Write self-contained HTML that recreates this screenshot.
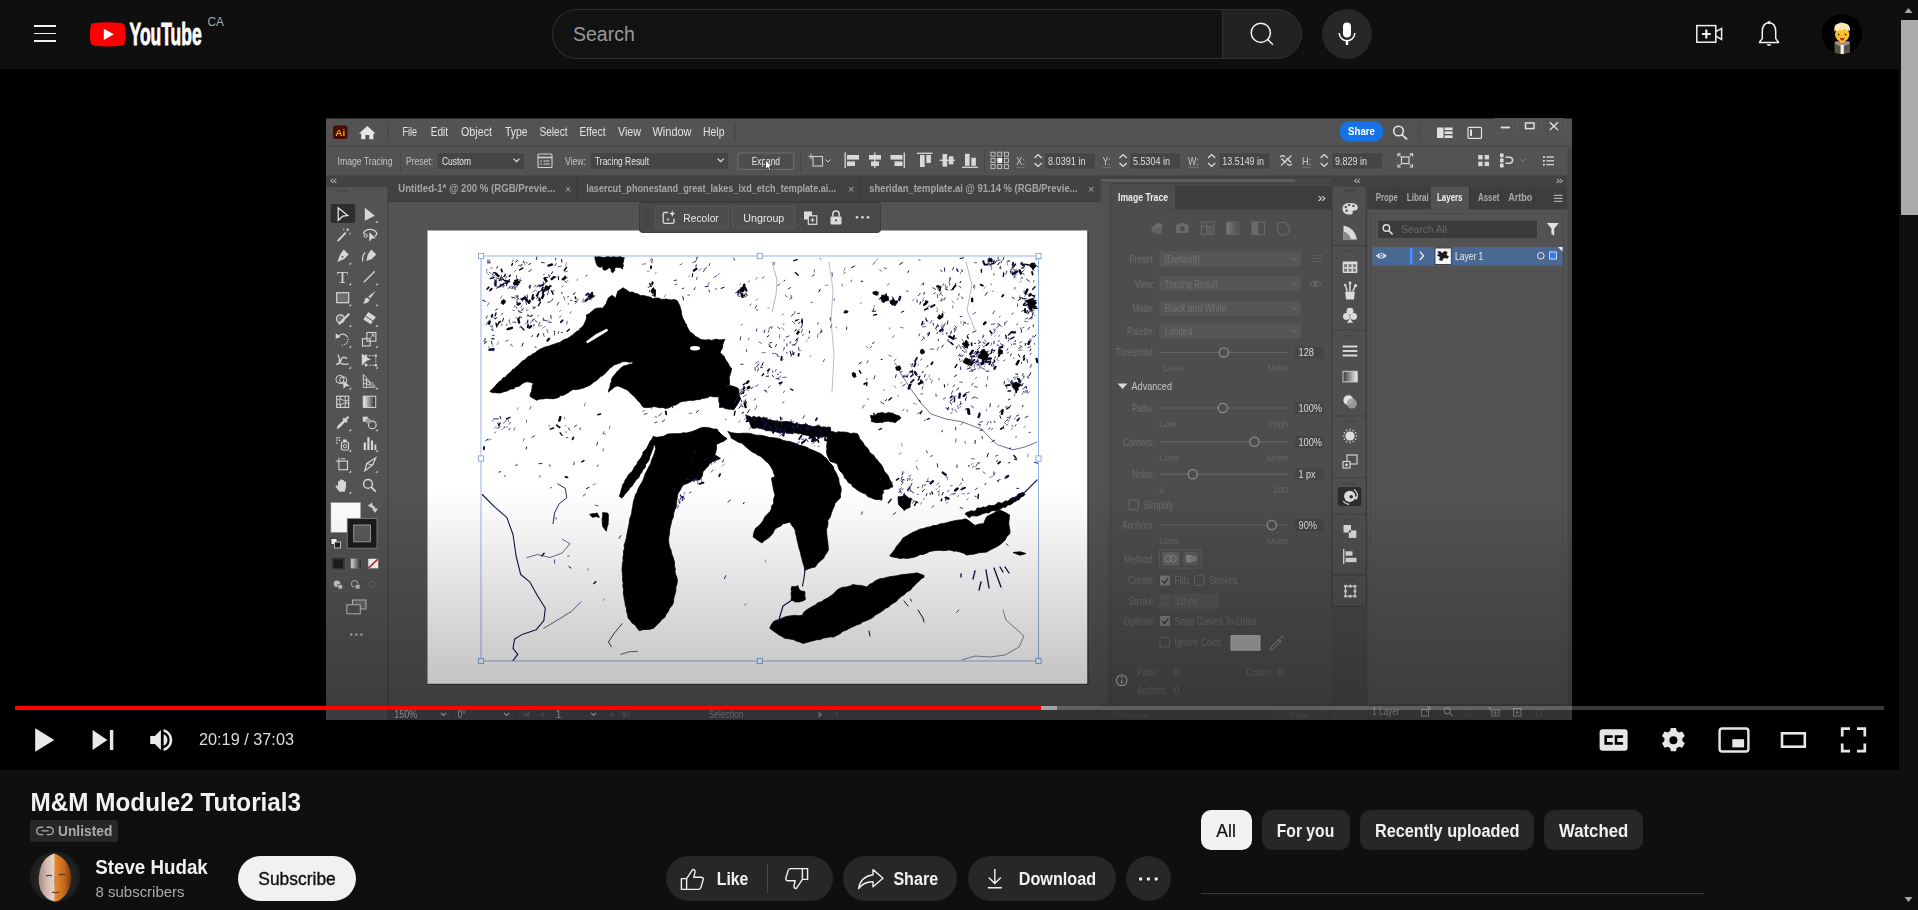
<!DOCTYPE html>
<html lang="en">
<head>
<meta charset="utf-8">
<title>M&amp;M Module2 Tutorial3 - YouTube</title>
<style>
html,body{margin:0;padding:0;background:#0f0f0f;overflow:hidden;}
body{width:1918px;height:910px;position:relative;font-family:"Liberation Sans",sans-serif;color:#f1f1f1;}
.abs{position:absolute;}
#page{position:absolute;left:0;top:0;width:1918px;height:910px;overflow:hidden;background:#0f0f0f;}
#hdr{left:0;top:0;width:1899px;height:69px;background:#0f0f0f;}
.hb{left:33.7px;width:22.6px;height:1.5px;background:#f1f1f1;}
#search{left:552px;top:9px;width:670px;height:50px;box-sizing:border-box;border:1px solid #303030;border-right:none;border-radius:25px 0 0 25px;background:#121212;}
#search span{position:absolute;left:20px;top:13px;font-size:19.5px;color:#9a9a9a;}
#sbtn{left:1222px;top:9px;width:80px;height:50px;box-sizing:border-box;border:1px solid #303030;border-radius:0 25px 25px 0;background:#222222;}
#mic{left:1322px;top:9px;width:50px;height:50px;border-radius:50%;background:#272727;}
#avatar{left:1822px;top:14px;width:40px;height:40px;border-radius:50%;background:#000;overflow:hidden;}
#player{left:0;top:69px;width:1899px;height:701px;background:#000;}
#sb{left:1899px;top:0;width:19px;height:910px;background:#0f0f0f;}
#sbthumb{left:1901px;top:20px;width:17px;height:195px;background:#ababab;}
#title{left:30px;top:787px;font-size:24px;font-weight:bold;color:#f1f1f1;white-space:nowrap;line-height:28px;}
.chip{top:810px;height:40px;border-radius:10px;background:#272727;color:#f1f1f1;font-weight:bold;font-size:17.5px;line-height:40px;text-align:center;white-space:nowrap;}
.pill{top:856px;height:45px;border-radius:23px;background:#272727;color:#f1f1f1;font-weight:bold;font-size:17.5px;line-height:45px;white-space:nowrap;}
.t{white-space:nowrap;line-height:1;}

</style>
</head>
<body>
<div id="page">
<div id="hdr" class="abs">
  <div class="abs hb" style="top:25.2px"></div><div class="abs hb" style="top:32.8px"></div><div class="abs hb" style="top:40.3px"></div>
  <svg class="abs" style="left:90px;top:22px" width="36" height="25" viewBox="0 0 36 25"><path d="M3 1.2 Q17.7 -0.8 32.4 1.2 Q34.8 2 35 5 Q36 12.3 35 19.6 Q34.8 22.6 32.4 23.4 Q17.7 25.4 3 23.4 Q0.6 22.6 0.4 19.6 Q-0.6 12.3 0.4 5 Q0.6 2 3 1.2Z" fill="#ff0000"/><path d="M13.8 6.8 L23.8 12.3 L13.8 17.9Z" fill="#fff"/></svg>
  <svg class="abs" style="left:126px;top:14px" width="110" height="40" viewBox="126 14 110 40" font-family='"Liberation Sans",sans-serif'><text x="129.6" y="45.2" font-size="31" font-weight="bold" fill="#ffffff" stroke="#ffffff" stroke-width="0.9" textLength="72" lengthAdjust="spacingAndGlyphs">YouTube</text><text x="207.5" y="25.7" font-size="12" fill="#aaaaaa" textLength="16.5" lengthAdjust="spacingAndGlyphs">CA</text></svg>
    <div class="abs" id="search"><span>Search</span></div>
  <div class="abs" id="sbtn"></div>
  <svg class="abs" style="left:1245px;top:18px" width="34" height="32" viewBox="0 0 34 32"><circle cx="15.8" cy="14.8" r="9.6" fill="none" stroke="#f1f1f1" stroke-width="1.5"/><path d="M22.8 21.6 L28 26.8" stroke="#f1f1f1" stroke-width="1.5" fill="none"/></svg>
  <div class="abs" id="mic"></div>
  <svg class="abs" style="left:1335px;top:20px" width="24" height="28" viewBox="0 0 24 28"><rect x="8" y="2.6" width="8" height="15" rx="4" fill="#fff"/><path d="M4.2 13 a7.8 7.8 0 0 0 15.6 0" fill="none" stroke="#fff" stroke-width="1.5"/><path d="M12 21 v4" stroke="#fff" stroke-width="2.4"/></svg>
  <svg class="abs" style="left:1694px;top:22px" width="30" height="24" viewBox="0 0 30 24"><rect x="2.8" y="3.6" width="19" height="16.6" fill="none" stroke="#f1f1f1" stroke-width="1.5"/><path d="M21.8 9.6 L27.6 6.4 V17.4 L21.8 14.2" fill="none" stroke="#f1f1f1" stroke-width="1.5"/><path d="M12.3 7.6 v8.8 M7.9 12 h8.8" stroke="#f1f1f1" stroke-width="2.2"/></svg>
  <svg class="abs" style="left:1756px;top:19px" width="26" height="30" viewBox="0 0 26 30"><path d="M13 3.4 C7.6 4 6.3 8.6 6.3 12.4 V19.6 L3.6 23 V23.6 H22.4 V23 L19.7 19.6 V12.4 C19.7 8.6 18.4 4 13 3.4Z" fill="none" stroke="#f1f1f1" stroke-width="1.5"/><circle cx="13" cy="3.6" r="1.6" fill="#f1f1f1"/><path d="M10.6 25.2 a2.5 2.5 0 0 0 4.8 0Z" fill="#f1f1f1"/></svg>
  <div class="abs" id="avatar">
    <svg width="40" height="40" viewBox="0 0 40 40"><rect width="40" height="40" fill="#000"/>
    <path d="M12.5 40 V30.5 Q12.5 27.5 16 27.5 H24.5 Q28 27.5 28 30.5 V40Z" fill="#56524a"/><path d="M12.5 29.5 L20 33 L28 29.5 L27 27.2 H13.5Z" fill="#9a958c"/><path d="M18.6 31 h3.2 V40 h-3.2Z" fill="#f4f4f0"/>
    <rect x="18" y="24" width="4.4" height="5" fill="#f0b13c"/>
    <ellipse cx="20.2" cy="20.3" rx="7.2" ry="7.4" fill="#fbc02d"/>
    <path d="M12.4 17.5 Q11.4 10.2 16.6 9.6 Q19 7.6 22.4 9.2 Q28.6 9.6 28 17.2 Q26.2 15.4 24.4 16.4 Q21.4 13.6 20 17 Q17 14.6 15.6 17 Q14 15.8 12.4 17.5Z" fill="#fbe9b7"/>
    <circle cx="16.6" cy="20.6" r="0.9" fill="#3b2a1a"/><circle cx="23.6" cy="20.6" r="0.9" fill="#3b2a1a"/>
    <path d="M17.6 23.4 Q20.2 24.6 22.8 23.4 Q22 26.6 20.2 26.4 Q18.4 26.6 17.6 23.4Z" fill="#c62828"/></svg>
  </div>
</div>

<div id="player" class="abs"></div>
<svg id="vid" class="abs" style="left:0;top:0" width="1899" height="770" viewBox="0 0 1899 770" font-family='"Liberation Sans",sans-serif'>
<defs>
<linearGradient id="tg" x1="0" x2="1" y1="0" y2="0"><stop offset="0" stop-color="#f2f2f2"/><stop offset="1" stop-color="#2a2a2a"/></linearGradient>
<linearGradient id="tg2" x1="0" x2="1" y1="0" y2="0"><stop offset="0" stop-color="#f2f2f2"/><stop offset="1" stop-color="#222"/></linearGradient>
<linearGradient id="tg3" x1="0" x2="1" y1="0" y2="0"><stop offset="0" stop-color="#777"/><stop offset="1" stop-color="#4e4e4e"/></linearGradient>
<linearGradient id="tg4" x1="0" x2="1" y1="0" y2="0"><stop offset="0" stop-color="#3a3a3a"/><stop offset="1" stop-color="#f0f0f0"/></linearGradient>
<linearGradient id="shade" x1="0" x2="0" y1="0" y2="1"><stop offset="0" stop-color="#000" stop-opacity="0"/><stop offset="1" stop-color="#000" stop-opacity="0.34"/></linearGradient>
<filter id="soft" x="0" y="0" width="100%" height="100%" filterUnits="userSpaceOnUse"><feGaussianBlur stdDeviation="0.45"/></filter>
<clipPath id="frame"><rect x="326" y="118.5" width="1246" height="601.5"/></clipPath>
</defs>
<g clip-path="url(#frame)"><g filter="url(#soft)">
<rect x="326" y="118.5" width="1246" height="601.5" fill="#535353"/>
<line x1="326" y1="146" x2="1572" y2="146" stroke="#474747" stroke-width="1"/>
<rect x="326" y="175.5" width="1246" height="11.5" fill="#424242"/>
<rect x="388" y="176.5" width="713" height="25" fill="#424242"/>
<rect x="333" y="125.5" width="14.5" height="13.5" fill="#470c04" rx="2.5"/>
<text x="335.3" y="136.3" font-size="9.5" fill="#ff9a00" font-weight="bold" textLength="10" lengthAdjust="spacingAndGlyphs">Ai</text>
<path d="M367.3 126 L375.6 133.4 L373.4 133.4 L373.4 139.2 L369.3 139.2 L369.3 135 L365.4 135 L365.4 139.2 L361.2 139.2 L361.2 133.4 L359 133.4Z" fill="#e6e6e6"/>
<line x1="388" y1="123" x2="388" y2="141" stroke="#474747" stroke-width="1"/>
<text x="402.5" y="136.3" font-size="12" fill="#e2e2e2" textLength="14.5" lengthAdjust="spacingAndGlyphs">File</text>
<text x="430.7" y="136.3" font-size="12" fill="#e2e2e2" textLength="17.3" lengthAdjust="spacingAndGlyphs">Edit</text>
<text x="461" y="136.3" font-size="12" fill="#e2e2e2" textLength="31" lengthAdjust="spacingAndGlyphs">Object</text>
<text x="505" y="136.3" font-size="12" fill="#e2e2e2" textLength="22.5" lengthAdjust="spacingAndGlyphs">Type</text>
<text x="539.5" y="136.3" font-size="12" fill="#e2e2e2" textLength="28" lengthAdjust="spacingAndGlyphs">Select</text>
<text x="579.5" y="136.3" font-size="12" fill="#e2e2e2" textLength="26" lengthAdjust="spacingAndGlyphs">Effect</text>
<text x="618" y="136.3" font-size="12" fill="#e2e2e2" textLength="23" lengthAdjust="spacingAndGlyphs">View</text>
<text x="652.5" y="136.3" font-size="12" fill="#e2e2e2" textLength="39" lengthAdjust="spacingAndGlyphs">Window</text>
<text x="703" y="136.3" font-size="12" fill="#e2e2e2" textLength="21.5" lengthAdjust="spacingAndGlyphs">Help</text>
<line x1="735" y1="123" x2="735" y2="141" stroke="#474747" stroke-width="1"/>
<rect x="1339.5" y="121.2" width="44" height="20.6" fill="#1473e6" rx="10.3"/>
<text x="1348" y="135.3" font-size="11" fill="#ffffff" font-weight="bold" textLength="27" lengthAdjust="spacingAndGlyphs">Share</text>
<circle cx="1398.5" cy="131" r="4.8" fill="none" stroke="#e6e6e6" stroke-width="1.6"/>
<line x1="1402" y1="134.6" x2="1407" y2="139.3" stroke="#e6e6e6" stroke-width="1.8"/>
<line x1="1419.5" y1="123" x2="1419.5" y2="141" stroke="#474747" stroke-width="1"/>
<rect x="1437" y="127.5" width="6.5" height="10.5" fill="#e0e0e0"/>
<rect x="1444.6" y="127.5" width="8" height="2.6" fill="#e0e0e0"/>
<rect x="1444.6" y="131.4" width="8" height="2.6" fill="#e0e0e0"/>
<rect x="1444.6" y="135.4" width="8" height="2.6" fill="#e0e0e0"/>
<rect x="1468" y="127.3" width="13.5" height="11" fill="none" rx="1" stroke="#e0e0e0" stroke-width="1.2"/>
<rect x="1470" y="129.5" width="2" height="6.6" fill="#e0e0e0"/>
<rect x="1493" y="118.5" width="72.5" height="14.5" fill="none" rx="2" stroke="#5d5d5d" stroke-width="0.8"/>
<line x1="1517.5" y1="119" x2="1517.5" y2="133" stroke="#5d5d5d" stroke-width="0.8"/>
<line x1="1541.5" y1="119" x2="1541.5" y2="133" stroke="#5d5d5d" stroke-width="0.8"/>
<line x1="1500.7" y1="127.5" x2="1510" y2="127.5" stroke="#e0e0e0" stroke-width="1.8"/>
<rect x="1525.5" y="123" width="8.5" height="5.6" fill="none" stroke="#e0e0e0" stroke-width="1.5"/>
<path d="M1549.8 122.2 L1558 130 M1558 122.2 L1549.8 130" fill="none" stroke="#e0e0e0" stroke-width="1.3"/>
<rect x="329.5" y="154" width="1" height="1" fill="#474747"/>
<rect x="329.5" y="156.5" width="1" height="1" fill="#474747"/>
<rect x="329.5" y="159" width="1" height="1" fill="#474747"/>
<rect x="329.5" y="161.5" width="1" height="1" fill="#474747"/>
<rect x="329.5" y="164" width="1" height="1" fill="#474747"/>
<rect x="329.5" y="166.5" width="1" height="1" fill="#474747"/>
<text x="337.5" y="165" font-size="10.5" fill="#c4c4c4" textLength="55" lengthAdjust="spacingAndGlyphs">Image Tracing</text>
<line x1="400.5" y1="150" x2="400.5" y2="172" stroke="#474747" stroke-width="1"/>
<text x="406" y="165" font-size="10.5" fill="#c4c4c4" textLength="27" lengthAdjust="spacingAndGlyphs">Preset:</text>
<rect x="437" y="152.5" width="87.5" height="17" fill="#454545" rx="1.5" stroke="#5a5a5a" stroke-width="0.6"/>
<text x="442" y="165" font-size="10.5" fill="#e6e6e6" textLength="29" lengthAdjust="spacingAndGlyphs">Custom</text>
<path d="M513.5 158.7 L516.5 161.7 L519.5 158.7" fill="none" stroke="#e0e0e0" stroke-width="1.2"/>
<rect x="538" y="154" width="14" height="13.5" fill="none" rx="1" stroke="#d0d0d0" stroke-width="1.1"/>
<line x1="538" y1="157.5" x2="552" y2="157.5" stroke="#d0d0d0" stroke-width="1.6"/>
<line x1="543.5" y1="161" x2="549.5" y2="161" stroke="#d0d0d0" stroke-width="1"/>
<line x1="543.5" y1="164" x2="549.5" y2="164" stroke="#d0d0d0" stroke-width="1"/>
<rect x="540.3" y="160.4" width="1.4" height="1.3" fill="#d0d0d0"/>
<rect x="540.3" y="163.4" width="1.4" height="1.3" fill="#d0d0d0"/>
<text x="565" y="165" font-size="10.5" fill="#c4c4c4" textLength="21" lengthAdjust="spacingAndGlyphs">View:</text>
<rect x="590" y="152.5" width="138.7" height="17" fill="#454545" rx="1.5" stroke="#5a5a5a" stroke-width="0.6"/>
<text x="595" y="165" font-size="10.5" fill="#e6e6e6" textLength="54" lengthAdjust="spacingAndGlyphs">Tracing Result</text>
<path d="M717.7 158.7 L720.7 161.7 L723.7 158.7" fill="none" stroke="#e0e0e0" stroke-width="1.2"/>
<rect x="738" y="153" width="55.7" height="16.3" fill="#4d4d4d" rx="2" stroke="#737373" stroke-width="0.9"/>
<text x="751.7" y="165" font-size="10.5" fill="#e6e6e6" textLength="28.3" lengthAdjust="spacingAndGlyphs">Expand</text>
<path d="M765.5 160 L765.5 169.2 L767.7 167.3 L769.2 170.6 L770.6 170 L769.2 166.8 L772 166.6Z" fill="#ffffff" stroke="#222" stroke-width="0.7"/>
<line x1="800.5" y1="150" x2="800.5" y2="172" stroke="#474747" stroke-width="1"/>
<rect x="813" y="156.5" width="9.5" height="9.5" fill="none" stroke="#cfcfcf" stroke-width="1.1"/>
<line x1="811" y1="153.5" x2="811" y2="159" stroke="#cfcfcf" stroke-width="1"/>
<line x1="808.5" y1="156.5" x2="814" y2="156.5" stroke="#cfcfcf" stroke-width="1"/>
<path d="M825.5 159.5 L828 162 L830.5 159.5" fill="none" stroke="#cfcfcf" stroke-width="1"/>
<line x1="845.2" y1="152.5" x2="845.2" y2="168" stroke="#d8d8d8" stroke-width="1.3"/>
<rect x="847" y="155" width="12" height="4.6" fill="#d8d8d8"/>
<rect x="847" y="161.4" width="8" height="4.6" fill="#d8d8d8"/>
<line x1="874.8" y1="152.5" x2="874.8" y2="168" stroke="#d8d8d8" stroke-width="1.3"/>
<rect x="869" y="155" width="12" height="4.6" fill="#d8d8d8"/>
<rect x="871" y="161.4" width="8" height="4.6" fill="#d8d8d8"/>
<line x1="904.3" y1="152.5" x2="904.3" y2="168" stroke="#d8d8d8" stroke-width="1.3"/>
<rect x="890.5" y="155" width="12" height="4.6" fill="#d8d8d8"/>
<rect x="894.5" y="161.4" width="8" height="4.6" fill="#d8d8d8"/>
<line x1="917" y1="153.3" x2="932.5" y2="153.3" stroke="#d8d8d8" stroke-width="1.3"/>
<rect x="920" y="155" width="4.6" height="12" fill="#d8d8d8"/>
<rect x="926.3" y="155" width="4.6" height="8" fill="#d8d8d8"/>
<line x1="939.5" y1="160.3" x2="955" y2="160.3" stroke="#d8d8d8" stroke-width="1.3"/>
<rect x="942.5" y="154" width="4.6" height="12.6" fill="#d8d8d8"/>
<rect x="948.8" y="156.3" width="4.6" height="8" fill="#d8d8d8"/>
<line x1="962" y1="167.3" x2="978" y2="167.3" stroke="#d8d8d8" stroke-width="1.3"/>
<rect x="965" y="153.8" width="4.6" height="12" fill="#d8d8d8"/>
<rect x="971.3" y="157.8" width="4.6" height="8" fill="#d8d8d8"/>
<line x1="984.5" y1="150" x2="984.5" y2="172" stroke="#474747" stroke-width="1"/>
<rect x="991.0" y="152.2" width="4" height="4" fill="none" stroke="#c8c8c8" stroke-width="0.9"/>
<rect x="991.0" y="158.39999999999998" width="4" height="4" fill="none" stroke="#c8c8c8" stroke-width="0.9"/>
<rect x="991.0" y="164.6" width="4" height="4" fill="none" stroke="#c8c8c8" stroke-width="0.9"/>
<rect x="997.7" y="152.2" width="4" height="4" fill="none" stroke="#c8c8c8" stroke-width="0.9"/>
<rect x="997.3000000000001" y="157.99999999999997" width="4.8" height="4.8" fill="#f2f2f2"/>
<rect x="997.7" y="164.6" width="4" height="4" fill="none" stroke="#c8c8c8" stroke-width="0.9"/>
<rect x="1004.4" y="152.2" width="4" height="4" fill="none" stroke="#c8c8c8" stroke-width="0.9"/>
<rect x="1004.4" y="158.39999999999998" width="4" height="4" fill="none" stroke="#c8c8c8" stroke-width="0.9"/>
<rect x="1004.4" y="164.6" width="4" height="4" fill="none" stroke="#c8c8c8" stroke-width="0.9"/>
<text x="1016.3" y="165" font-size="10.5" fill="#c4c4c4" textLength="8.7" lengthAdjust="spacingAndGlyphs">X:</text>
<line x1="1016.3" y1="167.3" x2="1025.0" y2="167.3" stroke="#8a8a8a" stroke-width="0.6"/>
<path d="M1034.5 158 L1038.1 154.6 L1041.7 158 M1034.5 163 L1038.1 166.4 L1041.7 163" fill="none" stroke="#e0e0e0" stroke-width="1.2"/>
<rect x="1045" y="153" width="50.5" height="15.8" fill="#454545" rx="1.2" stroke="#5a5a5a" stroke-width="0.5"/>
<text x="1048" y="164.6" font-size="10.5" fill="#dedede" textLength="37.5" lengthAdjust="spacingAndGlyphs">8.0391 in</text>
<text x="1102.5" y="165" font-size="10.5" fill="#c4c4c4" textLength="8" lengthAdjust="spacingAndGlyphs">Y:</text>
<line x1="1102.5" y1="167.3" x2="1110.5" y2="167.3" stroke="#8a8a8a" stroke-width="0.6"/>
<path d="M1119.5 158 L1123.1 154.6 L1126.7 158 M1119.5 163 L1123.1 166.4 L1126.7 163" fill="none" stroke="#e0e0e0" stroke-width="1.2"/>
<rect x="1130" y="153" width="50.7" height="15.8" fill="#454545" rx="1.2" stroke="#5a5a5a" stroke-width="0.5"/>
<text x="1133" y="164.6" font-size="10.5" fill="#dedede" textLength="37" lengthAdjust="spacingAndGlyphs">5.5304 in</text>
<text x="1188" y="165" font-size="10.5" fill="#c4c4c4" textLength="10.7" lengthAdjust="spacingAndGlyphs">W:</text>
<line x1="1188" y1="167.3" x2="1198.7" y2="167.3" stroke="#8a8a8a" stroke-width="0.6"/>
<path d="M1208 158 L1211.6 154.6 L1215.2 158 M1208 163 L1211.6 166.4 L1215.2 163" fill="none" stroke="#e0e0e0" stroke-width="1.2"/>
<rect x="1219.3" y="153" width="50.7" height="15.8" fill="#454545" rx="1.2" stroke="#5a5a5a" stroke-width="0.5"/>
<text x="1222.3" y="164.6" font-size="10.5" fill="#dedede" textLength="41.7" lengthAdjust="spacingAndGlyphs">13.5149 in</text>
<text x="1302" y="165" font-size="10.5" fill="#c4c4c4" textLength="9.3" lengthAdjust="spacingAndGlyphs">H:</text>
<line x1="1302" y1="167.3" x2="1311.3" y2="167.3" stroke="#8a8a8a" stroke-width="0.6"/>
<path d="M1320.6 158 L1324.1999999999998 154.6 L1327.8 158 M1320.6 163 L1324.1999999999998 166.4 L1327.8 163" fill="none" stroke="#e0e0e0" stroke-width="1.2"/>
<rect x="1332" y="153" width="50.5" height="15.8" fill="#454545" rx="1.2" stroke="#5a5a5a" stroke-width="0.5"/>
<text x="1335" y="164.6" font-size="10.5" fill="#dedede" textLength="32" lengthAdjust="spacingAndGlyphs">9.829 in</text>
<path d="M1280 157 q2.5 -2.5 5 0 M1287 164 q2.5 2.5 5 0 M1281 165.5 L1291.5 155.5" fill="none" stroke="#d0d0d0" stroke-width="1.2"/>
<path d="M1281.5 158.5 L1286 163 M1286.5 158 L1291 162.5" fill="none" stroke="#d0d0d0" stroke-width="1.6"/>
<rect x="1401.5" y="157" width="7.5" height="6.6" fill="none" stroke="#d8d8d8" stroke-width="1.2"/>
<path d="M1398 156.5 L1398 153.8 L1400.7 153.8 M1409.8 153.8 L1412.5 153.8 L1412.5 156.5 M1412.5 164.3 L1412.5 167 L1409.8 167 M1400.7 167 L1398 167 L1398 164.3" fill="none" stroke="#d8d8d8" stroke-width="1.2"/>
<path d="M1398.4 154.2 L1401 156.6 M1412.1 154.2 L1409.5 156.6 M1412.1 166.6 L1409.5 164.2 M1398.4 166.6 L1401 164.2" fill="none" stroke="#d8d8d8" stroke-width="1"/>
<rect x="1478.2" y="155" width="4.4" height="4.4" fill="#d8d8d8"/>
<rect x="1484.6" y="155" width="4.4" height="4.4" fill="#d8d8d8"/>
<rect x="1478.2" y="161.7" width="4.4" height="4.4" fill="#d8d8d8"/>
<rect x="1484.6" y="161.7" width="4.4" height="4.4" fill="#d8d8d8"/>
<rect x="1500" y="153.5" width="3.6" height="3.6" fill="#d8d8d8"/>
<rect x="1500" y="158.6" width="3.6" height="3.6" fill="#d8d8d8"/>
<rect x="1500" y="163.7" width="3.6" height="3.6" fill="#d8d8d8"/>
<line x1="1501.8" y1="153.5" x2="1501.8" y2="168" stroke="#d8d8d8" stroke-width="0.8"/>
<path d="M1505.5 157.3 L1509.5 157.3 a3 3 0 0 1 0 6 L1505.5 163.3" fill="none" stroke="#d8d8d8" stroke-width="1.5"/>
<path d="M1520 158.7 L1522.7 161.4 L1525.4 158.7" fill="none" stroke="#7d7d7d" stroke-width="1"/>
<rect x="1543" y="156.2" width="1.8" height="1.8" fill="#d8d8d8"/>
<line x1="1546.3" y1="157" x2="1554" y2="157" stroke="#d8d8d8" stroke-width="1.3"/>
<rect x="1543" y="160.0" width="1.8" height="1.8" fill="#d8d8d8"/>
<line x1="1546.3" y1="160.8" x2="1554" y2="160.8" stroke="#d8d8d8" stroke-width="1.3"/>
<rect x="1543" y="163.79999999999998" width="1.8" height="1.8" fill="#d8d8d8"/>
<line x1="1546.3" y1="164.6" x2="1554" y2="164.6" stroke="#d8d8d8" stroke-width="1.3"/>
<rect x="1567.5" y="146.5" width="4.5" height="573.5" fill="#4a4a4a"/>
<text x="329.8" y="184" font-size="10" fill="#b8b8b8" textLength="7.5" lengthAdjust="spacingAndGlyphs">«</text>
<text x="1353.5" y="184" font-size="10" fill="#b8b8b8" textLength="7.5" lengthAdjust="spacingAndGlyphs">«</text>
<text x="1555.8" y="184" font-size="10" fill="#b8b8b8" textLength="7.5" lengthAdjust="spacingAndGlyphs">»</text>
<text x="398.2" y="192.2" font-size="10.5" fill="#a6a6a6" font-weight="bold" textLength="157" lengthAdjust="spacingAndGlyphs">Untitled-1* @ 200 % (RGB/Previe...</text>
<text x="564.8" y="192.8" font-size="11" fill="#a6a6a6">×</text>
<line x1="577" y1="177" x2="577" y2="201" stroke="#383838" stroke-width="1"/>
<text x="586.2" y="192.2" font-size="10.5" fill="#a6a6a6" font-weight="bold" textLength="249.8" lengthAdjust="spacingAndGlyphs">lasercut_phonestand_great_lakes_ixd_etch_template.ai...</text>
<text x="848" y="192.8" font-size="11" fill="#a6a6a6">×</text>
<line x1="860" y1="177" x2="860" y2="201" stroke="#383838" stroke-width="1"/>
<text x="869.2" y="192.2" font-size="10.5" fill="#a6a6a6" font-weight="bold" textLength="208.3" lengthAdjust="spacingAndGlyphs">sheridan_template.ai @ 91.14 % (RGB/Previe...</text>
<text x="1088" y="192.8" font-size="11" fill="#a6a6a6">×</text>
<line x1="388" y1="201.5" x2="1101" y2="201.5" stroke="#3a3a3a" stroke-width="1"/>
<line x1="387.7" y1="187" x2="387.7" y2="720" stroke="#454545" stroke-width="1.4"/>
<rect x="337.0" y="190.2" width="0.8" height="1.6" fill="#3f3f3f"/>
<rect x="338.6" y="190.2" width="0.8" height="1.6" fill="#3f3f3f"/>
<rect x="340.2" y="190.2" width="0.8" height="1.6" fill="#3f3f3f"/>
<rect x="341.8" y="190.2" width="0.8" height="1.6" fill="#3f3f3f"/>
<rect x="343.4" y="190.2" width="0.8" height="1.6" fill="#3f3f3f"/>
<rect x="345.0" y="190.2" width="0.8" height="1.6" fill="#3f3f3f"/>
<rect x="346.6" y="190.2" width="0.8" height="1.6" fill="#3f3f3f"/>
<rect x="330.7" y="204" width="24.5" height="19" fill="#2d2d2d" rx="2"/>
<path d="M338.2 207.8 L347.7 215.5 L342.9 216.10000000000002 L338.2 220.3Z" fill="none" stroke="#f0f0f0" stroke-width="1.2"/>
<path d="M364.8 207.8 L374.8 215.8 L364.8 220.8Z" fill="#d6d6d6"/>
<path d="M377.8 220.3 L377.8 222.8 L375.3 222.8Z" fill="#c8c8c8"/>
<line x1="337.7" y1="241.2" x2="345.7" y2="232.7" stroke="#d6d6d6" stroke-width="1.8"/>
<path d="M347.7 228.2 v3 M346.2 229.7 h3 M350.0 232.7 v2 M343.7 228.7 v1.6" fill="none" stroke="#d6d6d6" stroke-width="0.9"/>
<path d="M363.8 234.2 a6.5 4 0 1 1 11 2" fill="none" stroke="#d6d6d6" stroke-width="1.2"/>
<circle cx="365.8" cy="235.7" r="1.6" fill="none" stroke="#d6d6d6" stroke-width="1"/>
<path d="M369.3 232.2 L375.8 238.2 L372.1 238.5 L369.3 241.39999999999998Z" fill="#d6d6d6"/>
<path d="M343.7 249.5 L348.7 254.5 L344.2 259 L337.2 262 L340.2 254.5Z" fill="#d6d6d6"/>
<circle cx="342.5" cy="256.8" r="1" fill="#535353"/>
<path d="M351.2 262 L351.2 264.5 L348.7 264.5Z" fill="#c8c8c8"/>
<path d="M371.3 249.5 L376.3 254.5 L371.8 259 L366.3 261 L367.8 254.5Z" fill="#d6d6d6"/>
<path d="M362.8 261.5 q-1 -6 2.5 -9" fill="none" stroke="#d6d6d6" stroke-width="1.1"/>
<text x="337.09999999999997" y="282.6" font-size="16.5" fill="#d6d6d6" font-family='"Liberation Serif",serif' textLength="11" lengthAdjust="spacingAndGlyphs">T</text>
<path d="M351.2 282.8 L351.2 285.3 L348.7 285.3Z" fill="#c8c8c8"/>
<line x1="363.8" y1="282.3" x2="374.8" y2="271.3" stroke="#d6d6d6" stroke-width="1.3"/>
<path d="M377.8 282.8 L377.8 285.3 L375.3 285.3Z" fill="#c8c8c8"/>
<rect x="336.7" y="292.7" width="12" height="10" fill="#6d6d6d" stroke="#d6d6d6" stroke-width="1.2"/>
<path d="M351.2 303.7 L351.2 306.2 L348.7 306.2Z" fill="#c8c8c8"/>
<path d="M375.8 290.7 L370.3 298.2 L368.3 296.5Z" fill="#d6d6d6"/>
<path d="M367.5 297.9 q3.2 1.2 1.2 3.6 q-2.6 2.6 -5.6 1.7 q2.2 -1.7 1.6 -3.6 q0.8 -2.2 2.8 -1.7Z" fill="#d6d6d6"/>
<path d="M377.8 303.7 L377.8 306.2 L375.3 306.2Z" fill="#c8c8c8"/>
<circle cx="340.4" cy="318.8" r="4" fill="#6d6d6d" stroke="#d6d6d6" stroke-width="1.2"/>
<line x1="338.7" y1="324.3" x2="349.2" y2="313.7" stroke="#d6d6d6" stroke-width="2"/>
<path d="M351.2 324.5 L351.2 327.0 L348.7 327.0Z" fill="#c8c8c8"/>
<path d="M368.3 312.0 L375.8 317.0 L370.8 324.3 L363.3 319.5Z" fill="#d6d6d6"/>
<line x1="365.8" y1="316.3" x2="373.1" y2="321.1" stroke="#535353" stroke-width="1"/>
<path d="M377.8 324.5 L377.8 327.0 L375.3 327.0Z" fill="#c8c8c8"/>
<path d="M337.9 337.1 a5.4 5.4 0 1 1 -0.4 4" fill="none" stroke="#d6d6d6" stroke-width="1.2" stroke-dasharray="12 1.2 1 1.2 1 1.2 1 1.2 1 1.2 1 30"/>
<path d="M335.7 333.3 L340.5 337.0 L335.7 338.8Z" fill="#d6d6d6"/>
<path d="M351.2 345.3 L351.2 347.8 L348.7 347.8Z" fill="#c8c8c8"/>
<rect x="362.5" y="338.7" width="7.6" height="7.2" fill="none" stroke="#d6d6d6" stroke-width="1.1"/>
<rect x="366.90000000000003" y="332.5" width="9" height="8.6" fill="none" stroke="#d6d6d6" stroke-width="1.1"/>
<path d="M370.3 337.8 L373.8 334.3 M371.1 334.3 h2.8 v2.8" fill="none" stroke="#d6d6d6" stroke-width="0.9"/>
<path d="M377.8 345.3 L377.8 347.8 L375.3 347.8Z" fill="#c8c8c8"/>
<path d="M336.2 364.7 q3.5 -1 5 -5 t6 -1.2 M337.7 354.7 q2.5 3.2 1.5 7.8 M339.7 362.4 q3.8 3.2 8.8 1.2" fill="none" stroke="#d6d6d6" stroke-width="1.3"/>
<path d="M351.2 366.2 L351.2 368.7 L348.7 368.7Z" fill="#c8c8c8"/>
<rect x="365.8" y="355.7" width="10" height="9.5" fill="none" stroke="#d6d6d6" stroke-width="1" stroke-dasharray="1.6 1.4"/>
<path d="M361.8 353.7 L370.8 359.7 L366.5 360.7 L361.8 365.7Z" fill="#d6d6d6"/>
<path d="M377.8 366.2 L377.8 368.7 L375.3 368.7Z" fill="#c8c8c8"/>
<rect x="364.7" y="354.59999999999997" width="2.2" height="2.2" fill="#d6d6d6"/>
<rect x="374.7" y="354.59999999999997" width="2.2" height="2.2" fill="#d6d6d6"/>
<rect x="374.7" y="364.09999999999997" width="2.2" height="2.2" fill="#d6d6d6"/>
<rect x="364.7" y="364.09999999999997" width="2.2" height="2.2" fill="#d6d6d6"/>
<circle cx="339.9" cy="379.4" r="4" fill="none" stroke="#d6d6d6" stroke-width="1"/>
<circle cx="343.2" cy="380.4" r="3.6" fill="none" stroke="#d6d6d6" stroke-width="1"/>
<path d="M343.2 380.5 L349.7 386 L346.0 386.2 L343.5 388.8Z" fill="#d6d6d6"/>
<path d="M351.2 387 L351.2 389.5 L348.7 389.5Z" fill="#c8c8c8"/>
<path d="M363.3 374.5 L363.3 387.5 L374.8 387.5Z M363.3 379 L370.5 383.2 M363.3 383.3 L372.8 385.4 M366.5 378 v9.5 M370.1 382 v5.5" fill="none" stroke="#d6d6d6" stroke-width="0.9"/>
<path d="M367.3 387.5 L376.8 387.5 L372.3 381.5Z" fill="#8a8a8a"/>
<path d="M377.8 387 L377.8 389.5 L375.3 389.5Z" fill="#c8c8c8"/>
<rect x="336.7" y="396.2" width="12" height="11.2" fill="none" stroke="#d6d6d6" stroke-width="1.1"/>
<path d="M336.7 400.0 q3 -2.2 6 0 t6 0 M336.7 403.8 q3 2.2 6 0 t6 0 M340.7 396.2 q-2 5.6 0 11.2 M344.7 396.2 q2.2 5.6 0 11.2" fill="none" stroke="#d6d6d6" stroke-width="0.9"/>
<rect x="363.3" y="396.2" width="12.4" height="11.2" fill="url(#tg)" stroke="#d6d6d6" stroke-width="1"/>
<path d="M336.7 429.2 L337.7 425.7 L343.9 419.5 L345.7 421.3 L339.7 427.7Z" fill="#d6d6d6"/>
<path d="M343.2 418.4 L346.9 422.09999999999997 M345.7 419.5 L348.5 416.7" fill="none" stroke="#d6d6d6" stroke-width="2.2"/>
<path d="M351.2 428.7 L351.2 431.2 L348.7 431.2Z" fill="#c8c8c8"/>
<circle cx="372.3" cy="424.9" r="3.8" fill="none" stroke="#d6d6d6" stroke-width="1.1"/>
<rect x="362.8" y="416.7" width="5" height="5" fill="#d6d6d6"/>
<circle cx="368.3" cy="420.9" r="2.6" fill="#9a9a9a"/>
<path d="M377.8 428.7 L377.8 431.2 L375.3 431.2Z" fill="#c8c8c8"/>
<rect x="341.5" y="442.0" width="7" height="8" fill="none" rx="1.2" stroke="#d6d6d6" stroke-width="1.2"/>
<circle cx="345.0" cy="446.1" r="1.7" fill="none" stroke="#d6d6d6" stroke-width="0.9"/>
<rect x="343.0" y="439.5" width="3.6" height="2.5" fill="#d6d6d6"/>
<rect x="336.2" y="437.0" width="1.4" height="1.4" fill="#d6d6d6"/>
<rect x="338.7" y="437.0" width="1.4" height="1.4" fill="#d6d6d6"/>
<rect x="336.2" y="439.5" width="1.4" height="1.4" fill="#d6d6d6"/>
<rect x="338.9" y="439.7" width="1.4" height="1.4" fill="#d6d6d6"/>
<rect x="336.2" y="442.3" width="1.4" height="1.4" fill="#d6d6d6"/>
<path d="M351.2 449.5 L351.2 452.0 L348.7 452.0Z" fill="#c8c8c8"/>
<rect x="363.7" y="442.5" width="2.2" height="7.5" fill="#d6d6d6"/>
<rect x="367.3" y="437.2" width="2.2" height="12.8" fill="#d6d6d6"/>
<rect x="370.90000000000003" y="440.5" width="2.2" height="9.5" fill="#d6d6d6"/>
<rect x="374.5" y="444.5" width="1.8" height="5.5" fill="#d6d6d6"/>
<path d="M377.8 449.5 L377.8 452.0 L375.3 452.0Z" fill="#c8c8c8"/>
<rect x="338.9" y="461.1" width="8.6" height="8.6" fill="none" stroke="#d6d6d6" stroke-width="1.1"/>
<path d="M335.7 461.1 h3.2 M338.9 457.8 v3.3 M341.2 458.8 l4 0" fill="none" stroke="#d6d6d6" stroke-width="1"/>
<path d="M351.2 470.3 L351.2 472.8 L348.7 472.8Z" fill="#c8c8c8"/>
<path d="M375.8 457.8 L372.6 465.1 L364.8 470.8 L366.8 463.5Z" fill="none" stroke="#d6d6d6" stroke-width="1.2"/>
<line x1="366.8" y1="463.5" x2="372.6" y2="465.1" stroke="#d6d6d6" stroke-width="1"/>
<path d="M377.8 470.3 L377.8 472.8 L375.3 472.8Z" fill="#c8c8c8"/>
<path d="M339.5 491.7 q-2.6 -2.6 -4.2 -6 q1.3 -1.3 2.8 0.8 l0 -5.2 q1 -1 1.7 0 l0.3 -1.6 q1 -1 1.9 0 l0.4 0.6 q1 -0.9 1.8 0.2 l0.2 1.2 q1 -0.7 1.6 0.3 q0.6 5.4 -1.2 9.7Z" fill="#d6d6d6"/>
<path d="M351.2 491.2 L351.2 493.7 L348.7 493.7Z" fill="#c8c8c8"/>
<circle cx="368.0" cy="483.9" r="4.4" fill="none" stroke="#d6d6d6" stroke-width="1.4"/>
<line x1="371.3" y1="487.2" x2="375.8" y2="491.7" stroke="#d6d6d6" stroke-width="1.8"/>
<rect x="330.9" y="502.6" width="29.7" height="29.7" fill="#ffffff" stroke="#9a9a9a" stroke-width="0.6"/>
<rect x="347.2" y="518.6" width="29.8" height="29.6" fill="#1f1f1f" stroke="#8a8a8a" stroke-width="0.8"/>
<rect x="353.7" y="525" width="16.8" height="16.8" fill="#5a5a5a" stroke="#a5a5a5" stroke-width="0.9"/>
<path d="M370.5 505.5 q4.5 0 4.5 5 M368.8 505.5 l3 -2 v4Z M375 512 l-2 -3 h4Z" fill="#d0d0d0" stroke="#d0d0d0" stroke-width="1.1"/>
<rect x="331" y="538.5" width="6" height="6" fill="#fff" stroke="#222" stroke-width="0.7"/>
<rect x="334.5" y="542" width="6" height="6" fill="#222" stroke="#ddd" stroke-width="0.9"/>
<rect x="331" y="556.8" width="14.4" height="13.6" fill="#3c3c3c" stroke="#6a6a6a" stroke-width="0.6"/>
<rect x="333.6" y="559.4" width="9.2" height="8.4" fill="#1c1c1c"/>
<rect x="350.8" y="558.6" width="10.4" height="10" fill="url(#tg2)" stroke="#6a6a6a" stroke-width="0.6"/>
<rect x="368" y="558.6" width="10.4" height="10" fill="#ffffff" stroke="#6a6a6a" stroke-width="0.6"/>
<line x1="368.5" y1="568" x2="378" y2="559" stroke="#e0141e" stroke-width="1.7"/>
<rect x="330.9" y="577.7" width="49.7" height="13.7" fill="none" rx="1.5" stroke="#5e5e5e" stroke-width="0.7"/>
<circle cx="337" cy="583.8" r="3.3" fill="#d0d0d0"/>
<rect x="338" y="584.6" width="4.4" height="4.4" fill="#d0d0d0" stroke="#555" stroke-width="0.6"/>
<circle cx="354.6" cy="583.8" r="3.3" fill="none" stroke="#c0c0c0" stroke-width="1"/>
<rect x="355.6" y="584.6" width="4.4" height="4.4" fill="#c0c0c0" stroke="#555" stroke-width="0.6"/>
<circle cx="372.2" cy="584.3" r="3.2" fill="none" stroke="#6a6a6a" stroke-width="1"/>
<rect x="352.5" y="600" width="13.5" height="9" fill="#6a6a6a" stroke="#c8c8c8" stroke-width="1"/>
<rect x="346.8" y="604.8" width="13.5" height="9" fill="#535353" stroke="#c8c8c8" stroke-width="1"/>
<circle cx="351.2" cy="634.6" r="1.2" fill="#c8c8c8"/>
<circle cx="356.3" cy="634.6" r="1.2" fill="#c8c8c8"/>
<circle cx="361.4" cy="634.6" r="1.2" fill="#c8c8c8"/>
<rect x="427.5" y="230.5" width="660" height="453.5" fill="#ffffff"/>
<line x1="1088" y1="230.5" x2="1088" y2="684.5" stroke="#2e2e2e" stroke-width="1"/>
<line x1="427.5" y1="684.3" x2="1088" y2="684.3" stroke="#2e2e2e" stroke-width="1"/>
<path d="M489.8 391.3 L492.1 389.3 L493.8 387.7 L495.2 386.0 L497.0 384.0 L499.0 381.6 L501.3 380.6 L502.8 378.0 L505.4 377.2 L507.2 374.9 L509.6 372.8 L511.4 371.4 L512.4 369.6 L514.6 368.7 L516.3 366.8 L518.8 364.9 L520.6 362.8 L522.0 361.3 L524.6 359.9 L526.1 358.5 L528.2 356.5 L530.9 355.5 L532.5 354.0 L535.0 353.0 L537.5 350.8 L540.0 349.2 L541.6 348.6 L543.8 347.5 L546.1 346.8 L549.5 345.9 L552.2 344.7 L554.4 344.2 L556.8 343.2 L559.8 342.5 L562.0 340.9 L564.2 339.6 L567.5 338.6 L570.4 336.4 L572.4 335.2 L574.4 333.3 L577.1 331.2 L579.5 330.3 L581.2 327.5 L583.2 326.0 L584.5 323.2 L585.6 321.0 L586.5 318.2 L586.4 314.9 L589.0 313.8 L592.2 311.2 L593.8 309.7 L596.4 308.3 L600.1 308.0 L602.7 308.2 L604.4 305.9 L606.3 303.5 L607.1 300.9 L608.5 297.8 L612.2 295.3 L614.2 297.0 L615.7 298.2 L616.6 295.2 L617.8 291.2 L620.5 289.6 L623.1 287.8 L624.9 289.0 L627.3 290.4 L629.4 292.1 L632.6 292.1 L634.7 293.2 L637.3 293.7 L640.4 295.6 L642.6 295.6 L644.8 295.8 L647.8 296.7 L651.0 297.2 L652.7 298.8 L656.0 298.1 L658.7 298.1 L661.4 299.4 L664.5 299.3 L666.4 299.0 L668.8 299.7 L671.7 299.9 L674.0 299.5 L677.1 300.6 L678.5 303.1 L679.8 305.8 L680.5 308.3 L681.3 310.7 L681.5 313.9 L682.4 317.3 L683.8 319.9 L685.2 322.9 L686.5 324.5 L687.0 326.7 L688.3 329.0 L690.1 332.2 L692.4 333.2 L694.2 335.1 L695.5 336.4 L698.5 338.0 L700.3 339.2 L702.5 339.7 L705.6 340.0 L709.3 339.7 L711.6 340.5 L714.5 339.4 L716.3 339.3 L719.7 339.9 L721.3 339.8 L724.8 339.4 L723.6 342.2 L722.9 344.4 L722.2 348.5 L720.0 352.2 L721.6 354.3 L723.7 355.8 L724.7 358.1 L726.4 360.9 L728.1 363.2 L729.6 366.3 L731.5 368.2 L731.2 371.3 L730.4 373.8 L729.8 375.8 L729.2 377.7 L729.5 381.3 L729.4 385.4 L732.4 386.1 L735.8 387.3 L738.1 388.3 L738.9 391.3 L738.9 393.7 L739.6 396.1 L740.7 399.0 L738.8 402.0 L737.6 404.2 L735.6 407.0 L733.8 409.8 L730.8 409.1 L728.0 409.1 L725.3 408.5 L722.7 407.2 L719.4 407.5 L719.7 403.9 L718.8 401.6 L718.8 398.7 L718.8 396.6 L716.5 396.9 L712.7 396.7 L710.2 396.0 L707.8 397.6 L704.4 398.3 L702.0 398.4 L700.1 399.5 L696.5 399.7 L694.3 400.2 L691.3 400.4 L689.2 400.3 L686.4 401.1 L683.1 401.2 L681.1 401.7 L677.9 403.6 L676.1 404.9 L672.7 405.4 L670.0 407.3 L667.7 407.9 L665.2 408.5 L663.0 407.4 L659.6 407.8 L657.4 407.2 L654.2 406.5 L652.3 406.9 L648.9 407.5 L647.0 407.4 L643.7 407.4 L641.7 405.4 L640.2 402.7 L638.4 401.3 L636.0 398.4 L634.3 396.5 L631.8 394.4 L629.8 392.4 L628.1 390.6 L626.3 389.5 L623.7 388.4 L621.2 387.2 L618.7 386.2 L617.0 385.9 L614.2 387.2 L613.0 388.3 L610.8 390.1 L608.3 392.1 L608.9 389.2 L609.9 387.3 L610.2 384.6 L611.3 381.9 L611.6 379.0 L613.0 376.4 L614.8 374.8 L616.9 371.8 L618.5 370.2 L621.2 367.7 L623.5 366.1 L626.4 365.4 L629.2 364.3 L632.2 363.9 L633.1 361.8 L629.1 362.3 L626.1 361.5 L622.7 361.6 L620.5 362.8 L617.4 363.9 L614.4 364.7 L612.4 366.6 L610.3 367.8 L608.5 369.7 L606.8 371.7 L605.0 373.5 L603.0 375.5 L600.6 376.5 L599.3 377.9 L597.0 380.2 L593.7 382.1 L592.2 383.5 L589.5 385.4 L586.3 386.7 L584.0 387.8 L581.7 388.4 L578.8 389.2 L576.2 389.6 L573.0 389.4 L570.4 391.1 L567.8 392.9 L565.9 393.9 L563.5 395.2 L560.8 395.5 L558.7 397.4 L555.8 398.2 L553.5 398.7 L551.1 398.7 L547.8 398.5 L546.1 398.2 L543.6 398.9 L540.0 399.0 L536.7 400.2 L533.7 398.6 L530.2 396.5 L530.2 394.0 L531.6 391.3 L532.1 388.2 L532.1 385.8 L533.5 383.5 L530.2 382.2 L526.7 381.7 L524.0 382.6 L521.8 384.0 L519.2 386.2 L515.4 386.9 L513.7 388.9 L510.6 389.0 L507.6 390.8 L505.0 391.4 L502.2 392.3 L500.5 392.9 L497.9 392.9 L495.5 392.7 L492.2 392.6Z" fill="#000005" stroke="#000005" stroke-width="0.8" stroke-linejoin="round"/>
<path d="M586.5 341.5 L596.0 334.5 L607.0 329.0 L607.5 330.8 L597.0 337.2 L587.5 343.0Z" fill="#ffffff" stroke="#ffffff" stroke-width="0.8" stroke-linejoin="round"/>
<ellipse cx="695" cy="348.3" rx="5" ry="2.2" fill="#ffffff"/>
<path d="M595.0 256.1 L596.1 257.0 L598.9 256.6 L600.4 256.7 L602.7 257.6 L604.4 257.5 L608.3 256.3 L610.8 257.4 L612.9 256.6 L614.1 256.8 L617.3 257.2 L618.3 256.9 L620.3 256.2 L622.1 257.6 L624.6 257.8 L623.9 258.6 L623.7 260.4 L622.8 263.8 L623.4 265.6 L622.6 267.7 L622.8 269.1 L620.4 267.5 L618.4 267.6 L616.5 267.3 L614.6 268.2 L614.8 270.3 L612.9 272.7 L611.3 271.8 L611.2 269.2 L609.3 267.6 L607.1 269.3 L604.4 270.4 L603.0 269.2 L602.0 265.5 L600.7 267.4 L597.9 266.4 L596.4 263.8 L595.7 261.3 L595.0 259.1Z" fill="#000005" stroke="#000005" stroke-width="0.8" stroke-linejoin="round"/>
<path d="M619.3 496.3 L620.5 493.1 L621.0 490.6 L622.0 487.7 L622.5 485.0 L624.6 482.2 L625.0 480.2 L627.1 477.4 L628.1 475.3 L629.9 473.3 L632.2 471.6 L633.8 468.3 L634.4 467.0 L636.9 464.3 L638.0 461.3 L639.2 460.1 L641.1 457.6 L642.7 454.5 L643.1 452.0 L645.0 450.2 L646.9 448.0 L647.9 445.9 L649.1 443.4 L650.0 441.5 L651.6 439.4 L653.5 436.5 L653.7 439.7 L655.2 443.5 L653.5 445.5 L653.0 448.8 L651.9 451.0 L651.1 453.4 L649.8 456.7 L649.2 459.5 L647.8 462.0 L645.7 464.4 L645.2 467.6 L643.1 469.4 L641.6 472.7 L639.9 474.7 L638.6 478.0 L636.4 479.4 L634.8 481.9 L633.6 483.6 L632.0 486.3 L630.0 487.6 L628.9 489.8 L627.0 491.8 L624.7 494.5 L623.1 496.8 L621.7 497.9Z" fill="#000005" stroke="#000005" stroke-width="0.8" stroke-linejoin="round"/>
<path d="M653.0 436.6 L656.8 437.3 L659.6 436.9 L663.7 436.2 L667.6 434.1 L671.9 433.8 L677.1 433.7 L680.3 433.6 L683.8 432.7 L686.4 433.1 L690.2 432.0 L693.5 431.1 L696.5 429.8 L699.6 428.3 L703.1 427.4 L707.1 427.5 L710.5 428.1 L713.2 429.1 L717.0 429.1 L718.7 431.7 L721.6 434.6 L723.9 436.6 L727.1 438.7 L723.3 441.4 L720.3 442.6 L716.2 444.6 L716.6 448.1 L715.8 452.1 L714.8 454.8 L720.5 458.4 L716.4 460.2 L713.1 461.4 L709.5 463.6 L708.2 466.2 L706.0 468.4 L703.0 471.7 L702.1 476.3 L699.9 479.8 L696.6 480.0 L693.7 479.7 L690.3 481.9 L687.0 483.6 L683.4 484.8 L681.5 487.6 L680.2 490.1 L678.0 493.6 L677.5 496.2 L676.8 500.0 L676.5 503.8 L676.2 507.1 L674.8 509.6 L673.7 513.3 L673.5 516.6 L671.9 520.0 L671.2 523.5 L670.2 527.0 L669.7 529.9 L669.5 533.6 L668.8 537.3 L668.5 540.7 L668.9 543.8 L669.7 547.6 L671.0 550.1 L671.7 553.8 L672.6 556.1 L673.8 559.7 L674.5 562.2 L674.5 566.0 L675.3 569.1 L675.0 571.6 L675.6 574.5 L677.0 578.0 L677.4 580.9 L676.9 584.1 L675.8 587.6 L675.9 590.0 L675.1 593.7 L674.2 596.6 L673.6 599.6 L673.3 603.1 L671.9 605.6 L669.4 608.6 L668.3 611.4 L666.1 614.3 L664.8 617.5 L661.9 619.3 L660.0 621.9 L658.1 623.6 L655.4 626.4 L653.5 628.2 L649.8 629.3 L646.1 629.4 L642.5 629.7 L639.4 630.7 L636.7 627.4 L634.9 624.8 L632.0 623.0 L630.3 620.4 L628.1 617.9 L627.5 614.1 L626.5 611.4 L626.5 608.6 L625.3 605.2 L625.0 602.0 L624.2 598.7 L623.9 596.2 L623.2 592.6 L623.7 589.9 L622.8 585.9 L623.2 583.6 L622.5 579.5 L622.7 576.6 L622.4 573.7 L622.0 570.1 L622.3 566.9 L622.3 564.4 L623.1 560.6 L622.9 557.6 L623.5 554.4 L623.5 551.1 L624.5 548.6 L624.1 545.1 L625.5 541.4 L626.3 538.3 L626.7 535.6 L627.4 532.2 L627.9 529.3 L628.6 526.2 L629.3 522.8 L629.5 519.8 L630.7 516.3 L631.6 513.8 L632.0 510.1 L632.7 507.0 L633.0 504.2 L633.6 501.1 L634.7 497.6 L635.5 494.6 L637.0 492.4 L638.2 488.7 L639.6 486.1 L641.5 482.9 L642.9 480.5 L644.2 477.0 L645.2 473.8 L647.0 470.5 L649.1 466.3 L650.6 463.8 L651.6 459.9 L653.4 456.0 L654.7 452.4 L655.8 448.6 L655.0 446.3 L654.1 442.6 L653.9 439.6Z" fill="#000005" stroke="#000005" stroke-width="0.8" stroke-linejoin="round"/>
<path d="M727.8 431.4 L731.3 432.7 L735.1 433.2 L738.0 433.6 L741.8 433.3 L746.2 433.2 L750.4 433.4 L753.4 434.4 L756.3 435.2 L760.1 435.2 L763.7 435.8 L767.2 436.8 L769.9 437.6 L773.3 437.7 L776.9 438.2 L780.3 439.1 L783.4 440.5 L786.7 441.2 L789.8 441.5 L792.9 442.6 L796.8 443.9 L800.0 445.4 L803.0 446.1 L806.8 447.2 L809.5 448.9 L813.0 450.2 L816.4 451.8 L819.6 453.1 L822.4 455.0 L824.6 457.1 L826.8 458.8 L828.7 461.8 L831.6 464.5 L833.2 466.5 L834.1 469.7 L835.9 472.4 L837.2 475.3 L838.7 478.5 L838.9 481.6 L839.5 484.2 L840.8 486.8 L841.3 490.3 L840.4 494.2 L840.4 497.9 L837.2 500.9 L835.0 503.4 L834.2 506.3 L832.6 509.8 L831.2 513.7 L830.3 516.9 L827.8 520.3 L828.0 523.3 L827.5 526.6 L826.4 529.6 L826.7 533.4 L827.1 538.0 L827.7 542.0 L828.1 545.6 L828.4 549.9 L826.9 552.8 L824.7 555.7 L823.8 558.0 L820.9 560.6 L817.5 563.6 L815.2 567.1 L811.9 567.6 L808.7 568.7 L804.7 570.4 L804.3 567.3 L803.5 564.6 L802.5 561.6 L801.9 558.7 L801.0 555.5 L800.4 552.1 L799.4 549.4 L798.6 546.7 L797.9 542.8 L797.1 540.4 L796.5 536.3 L795.4 532.9 L795.2 530.1 L793.5 527.5 L791.2 524.6 L789.9 522.0 L787.0 522.9 L782.9 523.7 L780.9 526.0 L777.4 527.5 L774.6 529.5 L773.1 533.1 L770.7 535.9 L768.4 538.1 L764.6 540.4 L762.0 543.0 L758.7 541.0 L755.6 538.7 L753.1 536.9 L754.0 532.3 L755.5 528.3 L758.7 525.9 L761.2 523.2 L763.3 520.3 L764.8 516.9 L767.5 513.9 L770.4 511.3 L771.4 508.6 L771.7 505.8 L773.6 503.8 L773.7 499.1 L775.0 495.3 L773.8 490.8 L773.1 487.0 L772.3 482.9 L771.5 478.0 L775.2 476.7 L773.8 473.5 L772.9 470.3 L771.0 466.9 L768.4 463.2 L765.4 461.0 L763.2 458.5 L760.4 456.2 L757.2 454.8 L755.4 453.4 L752.4 452.1 L749.7 450.0 L747.3 448.0 L744.7 445.7 L741.5 443.1 L738.0 442.0 L735.2 440.2 L731.4 438.2 L730.3 435.1Z" fill="#000005" stroke="#000005" stroke-width="0.8" stroke-linejoin="round"/>
<path d="M827.7 431.6 L831.5 431.4 L833.0 431.7 L836.4 432.7 L838.1 431.7 L840.8 432.1 L843.8 432.0 L846.1 432.2 L849.7 433.2 L850.9 433.7 L853.5 433.0 L857.5 433.8 L858.7 435.7 L859.5 438.5 L861.0 440.3 L863.1 442.6 L864.8 445.9 L867.0 447.5 L868.5 449.5 L869.4 451.9 L871.5 454.0 L874.0 455.5 L875.1 457.9 L876.5 459.0 L878.7 462.0 L880.4 463.6 L881.9 465.8 L883.0 467.7 L883.9 470.2 L884.9 472.1 L887.4 474.8 L888.5 476.3 L889.4 479.1 L891.0 481.6 L892.3 484.9 L892.8 486.9 L891.2 487.3 L888.3 489.1 L885.1 489.2 L882.8 490.5 L883.6 492.5 L881.9 495.1 L882.2 497.8 L881.7 500.2 L879.4 499.5 L876.0 499.6 L872.8 498.6 L870.6 497.5 L867.7 496.6 L865.6 493.8 L862.9 493.1 L859.8 491.5 L857.6 490.3 L854.8 487.9 L852.5 486.6 L851.6 484.2 L848.3 482.6 L846.5 479.5 L844.4 477.9 L843.8 475.2 L841.6 472.6 L839.6 470.7 L838.1 466.9 L837.2 463.8 L833.3 462.3 L830.1 461.4 L828.8 458.5 L827.1 455.1 L826.6 452.1 L826.9 448.9 L826.5 446.7 L827.1 442.9 L827.4 440.4 L827.8 437.7 L828.4 434.4Z" fill="#000005" stroke="#000005" stroke-width="0.8" stroke-linejoin="round"/>
<path d="M745.7 414.6 L746.6 415.5 L750.3 416.5 L751.4 417.5 L754.2 416.3 L755.2 417.9 L758.2 416.9 L759.4 416.8 L761.8 418.3 L764.2 417.7 L767.2 419.2 L768.3 419.8 L771.2 420.1 L773.5 420.7 L775.9 421.0 L777.1 421.1 L779.7 421.5 L781.7 422.0 L784.0 421.4 L785.7 421.5 L788.2 421.7 L790.3 422.1 L792.5 423.0 L794.7 423.9 L796.0 424.2 L798.9 424.0 L801.4 424.8 L803.1 424.4 L806.2 424.2 L807.9 425.4 L809.1 425.7 L812.3 426.5 L813.8 426.7 L816.1 426.1 L818.8 425.6 L820.6 426.7 L822.0 427.2 L824.1 426.8 L826.4 427.4 L828.0 427.0 L830.4 427.4 L830.7 429.4 L830.5 432.0 L829.7 434.2 L829.4 437.8 L827.6 437.4 L825.0 436.6 L822.9 436.9 L821.4 437.2 L818.4 437.0 L817.7 436.6 L814.3 436.2 L812.1 435.6 L811.4 436.0 L808.8 435.9 L807.1 435.3 L804.5 434.9 L802.5 434.5 L800.3 433.5 L798.3 433.8 L796.4 433.0 L793.5 432.8 L792.4 434.0 L790.2 433.0 L788.5 433.5 L785.9 432.4 L783.3 432.4 L781.2 432.2 L779.5 432.8 L776.4 432.0 L774.1 431.1 L773.2 431.6 L771.3 431.0 L767.7 430.5 L766.5 431.0 L765.0 429.8 L762.0 428.8 L760.2 428.5 L757.1 427.7 L754.5 428.3 L752.4 428.2 L751.1 426.5 L749.9 423.5 L749.6 422.2 L748.4 420.5 L746.3 419.1 L746.3 416.9Z" fill="#000005" stroke="#000005" stroke-width="0.8" stroke-linejoin="round"/>
<path d="M870.3 415.4 L872.2 415.7 L873.9 415.4 L875.7 414.9 L878.3 412.9 L879.3 413.2 L882.6 412.4 L884.1 413.3 L886.0 413.5 L888.6 412.4 L890.6 413.1 L892.9 413.2 L894.5 414.4 L896.8 415.2 L899.2 415.9 L900.8 417.4 L900.0 419.1 L897.8 420.0 L895.4 422.7 L894.3 422.3 L891.8 421.7 L890.7 421.9 L888.1 420.9 L885.9 421.5 L883.8 421.8 L882.1 422.6 L880.4 422.2 L877.3 422.7 L875.9 422.5 L874.4 422.2 L871.4 421.5 L871.4 419.0Z" fill="#000005" stroke="#000005" stroke-width="0.8" stroke-linejoin="round"/>
<path d="M898.1 496.7 L900.8 496.7 L902.9 496.2 L904.8 494.5 L907.1 496.7 L908.6 498.0 L911.5 498.7 L910.9 501.2 L910.5 502.6 L910.0 505.3 L910.3 507.0 L907.5 508.4 L906.3 508.7 L904.1 510.5 L902.8 508.4 L900.6 506.8 L898.6 504.6 L898.4 503.2 L898.3 501.1 L898.1 499.0Z" fill="#000005" stroke="#000005" stroke-width="0.8" stroke-linejoin="round"/>
<path d="M602.7 512.6 L605.9 512.9 L607.7 513.1 L608.4 515.0 L608.3 517.4 L608.4 519.4 L608.1 522.4 L608.2 524.2 L607.3 526.3 L606.8 528.7 L606.4 531.2 L604.8 529.4 L602.8 526.6 L602.5 524.7 L602.2 522.6 L602.3 521.3 L602.0 519.4 L602.7 516.7 L602.7 514.9Z" fill="#000005" stroke="#000005" stroke-width="0.8" stroke-linejoin="round"/>
<path d="M589.7 514.4 L592.1 513.7 L594.8 513.7 L597.1 512.9 L598.0 514.7 L599.4 517.4 L596.4 516.6 L594.1 516.9 L592.3 517.3Z" fill="#000005" stroke="#000005" stroke-width="0.8" stroke-linejoin="round"/>
<path d="M791.8 586.5 L794.0 586.8 L796.0 586.7 L797.6 585.4 L798.8 588.3 L799.2 589.8 L801.1 590.9 L802.6 591.2 L804.8 591.6 L805.0 593.7 L804.7 595.6 L805.2 597.5 L805.2 599.7 L802.5 600.9 L800.7 601.4 L799.4 601.9 L796.6 601.9 L794.6 601.8 L793.3 600.8 L791.0 599.8 L791.4 597.8 L791.3 595.3 L791.0 593.1 L791.5 591.4 L791.1 589.5Z" fill="#000005" stroke="#000005" stroke-width="0.8" stroke-linejoin="round"/>
<path d="M769.8 628.2 L771.3 624.8 L773.6 621.5 L775.9 620.4 L779.0 619.6 L781.7 618.4 L784.6 617.1 L788.5 616.1 L791.7 615.8 L794.8 615.4 L798.2 615.8 L802.2 615.4 L803.8 612.3 L807.1 609.6 L809.8 608.1 L813.0 606.2 L815.7 604.8 L817.9 602.8 L821.6 601.7 L823.8 599.9 L827.5 598.1 L830.1 596.3 L832.2 594.9 L835.2 592.2 L837.1 590.0 L840.1 588.3 L843.1 587.2 L846.8 586.9 L850.3 585.9 L853.0 584.6 L856.9 585.3 L860.2 585.4 L863.7 586.1 L867.0 587.1 L869.2 584.5 L872.1 583.3 L874.6 581.4 L876.4 580.3 L879.9 578.8 L883.2 578.4 L886.2 577.5 L889.9 576.7 L892.9 576.3 L897.0 575.8 L899.8 575.0 L903.2 574.5 L906.2 574.3 L910.5 573.7 L913.4 573.6 L916.7 572.8 L920.9 574.3 L923.9 575.4 L924.0 577.3 L921.2 578.7 L919.4 580.9 L916.2 583.4 L914.5 585.6 L912.4 587.4 L910.4 590.2 L906.8 591.9 L904.5 594.5 L901.5 596.3 L898.8 598.5 L896.2 601.5 L892.9 603.4 L891.0 604.6 L888.6 607.1 L885.7 608.2 L883.6 610.0 L880.7 612.1 L878.6 613.2 L875.5 614.9 L873.2 617.2 L870.3 618.8 L866.9 620.4 L862.9 621.7 L860.4 623.8 L856.4 625.0 L853.4 626.6 L850.0 627.9 L846.6 630.0 L842.8 631.3 L840.4 633.6 L837.1 635.2 L833.6 637.1 L830.4 636.8 L826.8 637.5 L823.5 638.1 L820.0 639.6 L816.8 639.7 L813.3 640.7 L810.4 641.4 L806.4 642.6 L802.9 643.4 L800.4 642.2 L796.4 641.1 L793.3 639.6 L788.8 638.8 L784.8 638.2 L782.0 636.4 L779.1 635.0 L777.0 633.4 L773.4 631.0Z" fill="#000005" stroke="#000005" stroke-width="0.8" stroke-linejoin="round"/>
<path d="M889.7 556.0 L892.2 552.8 L894.6 549.7 L896.5 546.4 L898.6 543.9 L901.0 541.2 L902.8 538.2 L907.0 535.8 L910.0 533.9 L913.1 532.2 L916.4 530.9 L919.7 529.2 L923.7 528.5 L926.3 527.4 L930.0 526.9 L933.0 525.6 L937.1 525.3 L939.7 524.0 L943.2 523.5 L946.8 522.8 L950.3 521.7 L953.5 521.0 L957.5 520.2 L961.4 519.9 L965.4 518.8 L968.7 520.6 L971.9 523.2 L975.0 525.5 L979.2 524.1 L983.6 523.7 L985.1 519.9 L986.7 516.7 L990.2 514.8 L993.2 513.4 L996.6 511.5 L1000.3 510.3 L1003.3 511.6 L1006.4 513.1 L1009.6 515.1 L1009.2 518.7 L1008.7 523.1 L1009.2 527.0 L1009.9 529.7 L1009.9 533.7 L1007.0 536.2 L1005.1 540.0 L1002.7 542.5 L999.5 545.0 L996.7 546.7 L993.6 548.3 L989.9 550.1 L986.6 552.1 L983.5 552.3 L979.6 552.6 L976.6 553.4 L973.4 554.2 L970.5 554.4 L966.6 555.1 L963.8 553.2 L960.0 552.0 L956.3 551.1 L953.8 551.2 L950.0 550.0 L947.1 550.2 L943.7 550.7 L940.4 550.3 L936.3 550.4 L933.3 550.8 L929.7 551.5 L926.8 553.0 L923.2 554.4 L920.1 554.5 L916.6 556.4 L913.1 557.4 L909.5 558.1 L907.0 558.4 L903.5 558.0 L900.0 558.4 L896.4 557.6 L893.4 557.1Z" fill="#000005" stroke="#000005" stroke-width="0.8" stroke-linejoin="round"/>
<path d="M1013.0 552.5 L1020.0 551.8 L1026.0 553.5 L1020.0 555.2Z" fill="#000005" stroke="#000005" stroke-width="0.8" stroke-linejoin="round"/>
<path d="M482.3 494.5 L494.6 506.8 L506.9 517.6 L513.0 534.5 L516.1 556.0 L520.7 574.5 L530.0 582.2 L537.6 596.0 L545.3 608.3 L543.8 620.6 L536.1 629.8 L522.3 634.4 L514.6 639.0 L513.0 648.3 L517.7 654.4 L513.0 660.6" fill="none" stroke="#14144a" stroke-width="1.1" stroke-linejoin="round" stroke-linecap="round" opacity="1"/>
<path d="M557.6 483.8 L565.3 488.4 L566.8 497.6 L559.2 503.8 L554.5 513.0 L553.0 523.7" fill="none" stroke="#14144a" stroke-width="0.9" stroke-linejoin="round" stroke-linecap="round" opacity="1"/>
<path d="M526.9 557.6 L537.6 554.5 L549.9 557.6 L562.2 553.0 L569.9 543.7 L562.2 539.1" fill="none" stroke="#2a2a6a" stroke-width="0.7" stroke-linejoin="round" stroke-linecap="round" opacity="1"/>
<path d="M580.7 602.0 L571.5 611.4 L559.2 619.0 L543.8 628.3" fill="none" stroke="#0a0a3a" stroke-width="0.8" stroke-linejoin="round" stroke-linecap="round" opacity="0.8"/>
<path d="M622.2 623.7 L614.5 632.9 L608.4 642.0 L611.4 646.7" fill="none" stroke="#0a0a3a" stroke-width="0.8" stroke-linejoin="round" stroke-linecap="round" opacity="1"/>
<path d="M620.7 654.4 L629.0 651.8 L637.6 651.3" fill="none" stroke="#0a0a3a" stroke-width="0.8" stroke-linejoin="round" stroke-linecap="round" opacity="0.8"/>
<path d="M805.0 570.0 L804.0 578.0 L802.5 586.0" fill="none" stroke="#0a0a3a" stroke-width="1.1" stroke-linejoin="round" stroke-linecap="round" opacity="1"/>
<path d="M792.0 600.0 L783.0 606.0 L780.0 616.0 L778.0 624.0" fill="none" stroke="#0a0a3a" stroke-width="1.1" stroke-linejoin="round" stroke-linecap="round" opacity="1"/>
<path d="M975.0 571.0 L973.0 579.0" fill="none" stroke="#0a0a3a" stroke-width="1.3" stroke-linejoin="round" stroke-linecap="round" opacity="1"/>
<path d="M986.0 570.0 L989.0 588.0" fill="none" stroke="#0a0a3a" stroke-width="1.3" stroke-linejoin="round" stroke-linecap="round" opacity="1"/>
<path d="M994.0 568.0 L1001.0 587.0" fill="none" stroke="#0a0a3a" stroke-width="1.3" stroke-linejoin="round" stroke-linecap="round" opacity="1"/>
<path d="M1000.0 567.0 L1003.0 572.0" fill="none" stroke="#0a0a3a" stroke-width="1.3" stroke-linejoin="round" stroke-linecap="round" opacity="1"/>
<path d="M1005.0 567.0 L1009.0 573.0" fill="none" stroke="#0a0a3a" stroke-width="1.3" stroke-linejoin="round" stroke-linecap="round" opacity="1"/>
<path d="M981.0 582.0 L979.0 590.0" fill="none" stroke="#0a0a3a" stroke-width="1.3" stroke-linejoin="round" stroke-linecap="round" opacity="1"/>
<path d="M961.0 574.0 L961.0 577.0" fill="none" stroke="#0a0a3a" stroke-width="1.3" stroke-linejoin="round" stroke-linecap="round" opacity="1"/>
<path d="M965.1 513.8 L966.4 512.5 L969.9 511.5 L970.7 510.8 L973.7 511.3 L976.1 510.4 L977.1 508.0 L980.5 508.1 L982.4 507.5 L983.3 506.8 L985.2 507.5 L988.2 505.8 L989.9 505.3 L991.3 505.7 L994.5 505.3 L996.4 504.0 L998.2 502.3 L1001.7 503.3 L1002.6 502.8 L1005.6 500.8 L1007.2 501.3 L1009.0 500.5 L1010.5 498.6 L1013.4 497.4 L1014.4 497.8 L1016.6 496.6 L1017.9 494.3 L1019.9 493.4 L1022.9 492.6 L1025.1 494.2 L1023.3 496.2 L1021.2 496.9 L1018.8 499.9 L1017.5 500.1 L1015.4 501.6 L1013.6 501.9 L1012.7 503.3 L1009.8 504.9 L1007.9 504.9 L1007.5 505.4 L1004.9 507.7 L1003.4 507.1 L1000.3 509.0 L998.2 510.3 L995.6 511.1 L994.0 510.5 L991.9 510.8 L990.4 511.7 L988.8 512.9 L985.7 512.8 L984.2 513.3 L982.7 513.7 L980.0 515.0 L977.5 515.9 L975.8 516.1 L974.1 515.8 L971.8 515.8 L969.4 517.7 L967.1 515.8Z" fill="#000005" stroke="#000005" stroke-width="0.8" stroke-linejoin="round"/>
<path d="M1003.0 610.0 L1006.0 620.0 L1015.0 628.0 L1024.0 636.0 L1019.0 647.0 L1005.0 655.0 L990.0 657.0 L975.0 656.0 L962.0 660.0" fill="none" stroke="#0a0a3a" stroke-width="0.7" stroke-linejoin="round" stroke-linecap="round" opacity="0.7"/>
<path d="M918.0 610.0 L923.0 618.0 L924.0 622.0" fill="none" stroke="#0a0a3a" stroke-width="1" stroke-linejoin="round" stroke-linecap="round" opacity="1"/>
<path d="M904.0 601.0 L908.0 606.0" fill="none" stroke="#0a0a3a" stroke-width="1" stroke-linejoin="round" stroke-linecap="round" opacity="1"/>
<path d="M869.0 631.0 L870.0 636.0" fill="none" stroke="#0a0a3a" stroke-width="1" stroke-linejoin="round" stroke-linecap="round" opacity="1"/>
<path d="M513.7 286.0l-1.4 1.8M500.0 284.2l1.0 0.1M520.2 303.9l-1.9 1.3M527.1 294.9l0.4 3.2M549.0 286.5l-0.6 2.5M550.6 301.7l-2.9 0.7M540.5 290.5l-0.5 1.3M541.8 285.3l-2.1 1.3M502.7 313.2l-0.9 1.6M512.8 322.2l3.1 0.1M507.0 324.1l-0.2 1.3M564.3 280.8l2.5 1.8M553.7 276.8l1.2 0.0M558.8 302.4l-1.6 2.7M523.9 260.9l-0.8 1.6M488.0 259.8l-0.1 3.3M535.2 346.6l0.9 1.3M496.8 286.7l1.4 0.4M556.2 263.5l-1.4 2.2M587.2 275.2l-1.5 0.9M649.7 290.2l-0.2 1.7M743.8 293.6l-1.7 1.8M749.5 281.1l-1.1 0.9M737.6 295.7l2.3 0.7M737.9 292.2l-2.4 0.6M695.4 269.2l-1.2 1.1M756.8 309.3l0.5 1.1M789.0 335.9l-2.9 1.2M756.7 305.5l-1.5 2.5M790.6 287.6l-2.4 1.2M785.2 280.2l-1.3 0.7M985.6 352.6l-0.9 2.0M994.8 350.7l-1.7 1.9M986.5 360.9l-0.2 1.8M1029.2 311.0l1.9 0.1M1035.5 300.6l-0.9 0.5M1031.6 303.7l-2.0 2.9M1023.9 310.9l2.2 2.6M1031.6 317.7l-2.9 1.4M1030.8 307.2l-1.2 2.2M1032.3 305.4l-1.3 2.7M1036.3 307.0l-0.2 1.7M1032.3 317.0l-1.7 0.9M1027.8 310.9l-1.1 0.9M1015.8 391.1l-0.8 2.1M1027.4 390.9l-2.0 0.0M954.8 328.2l-1.0 0.7M962.0 350.0l2.7 2.3M998.9 324.0l2.5 2.5M1017.2 323.9l-0.3 1.0M925.2 374.2l-0.8 2.9M973.2 383.2l-1.4 1.9M994.5 421.2l0.5 1.3M992.4 428.4l-0.8 1.2M1011.3 353.6l-0.7 2.3M1025.1 343.4l0.4 1.6M1027.0 359.5l0.6 3.1M1032.9 335.9l-0.1 1.2M1020.6 347.7l-2.0 0.5M961.7 296.9l1.1 1.8M993.5 261.1l-1.9 1.3M888.0 296.4l-0.7 1.0M887.8 296.2l0.8 1.8M964.0 323.6l-0.9 1.5M925.6 419.6l-1.3 1.3M964.6 344.6l-1.9 2.0M982.0 436.4l0.4 2.3M926.5 450.8l0.8 2.0M880.8 402.0l3.0 1.9M875.0 375.8l-1.1 3.2M939.6 486.0l-0.6 1.1M960.1 507.4l2.5 1.0M977.6 488.0l-2.3 1.7M993.7 472.0l0.5 2.9M785.1 429.9l-0.6 0.9M804.4 415.7l-1.4 2.6M785.2 426.8l2.8 1.8M767.8 417.9l-2.5 1.3M765.7 422.2l-2.3 0.6M746.2 401.7l-1.5 3.3M730.4 500.1l-2.6 2.0M680.4 494.8l-0.0 1.3M708.0 457.5l-1.4 0.9" fill="none" stroke="#0b0b3c" stroke-width="0.8" stroke-linecap="round"/>
<path d="M509.5 279.3l-0.8 3.3M514.3 287.5l1.1 2.0M518.0 296.5l-1.4 0.8M545.7 282.5l-1.3 1.6M546.2 288.4l-0.3 2.4M534.5 319.0l-2.5 1.6M535.5 307.2l-2.4 1.3M561.8 292.3l-0.0 1.2M493.7 272.6l-1.6 2.3M504.4 275.7l-1.9 1.8M548.5 322.0l2.7 0.3M653.3 282.7l-1.0 1.2M764.8 330.1l-0.7 2.4M809.1 337.1l-0.7 1.1M759.1 364.0l-1.8 1.4M961.1 354.8l-1.2 1.8M977.7 359.0l0.2 3.3M979.6 347.7l-2.4 2.0M983.0 342.1l1.1 1.3M982.5 349.8l-1.0 0.3M984.7 359.4l0.7 3.2M995.7 356.9l-1.4 1.1M975.7 343.3l-1.2 0.2M975.7 351.1l-1.9 2.5M1023.8 376.1l-0.3 1.0M1015.2 384.2l-0.1 1.0M1017.2 378.2l1.9 0.7M924.4 323.3l-1.0 1.0M937.7 332.1l-0.8 1.4M938.2 325.8l-1.9 1.5M997.2 345.1l1.3 0.3M994.0 341.2l-0.1 2.7M954.3 396.4l-1.0 1.8M954.7 385.0l-1.7 1.5M982.6 430.2l-2.4 0.0M990.0 427.8l-1.4 1.5M978.1 424.2l1.9 0.2M1021.7 362.3l-0.4 1.2M1033.4 324.9l-0.3 1.9M955.6 283.4l0.3 3.1M953.3 289.6l-2.7 0.5M950.1 278.0l-0.6 2.4M1035.2 264.7l2.3 1.9M989.2 257.7l-1.4 2.8M932.2 455.3l-1.5 1.5M1034.5 462.4l3.2 0.8M937.1 463.8l0.7 3.3M923.5 283.1l-1.9 1.9M962.8 346.8l2.1 2.5M896.2 374.7l-0.7 2.9M900.2 490.1l1.0 3.1M911.9 483.3l-1.3 2.7M927.0 493.6l-0.9 2.2M975.1 496.2l1.1 0.4M955.3 493.5l-2.3 0.7M744.0 386.3l-0.8 3.2M549.6 465.0l0.5 1.3M723.6 459.7l-1.0 2.4M675.4 501.0l0.5 2.7M682.7 497.7l-0.6 2.9M681.5 496.6l-1.2 2.8M684.0 496.0l-2.2 1.0M714.0 460.8l1.1 0.1" fill="none" stroke="#23236a" stroke-width="1.0" stroke-linecap="round"/>
<path d="M503.3 283.3l2.7 0.2M517.0 286.8l-2.9 0.2M525.7 302.0l0.9 2.6M536.0 285.3l-1.9 1.3M537.9 297.1l-1.5 1.6M539.9 322.3l-1.4 3.3M528.0 314.4l-0.6 1.7M555.5 276.3l0.5 1.4M548.6 274.5l1.0 2.8M562.7 332.3l-1.3 0.3M487.3 315.9l-1.0 2.5M740.7 292.1l-1.4 0.8M790.9 295.3l0.4 2.4M855.0 265.8l-1.8 1.1M763.8 276.9l-1.2 1.4M884.2 267.9l2.1 0.7M814.4 274.6l-2.3 1.6M795.9 343.9l-2.0 1.2M777.3 356.0l1.8 0.6M786.5 352.2l1.0 1.2M757.8 384.6l-1.9 2.2M768.6 370.0l-0.8 3.5M977.9 350.7l-0.8 0.7M972.3 370.4l-2.6 1.1M988.4 358.2l-0.6 1.4M1031.4 300.6l-2.4 0.5M1035.2 302.4l-1.5 3.1M1022.9 384.0l-0.9 2.1M954.1 336.1l-1.7 2.6M944.6 324.4l-1.3 3.1M994.9 323.8l-3.6 0.5M923.0 386.5l-1.0 2.7M952.7 390.7l-1.2 3.0M969.3 392.0l-3.3 0.7M1009.7 417.2l-2.6 0.3M1031.1 353.2l-0.7 1.3M1013.6 357.8l0.6 0.9M1015.5 273.7l-1.2 3.4M1006.8 270.9l-1.0 3.4M1000.1 259.8l-2.4 1.2M889.8 301.2l1.0 2.1M925.3 303.6l-2.0 1.8M917.0 299.7l0.2 2.8M945.2 297.5l-0.7 2.1M902.0 371.6l-1.7 0.4M959.2 293.6l-0.6 2.3M998.8 405.5l-0.9 1.5M1015.1 287.5l-0.3 1.6M1030.4 432.3l-1.3 0.1M906.6 290.9l1.5 0.5M866.9 378.6l-0.2 1.2M868.2 360.7l-1.2 2.2M902.8 471.5l-0.7 3.2M947.6 502.0l-1.0 1.1M958.4 495.6l-0.7 0.9M997.9 455.3l-2.3 0.9M962.2 478.6l0.8 2.1M777.7 420.5l-0.1 2.1M774.9 424.6l0.9 3.4M815.1 441.8l-2.5 1.5M820.4 432.0l-1.4 2.3M753.5 418.5l-1.2 0.0M763.7 419.3l-0.9 1.6M761.9 421.1l-1.6 1.5M741.9 406.7l1.0 0.1M569.0 555.9l-1.2 0.2M647.2 413.6l-3.1 0.6M665.8 406.2l2.3 2.2M657.1 422.0l-2.2 0.8M585.6 494.0l-2.4 2.0" fill="none" stroke="#1a1a5a" stroke-width="0.8" stroke-linecap="round"/>
<path d="M491.7 288.7l-1.6 1.8M517.6 279.5l-1.3 2.1M504.7 280.6l3.4 0.9M516.1 280.4l3.4 2.0M533.0 294.8l-0.8 3.5M538.8 291.9l-2.1 3.8M550.4 286.1l-3.3 2.7M501.3 269.3l0.8 2.4M652.4 282.1l-0.2 2.4M802.0 320.9l0.2 2.1M972.9 362.0l-1.8 3.2M999.9 353.7l-1.1 2.4M990.2 362.3l-0.9 2.0M1025.0 309.0l0.2 3.1M942.5 313.8l-0.1 2.9M915.5 363.1l-1.2 3.3M1024.4 358.1l-0.7 1.7M955.3 285.5l-2.4 3.2M1032.1 272.0l0.5 2.5M983.1 261.3l1.3 3.0M934.5 304.9l-3.3 2.2M1003.3 295.0l-1.2 1.5M932.6 362.2l-1.2 2.1M940.5 286.9l-0.8 3.8M1000.1 461.8l-1.9 1.7M817.3 439.6l-3.5 0.7M825.1 438.0l0.0 2.2M817.9 440.4l0.7 1.6M751.0 419.5l-2.7 1.5M767.5 421.6l2.9 3.1M754.7 417.3l2.5 3.6M749.6 420.1l-3.1 1.3M734.5 398.0l0.1 1.8M826.0 520.5l-3.1 1.9M703.5 482.7l-3.9 1.1" fill="none" stroke="#000008" stroke-width="1.8" stroke-linecap="round"/>
<path d="M507.6 281.4l-0.8 2.0M503.2 284.3l-3.5 2.3M544.4 290.0l-1.7 3.5M539.2 298.2l0.7 2.6M492.3 314.8l-0.8 1.8M528.1 324.9l-0.4 2.5M651.1 266.2l-0.2 2.1M798.8 353.9l-0.4 1.8M781.7 356.9l-0.5 3.1M1024.8 303.3l-1.2 1.8M1009.8 385.0l-4.0 0.7M954.2 335.9l-0.8 2.0M988.5 343.1l-2.1 2.0M912.2 371.6l-1.8 0.1M980.6 284.6l2.3 1.1M987.8 264.5l-2.8 0.2M1013.2 262.7l-0.7 2.2M927.5 308.5l-2.7 1.2M866.7 382.8l-2.4 1.2M797.1 423.1l-1.5 0.9M785.1 426.2l-0.8 1.9M813.8 440.9l-2.0 0.4M765.1 424.2l-1.4 1.4M759.9 420.1l0.7 2.4M729.9 397.9l-1.5 1.9M744.5 387.6l-1.0 1.2M565.5 476.9l1.9 0.5M499.8 423.4l-1.1 2.0M665.7 411.3l0.5 3.0" fill="none" stroke="#05051e" stroke-width="1.8" stroke-linecap="round"/>
<path d="M508.9 279.5l-0.7 2.6M522.1 305.5l-1.3 1.9M545.5 278.7l-1.2 0.1M543.1 286.8l2.1 1.7M538.9 285.6l-2.9 1.8M566.5 262.7l-1.0 3.1M483.6 341.1l2.4 1.5M498.5 341.8l-1.3 3.0M545.2 289.1l-1.0 1.9M594.9 295.8l-0.7 1.3M656.1 272.4l-0.9 1.2M742.2 291.2l-1.0 0.8M877.7 259.0l-1.1 1.0M819.4 258.1l1.9 1.3M828.1 285.1l-3.1 0.1M781.7 327.5l2.3 2.5M784.6 347.9l-1.4 3.0M799.5 350.7l1.4 0.0M981.1 364.6l-0.3 3.4M975.0 356.6l-1.9 0.1M1008.4 378.8l-1.1 0.2M1018.1 376.3l-3.2 1.6M941.7 324.1l0.8 2.8M991.9 334.9l-0.7 0.8M990.8 332.8l0.5 1.8M929.6 375.0l-0.7 2.0M951.3 400.7l1.6 1.6M935.8 393.8l-0.3 1.5M1025.8 425.8l-1.9 1.9M1012.6 428.1l-1.5 1.6M986.0 286.7l-2.1 2.0M975.0 286.8l-0.5 2.3M1024.8 266.5l-1.8 1.9M1016.9 274.5l-1.3 1.0M931.5 304.8l-2.1 2.2M914.0 299.0l-1.6 2.1M979.5 412.3l-0.6 0.9M901.4 443.6l1.0 2.7M952.0 301.0l1.9 1.8M884.9 418.1l-1.3 2.8M897.9 394.9l0.4 1.6M921.8 502.1l-1.1 2.1M928.3 478.0l-1.2 3.4M947.5 478.6l0.0 1.2M978.1 462.3l-1.4 2.3M770.0 426.4l1.0 3.0M820.7 430.5l0.1 1.6M766.8 423.4l-0.6 2.2M778.6 422.7l-1.0 2.6M745.7 389.7l3.1 0.8M491.1 439.2l-3.4 1.0M518.3 407.7l-1.2 1.9M503.9 427.9l-2.3 1.6M724.4 463.9l-2.3 2.4M604.3 599.0l-1.3 1.4" fill="none" stroke="#34347a" stroke-width="0.6" stroke-linecap="round"/>
<path d="M501.3 275.4l-0.0 2.2M516.6 275.5l-0.2 2.7M524.8 295.8l0.1 2.9M523.5 308.5l-2.3 2.0M492.2 325.6l-1.9 0.7M543.2 333.4l1.0 3.0M654.8 294.1l-1.1 0.5M716.8 288.6l-1.2 0.6M697.1 277.3l-0.6 2.2M766.1 390.3l0.6 2.1M784.5 391.0l-0.9 1.4M786.1 377.2l-3.2 0.2M875.1 261.7l-1.9 2.7M810.9 355.9l-0.8 0.8M792.3 350.9l0.3 1.5M784.3 347.5l-0.5 1.0M746.4 349.6l0.3 2.0M780.6 376.1l-2.3 2.3M778.5 374.2l-1.3 0.4M984.1 350.0l-1.4 0.9M986.7 353.7l-0.7 2.8M987.1 344.9l-3.0 1.3M981.7 367.9l3.2 1.5M971.5 361.0l-1.6 3.0M1032.3 299.2l2.3 2.0M1000.3 343.7l2.8 1.4M994.6 310.8l-1.8 3.0M1011.3 344.0l0.5 1.1M998.0 323.3l-0.1 1.3M906.8 374.6l-2.0 2.3M1007.3 406.8l-1.9 0.4M1030.7 346.7l-3.0 0.9M1030.9 366.3l-0.9 0.9M929.2 305.6l-2.3 2.2M923.7 300.2l-1.9 1.7M918.8 259.8l1.4 0.5M952.2 408.5l0.2 1.6M871.7 346.4l-1.5 1.3M901.3 488.0l-2.3 1.7M948.3 490.4l-0.5 1.3M983.1 471.8l2.2 1.8M791.0 420.0l0.9 2.5M808.8 426.2l0.2 3.3M808.7 427.1l-1.7 0.7M803.6 439.1l-2.1 0.3M805.7 439.1l-0.6 1.4M817.9 434.6l-2.4 2.0M740.6 403.4l2.0 2.9M729.6 384.9l-3.2 1.4M736.6 399.0l1.8 1.5M751.3 388.1l-3.4 0.1M534.8 435.8l-3.0 1.6M495.6 431.9l-1.0 1.2M580.1 427.6l0.1 2.3M554.6 559.9l-0.0 3.3M678.0 505.1l0.7 1.5" fill="none" stroke="#23236a" stroke-width="0.8" stroke-linecap="round"/>
<path d="M504.4 285.3l-1.4 2.4M490.8 319.8l-2.7 1.6M587.8 297.4l-0.9 0.9M544.8 274.0l-1.5 0.7M487.1 269.2l-0.5 2.0M516.8 317.2l-1.1 0.9M489.1 302.7l-1.6 3.0M757.2 277.6l-1.4 1.7M645.7 263.8l-3.5 0.5M784.1 323.3l-1.0 1.3M818.0 333.9l-0.5 3.5M874.3 342.3l-1.2 0.3M779.8 334.6l-0.4 3.4M998.8 360.7l-1.1 0.0M938.4 347.2l-1.1 3.1M976.8 377.3l-1.7 1.5M974.7 354.9l-1.1 1.2M971.9 359.3l-1.5 1.0M987.9 376.3l-0.4 3.1M1028.6 305.9l-1.5 1.2M1026.4 293.9l-1.9 2.6M1025.7 386.4l-0.3 1.1M1012.6 385.4l2.8 1.3M1024.8 376.8l-2.1 2.0M941.5 317.2l-2.2 0.9M932.2 380.3l-0.8 2.6M948.0 384.0l-0.5 1.4M952.9 396.5l-3.2 1.4M1009.1 419.7l-0.6 1.6M950.2 277.4l0.5 1.9M993.2 291.0l-1.1 0.6M950.1 280.9l-1.3 1.3M1016.3 269.0l-1.5 2.5M878.7 294.7l-1.0 0.4M903.9 409.1l-1.1 1.6M989.4 350.8l-2.4 2.2M958.9 344.4l0.4 2.4M1030.0 295.1l-1.1 1.5M990.8 283.6l0.4 1.3M900.5 327.4l2.8 0.5M927.5 307.8l0.7 1.4M904.4 472.3l-2.4 2.3M901.9 479.3l2.9 0.7M961.9 493.2l2.8 0.8M936.8 489.1l-1.0 0.0M947.7 477.1l-1.7 0.4M917.0 494.3l1.4 0.2M952.5 493.1l-2.3 2.3M755.3 425.3l-1.6 1.9M740.0 420.8l-1.0 1.3M750.4 420.9l-2.2 0.2M524.2 438.5l-0.8 2.5M609.9 426.1l-0.6 2.7M507.7 418.7l0.9 3.1M495.4 427.0l-0.9 1.3M558.7 419.9l0.1 1.2M566.1 431.6l0.0 1.3M551.7 487.5l-1.5 0.5M693.3 457.1l-2.6 1.0M644.4 410.5l-1.8 0.7M651.8 407.3l-0.4 1.4M711.3 460.7l-2.5 2.2" fill="none" stroke="#1a1a5a" stroke-width="0.6" stroke-linecap="round"/>
<path d="M495.6 281.1l-0.2 4.3M551.9 264.5l-3.4 1.1M493.6 349.1l-4.1 0.7M549.0 338.7l-1.4 1.8M587.4 299.1l-1.7 1.5M592.0 292.9l-1.6 3.6M744.8 287.2l1.5 3.4M983.0 359.9l0.0 3.6M995.4 366.9l-0.9 1.8M1018.6 379.2l1.5 2.5M942.4 329.2l-2.2 1.7M1011.6 332.3l3.4 0.1M1002.2 346.9l-2.4 0.7M914.9 372.1l1.5 2.4M965.4 394.4l-1.7 1.6M959.8 393.7l-0.5 3.9M968.0 409.1l0.5 4.2M979.6 414.0l-1.0 3.1M1021.5 263.5l2.4 2.2M1017.1 271.5l-3.2 2.1M896.9 301.6l-2.2 3.2M900.1 296.9l-0.9 3.0M933.0 481.2l-2.5 2.2M942.8 472.6l2.9 2.3M1008.1 476.0l-1.9 1.3M783.8 432.7l-0.5 2.6M780.7 428.4l-0.3 3.9M765.7 423.1l-2.1 3.8M777.9 427.8l-1.4 3.2M820.4 432.3l-1.2 4.0M808.5 427.4l-1.8 1.4" fill="none" stroke="#0b0b3c" stroke-width="2.4" stroke-linecap="round"/>
<path d="M506.9 276.1l-1.5 3.2M504.5 283.2l-1.6 3.1M517.1 299.7l-0.5 3.4M514.9 305.7l-0.4 1.0M509.8 322.5l0.6 1.5M492.2 316.7l2.3 1.4M491.4 329.7l2.2 0.7M520.4 326.1l-0.4 1.7M508.3 340.1l-2.6 1.2M521.4 264.7l-3.0 1.0M492.1 267.3l-1.6 1.7M511.8 345.2l0.3 1.0M526.0 262.5l1.2 0.3M585.1 301.6l-2.4 0.4M709.2 282.7l-1.5 2.3M784.0 402.0l-1.6 0.8M742.1 324.4l-1.0 0.5M820.6 331.3l1.1 0.9M772.4 327.0l-0.8 1.4M778.1 378.2l1.1 1.8M758.7 361.6l-3.2 1.6M776.2 369.5l-0.9 2.0M979.8 366.3l-0.9 2.8M974.1 364.8l0.2 2.6M966.2 350.2l-0.1 2.5M970.4 354.1l-0.1 2.9M962.0 339.3l1.6 2.2M1034.1 296.6l1.0 1.9M1017.5 303.9l-0.0 2.7M1024.1 290.5l0.0 2.5M1028.4 300.9l-1.3 0.7M1028.8 301.8l-1.6 0.6M1011.9 380.3l0.5 3.1M1019.2 380.6l-1.4 3.2M929.4 331.9l-0.6 1.6M956.5 327.5l-1.0 3.1M1013.4 313.0l-1.9 1.3M983.3 334.8l-0.6 3.3M912.0 383.7l-2.7 2.4M962.6 382.2l-2.9 -0.1M1004.5 422.8l1.8 1.4M1034.3 343.3l0.5 1.1M1018.6 350.1l3.4 0.0M1011.2 268.6l2.3 1.0M954.9 329.2l-0.5 3.0M954.6 409.2l2.1 2.8M963.1 422.6l-2.5 2.5M897.9 420.7l-2.5 -0.1M864.4 405.2l-2.1 2.9M903.3 489.0l-1.5 0.5M961.5 482.7l-1.8 2.5M969.5 492.8l-2.4 1.3M971.5 458.6l2.8 0.5M782.6 418.1l-0.5 1.2M789.6 428.6l-2.2 0.4M812.2 430.7l-0.0 2.6M816.6 440.6l-1.0 1.0M746.4 394.9l-3.1 1.7M743.1 391.2l-1.3 1.6M744.7 388.8l-1.8 1.6M531.1 406.3l-1.4 3.0M526.5 420.2l0.1 2.2M539.6 475.6l0.7 1.8M504.7 421.9l-1.1 1.3M699.8 474.0l1.8 0.7M730.0 406.5l-0.1 3.4M683.7 493.0l1.5 0.2M712.0 461.4l-0.6 0.9" fill="none" stroke="#000008" stroke-width="0.6" stroke-linecap="round"/>
<path d="M501.9 277.9l-0.3 2.8M512.6 286.2l-2.8 0.2M506.9 282.6l-1.8 1.1M528.8 286.7l0.7 1.8M567.7 277.4l-2.6 -0.8M511.9 344.0l-1.5 0.8M489.0 346.2l-0.1 1.3M524.0 262.2l1.1 2.8M545.2 326.4l-2.6 1.8M574.0 336.0l-0.2 1.5M665.9 294.7l-1.8 2.4M694.6 261.5l-2.4 1.4M783.5 314.2l-1.3 0.2M845.1 267.9l-1.3 3.1M841.8 284.0l0.5 2.4M975.7 354.0l-0.8 1.0M962.8 359.9l-2.7 1.9M982.5 361.3l-1.5 2.3M982.3 344.9l1.6 2.7M973.0 353.0l-2.9 1.4M966.0 363.0l-1.5 0.4M984.7 342.4l0.2 1.0M1035.3 315.1l-1.0 0.9M1032.2 317.2l-0.5 2.1M1018.7 384.1l-0.0 1.4M1014.9 394.2l-0.5 1.9M936.1 328.5l0.4 1.6M991.7 342.8l-0.9 3.1M918.3 363.9l-0.2 1.6M893.9 385.9l2.2 1.8M1002.6 410.1l-0.7 0.8M1013.9 277.4l2.2 0.3M1007.3 262.8l0.1 2.1M1019.6 271.0l1.3 0.8M988.9 262.6l0.5 1.6M991.5 266.8l0.2 2.7M924.2 297.8l-1.5 2.0M913.5 403.3l2.7 0.8M901.1 453.0l-2.1 1.2M1036.5 259.3l-1.0 1.0M912.7 363.7l-2.3 1.2M956.2 396.2l-2.5 0.9M1029.9 391.5l-2.4 1.7M917.1 460.2l-0.6 1.1M960.6 272.5l-0.4 1.3M995.3 335.5l-0.8 0.9M865.9 346.3l2.5 1.7M912.4 479.5l-0.7 1.2M909.8 488.8l-1.6 2.6M794.5 426.7l-0.5 0.9M822.8 436.1l-0.8 2.0M749.0 418.0l-0.5 1.1M744.1 386.2l0.6 1.0M603.1 433.3l2.5 0.8M508.0 426.8l-1.8 0.6M514.8 427.7l-0.9 2.8M500.7 426.6l-2.4 1.1M549.2 425.0l-0.0 1.7M565.9 425.2l-0.9 0.7M588.4 568.7l-0.5 1.6M595.5 483.8l-2.4 0.9M765.2 560.1l0.7 1.7" fill="none" stroke="#2a2a6a" stroke-width="0.6" stroke-linecap="round"/>
<path d="M495.9 273.6l2.6 2.5M525.5 297.7l-3.6 1.6M519.7 303.5l-2.0 0.8M489.6 322.0l-0.6 1.7M511.9 327.8l-4.0 1.3M544.6 278.5l1.8 2.5M554.0 277.3l-2.3 1.7M741.7 294.0l0.5 2.6M744.3 284.7l-1.0 3.1M983.0 351.2l-1.1 1.9M978.0 351.9l-1.3 1.3M1027.4 289.5l-1.9 4.0M1035.4 306.6l-2.3 0.2M1014.3 384.6l-0.7 1.9M985.5 322.4l-1.4 1.6M922.2 381.9l-3.2 1.9M910.2 384.8l-1.5 3.7M1002.6 410.1l-0.7 3.7M1029.2 341.9l-0.6 2.1M937.3 286.4l1.9 0.2M1019.6 270.4l1.4 3.1M927.2 301.9l-2.9 2.8M907.2 498.2l-3.1 1.9M945.8 497.7l2.6 0.9M813.7 437.2l-3.2 -0.2M814.7 438.5l-2.2 1.3M828.7 438.4l-1.9 1.9M744.6 403.5l1.1 3.6M749.1 386.9l-1.2 1.2M560.4 417.1l-1.0 3.5" fill="none" stroke="#000008" stroke-width="2.4" stroke-linecap="round"/>
<path d="M506.4 281.2l2.3 0.1M503.1 278.6l0.7 1.7M538.0 293.3l-0.4 3.2M518.3 298.3l-1.1 1.2M496.5 317.9l-1.2 0.9M503.5 318.4l-0.9 2.7M558.3 276.3l0.3 3.5M517.0 260.9l-1.4 1.1M490.4 262.4l-1.2 0.7M527.8 320.0l-0.1 3.0M745.8 293.0l1.4 2.5M743.6 412.3l-1.7 1.1M800.0 322.3l-1.3 1.0M820.2 289.3l-1.4 2.6M790.1 351.3l1.0 3.4M763.1 362.8l-1.3 3.1M978.2 360.8l-1.7 2.1M956.2 338.1l-3.2 1.5M986.7 360.9l2.1 0.5M1029.1 311.7l-1.1 2.2M1034.2 307.7l-1.3 1.4M1016.4 382.9l-0.3 2.8M1015.8 374.1l2.0 0.1M948.4 341.1l1.5 1.0M929.7 333.1l-1.6 2.9M963.8 322.1l2.1 1.1M912.6 370.3l-1.0 1.4M966.3 408.4l-0.7 1.5M1030.9 349.1l-1.0 1.7M938.6 286.6l-0.5 2.9M920.5 301.9l-0.6 2.3M1019.0 378.3l-1.6 0.7M956.5 374.9l-2.0 1.7M944.3 384.7l0.3 2.4M940.7 270.4l1.2 1.0M903.8 311.2l-2.6 1.1M963.4 257.8l-3.3 0.7M1020.8 298.6l-2.7 2.0M886.6 399.7l-1.2 1.0M918.1 502.7l-3.3 -1.3M929.7 493.2l0.8 1.3M979.5 462.8l-1.0 0.4M979.4 468.8l-3.1 0.1M825.6 430.5l-1.2 1.9M814.2 436.5l0.0 1.9M768.5 423.0l1.0 2.4M744.2 390.4l-1.1 3.3M568.9 566.6l2.0 1.4M679.9 501.5l-0.2 1.8M681.6 496.8l2.5 1.3" fill="none" stroke="#000008" stroke-width="1.0" stroke-linecap="round"/>
<path d="M518.7 282.9l-0.1 1.8M502.1 295.8l-1.6 2.6M496.0 281.9l-2.2 1.2M519.2 303.4l-1.4 2.1M514.8 295.9l3.0 0.7M550.2 274.8l-0.7 1.7M501.7 323.7l0.1 2.1M527.4 321.3l-1.8 3.0M541.8 325.5l-2.2 0.9M577.6 279.1l-0.6 1.3M516.4 259.4l2.0 1.9M486.6 272.3l2.3 2.4M567.0 280.2l1.0 1.2M491.8 344.7l1.5 1.4M521.7 317.1l-0.5 1.2M590.4 296.3l-1.4 1.2M701.2 268.5l-2.3 2.1M649.3 271.0l-2.1 0.2M765.3 352.5l-3.5 0.3M835.9 327.3l1.0 0.6M889.8 327.7l-0.3 1.6M799.9 329.4l-2.9 1.3M883.3 294.2l-1.6 3.0M861.3 303.0l-1.0 0.5M801.7 326.6l-0.6 1.3M834.4 298.5l-0.4 2.3M970.4 365.3l-1.1 2.2M985.1 366.1l-1.0 0.7M1025.8 294.0l2.0 0.1M1025.0 298.9l0.2 3.0M1035.1 295.1l-1.4 1.9M1012.2 382.7l1.5 0.8M1016.4 385.6l-3.0 1.6M1009.4 380.6l-1.0 0.6M1023.1 392.4l-0.9 2.0M961.1 321.5l-0.2 1.8M942.6 311.8l1.6 0.6M942.3 334.0l1.2 0.4M999.5 335.0l-0.6 1.8M929.9 378.4l1.0 1.4M986.3 409.2l0.1 1.8M1012.3 425.1l-0.2 1.8M938.3 285.3l0.9 1.9M953.1 305.5l-0.5 2.4M1020.8 281.0l-0.8 1.1M1022.1 261.8l0.2 2.8M1022.5 277.4l-1.7 1.0M936.7 307.7l0.6 0.9M1024.4 321.3l3.3 0.6M920.0 412.2l-3.0 1.7M1028.2 454.1l-0.6 2.5M888.7 355.2l2.9 1.1M952.4 485.5l-2.1 0.4M992.3 476.6l-2.5 0.7M995.5 473.0l-2.5 2.4M790.4 421.6l3.6 0.2M764.1 428.0l0.7 2.4M813.2 437.3l-2.9 1.4M822.0 429.9l-2.3 0.8M814.8 435.6l1.9 1.4M814.9 445.5l-0.8 0.8M757.2 418.3l-0.3 1.9M745.4 401.1l-2.1 0.3M604.0 431.5l-0.9 2.3M585.2 403.1l-0.8 2.7M499.2 427.7l-3.0 0.5M695.2 450.9l-0.8 2.8M692.0 413.2l-2.8 0.2M677.8 507.0l-0.6 1.5M707.7 459.3l-2.9 1.1" fill="none" stroke="#23236a" stroke-width="0.6" stroke-linecap="round"/>
<path d="M488.7 287.3l-1.5 1.7M533.8 297.4l-1.4 2.2M542.6 287.3l-0.2 3.6M546.0 287.2l-1.7 3.3M543.2 284.9l-3.6 0.9M562.6 320.3l-1.8 1.9M588.2 293.4l-1.6 1.4M591.1 295.1l-1.8 3.7M781.8 382.3l-2.4 1.0M769.4 369.3l-1.6 1.3M971.6 343.1l0.1 2.2M974.2 356.3l-2.8 0.0M974.5 359.8l-3.5 2.6M1030.1 293.7l-1.1 2.0M916.9 357.8l-1.9 3.7M913.6 379.8l-2.6 2.5M951.9 396.0l-1.2 1.5M1002.4 428.0l-1.6 1.0M1019.1 418.5l-1.8 2.1M1015.3 264.3l-2.5 3.1M990.5 361.2l-3.3 1.1M950.8 342.6l2.0 1.8M965.1 487.6l-3.8 1.9M799.1 427.3l2.0 2.1M816.9 418.3l-1.0 1.8M810.9 426.5l-2.1 3.2M805.4 440.2l-3.3 2.2M801.5 435.7l-2.3 3.4M484.1 446.9l-0.2 2.5M559.6 427.5l-2.9 -2.4M573.5 437.4l-1.0 1.8M720.1 474.1l-0.9 2.1" fill="none" stroke="#0b0b3c" stroke-width="1.8" stroke-linecap="round"/>
<path d="M505.2 274.2l-0.5 2.2M494.1 277.5l-3.6 1.0M530.0 285.1l-0.0 2.6M498.9 323.0l-1.4 2.0M496.0 313.0l-0.9 2.9M521.4 327.1l2.6 2.9M540.4 302.4l-2.1 3.3M565.1 276.2l-1.2 1.9M493.9 338.9l-1.9 -0.3M740.5 291.2l-0.5 1.9M738.3 292.7l-0.3 1.7M744.8 383.7l-1.6 1.1M795.4 272.6l2.8 2.6M802.1 319.0l0.2 2.5M793.9 352.7l-0.3 1.8M966.9 361.1l-1.7 0.7M992.1 349.3l-0.8 3.4M1010.6 391.0l-2.6 0.0M1013.9 337.1l-3.2 1.7M1005.7 335.3l0.7 3.1M913.2 374.5l-2.5 2.1M956.8 269.1l1.1 2.2M1012.6 271.9l-0.3 2.3M954.6 398.0l-0.2 3.8M929.2 418.4l-1.8 1.1M873.7 413.4l0.8 1.4M881.5 428.6l-2.4 1.0M891.6 397.8l-2.7 2.3M867.0 383.9l-0.6 1.6M891.2 499.3l-2.8 3.4M909.9 486.9l-2.2 3.3M784.1 429.3l0.0 3.4M804.4 441.5l-2.7 2.2M769.1 425.1l-2.1 2.0M510.1 417.4l-3.5 1.3M560.2 432.8l1.9 2.5" fill="none" stroke="#0b0b3c" stroke-width="1.4" stroke-linecap="round"/>
<path d="M519.7 280.4l1.6 0.2M527.4 300.1l-0.1 1.7M548.4 291.7l-1.0 3.0M509.4 319.9l-0.2 1.5M508.5 328.1l-1.9 1.3M563.2 286.0l-0.9 1.0M486.8 341.6l-2.7 2.3M513.6 260.1l-1.4 1.3M497.6 266.7l-0.3 1.1M489.5 272.2l0.8 0.9M554.6 332.9l-0.3 2.2M650.2 286.6l-2.1 0.8M652.3 259.3l-0.6 3.5M676.8 280.0l-2.6 0.6M708.8 290.1l0.8 1.8M705.2 269.7l-2.0 1.9M751.1 304.2l-1.1 1.0M743.2 364.2l-2.5 0.1M777.6 326.9l2.1 1.9M776.4 344.4l-0.8 2.2M786.9 343.8l-0.0 2.2M803.6 334.6l-1.0 0.6M776.0 378.7l2.6 0.1M980.6 342.2l-2.5 1.3M976.9 364.3l2.7 1.0M976.7 360.7l-0.2 1.1M972.0 356.8l-0.7 2.5M959.6 358.8l0.1 1.2M1025.6 298.4l-3.4 0.2M1024.2 310.0l-2.5 1.5M1033.8 300.7l-2.0 0.3M1027.4 311.0l-0.6 1.6M1012.1 380.7l-1.0 2.1M1014.0 382.2l-2.3 2.6M948.1 339.5l-0.3 1.4M933.0 323.0l0.6 2.4M903.7 376.1l-1.1 0.8M1018.7 414.9l-2.3 1.2M1027.9 416.2l-2.7 1.4M1020.0 345.6l2.1 1.3M943.3 284.1l-0.5 1.3M1024.1 270.1l-1.9 1.8M999.0 263.9l-1.6 0.6M1001.3 261.2l-0.1 1.6M998.2 257.2l-0.2 2.1M957.0 464.8l-0.1 2.7M1023.1 405.2l-0.7 1.6M955.7 427.2l-0.1 2.6M921.8 358.9l-1.0 1.2M986.6 384.7l-0.5 1.7M925.5 484.3l-0.8 1.5M908.0 478.4l-0.4 2.4M801.9 426.2l-1.8 0.1M766.9 425.8l-1.1 2.1M766.2 417.4l0.1 1.9M764.1 417.1l-2.6 1.2M741.4 400.3l0.2 1.4M745.5 399.8l-0.6 3.0M741.1 391.7l-1.9 2.3M574.2 462.1l-0.5 2.6M664.8 419.9l-2.6 1.9M1006.2 543.9l2.0 1.6M691.9 479.2l-0.5 1.7M689.2 474.4l-0.9 0.8" fill="none" stroke="#05051e" stroke-width="0.8" stroke-linecap="round"/>
<path d="M510.4 275.1l-1.1 1.4M551.5 290.8l1.7 3.3M496.0 323.1l0.8 3.8M500.6 321.5l-1.8 0.9M575.4 296.9l0.1 1.6M569.5 329.3l-2.4 1.9M745.1 294.9l-2.1 1.1M763.6 373.8l-1.4 1.8M876.6 314.5l-3.0 0.6M987.0 357.5l-1.0 3.2M1037.1 308.4l-2.5 0.1M1032.1 295.5l1.9 0.3M1031.3 308.6l-0.1 1.9M922.8 321.5l-1.1 3.3M1010.6 332.7l-1.8 2.2M1003.7 273.0l-0.3 3.4M1028.8 265.0l-4.0 -0.9M993.3 263.5l-2.3 0.7M993.5 261.5l0.4 2.0M925.8 300.7l0.6 3.2M921.8 411.0l-1.6 2.7M956.9 364.4l-1.7 3.0M1013.9 455.5l2.3 2.7M859.4 370.7l1.5 2.5M916.7 501.9l-2.2 3.5M898.8 478.4l-2.4 1.7M941.8 499.0l-0.7 1.9M978.4 494.5l-0.4 3.9M809.3 426.9l0.9 1.8M773.1 426.9l0.1 3.5M780.5 417.2l0.5 2.7M735.1 411.2l-0.8 3.8M583.9 460.6l-2.1 1.3M600.6 414.0l-2.8 0.7" fill="none" stroke="#000008" stroke-width="1.4" stroke-linecap="round"/>
<path d="M506.5 281.8l-1.1 0.9M502.8 279.4l-2.1 0.7M554.0 331.2l1.0 0.6M531.0 269.6l-2.0 2.1M485.3 301.4l-2.6 -1.2M523.2 343.2l-1.3 2.9M570.8 300.3l1.0 0.3M506.6 282.8l0.0 2.8M531.2 315.2l1.1 0.2M652.4 295.3l3.1 1.5M697.2 257.2l-0.5 2.0M682.8 296.6l0.7 3.3M692.8 273.5l-0.5 3.4M696.3 264.9l-0.4 1.7M764.6 417.9l-1.8 2.6M769.0 335.5l-1.9 1.4M796.3 329.2l-1.5 2.1M821.6 330.8l-1.3 2.3M875.8 311.1l-3.6 0.2M772.1 375.3l1.8 1.7M974.8 362.1l-1.6 1.0M978.3 354.0l-1.1 1.3M957.2 346.2l-0.7 2.1M1033.2 312.6l-0.8 2.1M1034.4 302.0l-0.9 1.8M1019.5 382.9l1.8 2.7M937.5 324.6l0.8 1.5M951.5 331.3l-0.9 2.5M994.8 350.3l-2.2 0.1M999.7 324.7l-1.1 1.0M912.5 370.1l-0.3 2.3M952.4 399.3l-2.0 1.2M971.5 406.0l1.9 1.8M958.8 387.9l-2.2 2.0M948.5 407.2l-1.1 2.7M1031.3 340.0l-1.7 2.4M1018.4 354.3l1.4 2.7M892.0 296.8l1.5 1.2M925.7 318.2l1.0 3.2M934.9 292.8l-1.1 1.1M924.4 292.5l-0.5 1.8M922.9 336.7l1.7 1.6M1012.3 297.3l1.9 1.3M988.3 453.4l-1.2 3.4M1036.0 335.0l-1.6 1.8M882.2 359.4l-1.1 0.1M904.4 493.3l-1.0 2.0M924.1 489.6l-1.7 2.0M975.2 440.5l-0.2 2.9M969.4 465.8l-1.0 0.2M1016.9 459.9l-2.8 -0.8M760.0 422.9l-1.6 0.5M787.8 431.9l-1.1 1.4M749.4 409.7l-1.9 3.0M589.1 487.3l-2.7 1.4M744.1 502.6l-0.7 1.2M698.4 410.6l-2.0 1.8M674.9 489.1l-1.5 3.0M692.0 479.5l2.6 1.5" fill="none" stroke="#0b0b3c" stroke-width="1.0" stroke-linecap="round"/>
<path d="M494.8 275.5l-2.2 0.7M535.5 290.1l0.9 0.8M517.9 296.8l0.1 1.0M543.5 282.6l-0.4 2.8M575.8 298.4l2.5 1.2M489.9 260.0l-1.9 2.8M496.7 279.9l-2.5 -0.0M560.0 343.5l-0.8 1.6M567.3 321.3l-0.7 2.7M590.7 299.1l0.3 1.0M677.0 284.1l-1.9 0.7M716.6 275.8l-2.8 1.8M689.6 294.9l-1.8 0.3M769.1 330.0l-0.9 2.2M831.5 325.1l-1.0 2.7M873.7 342.8l-1.5 1.0M785.3 295.1l1.6 1.9M832.0 272.6l0.4 3.5M824.5 359.2l-1.2 2.5M802.5 329.2l-1.0 3.4M783.3 359.2l-0.9 1.0M756.3 366.5l1.5 0.6M968.8 342.6l-1.6 2.1M976.2 362.2l-1.3 2.1M960.9 346.5l-0.1 2.2M993.5 359.7l1.8 2.0M1027.6 317.9l-2.2 1.1M1026.5 298.5l-3.4 0.5M1027.1 390.8l-0.3 2.1M1011.8 381.0l-0.9 0.8M1015.8 378.7l-0.9 0.6M945.6 323.3l-2.2 2.1M929.6 332.6l-2.3 0.9M998.6 326.1l-2.2 1.9M1008.6 334.3l-0.6 1.1M1007.8 348.6l-0.9 1.9M999.4 340.3l-1.2 1.5M922.7 381.5l-0.9 1.4M974.6 386.6l2.9 0.6M936.8 395.1l-0.7 1.4M974.9 396.9l2.9 1.8M952.1 412.3l-1.4 1.1M923.3 282.9l0.4 2.0M1021.5 267.8l2.7 0.3M1000.9 267.8l-0.1 1.0M1014.2 269.6l0.6 1.8M885.3 298.6l-2.3 1.1M890.6 301.2l2.0 1.2M933.8 349.2l-3.4 -0.1M943.5 299.5l-2.5 1.6M903.1 482.4l-1.6 2.2M934.1 505.8l-2.1 1.5M908.5 489.9l-1.2 0.5M968.0 498.7l-1.2 1.0M939.3 491.1l-1.6 0.8M1004.4 478.2l0.9 0.6M973.7 465.9l-1.2 1.6M964.9 441.5l0.6 1.7M777.2 420.3l-1.0 1.2M745.7 400.9l1.2 2.9M753.5 386.9l-2.2 1.8M507.0 419.1l-1.8 2.1M510.7 422.3l-1.6 1.9M713.1 469.9l-2.0 2.3M725.2 418.9l0.8 0.9M678.9 499.1l0.0 2.7M685.8 478.5l2.7 1.1M716.6 458.3l-1.2 1.8" fill="none" stroke="#2a2a6a" stroke-width="0.8" stroke-linecap="round"/>
<path d="M498.7 287.1l-2.1 1.1M517.4 302.3l0.9 2.8M552.8 299.0l-1.2 1.7M497.4 309.0l-1.9 1.1M544.4 320.1l2.1 0.9M534.1 324.4l-0.3 1.6M528.2 315.8l3.2 0.8M552.7 271.7l-1.2 2.1M738.7 290.2l-0.2 2.0M798.9 319.6l-3.5 0.7M768.9 344.7l1.3 0.7M802.5 324.5l-1.2 2.6M853.7 266.5l-2.4 1.2M792.4 353.6l-1.4 2.7M790.7 341.7l-0.8 1.4M798.2 338.4l-2.0 1.8M760.5 367.1l1.9 0.5M978.2 352.5l-1.0 1.0M968.7 365.0l-0.9 1.0M989.0 371.0l-3.0 0.3M970.5 367.8l-3.3 1.3M987.6 351.0l-1.2 2.0M976.9 355.9l-1.1 0.7M959.7 354.2l-1.2 1.7M1027.1 310.4l-0.2 2.2M1022.1 297.7l-2.1 0.1M947.8 320.9l-0.4 3.2M938.3 339.6l-0.0 1.1M904.4 375.1l-0.9 1.1M950.1 402.0l1.4 2.4M999.9 415.7l0.9 2.6M990.4 421.8l0.7 1.0M987.1 292.5l-2.0 2.9M1026.6 279.3l2.7 2.1M1013.6 273.8l-0.5 1.6M987.9 261.9l1.7 3.0M983.8 260.4l0.2 2.0M996.4 260.6l-0.7 1.6M999.9 262.5l-1.4 1.2M1032.7 269.1l1.2 1.4M946.0 289.4l1.7 0.4M902.2 476.6l-0.9 2.5M910.9 498.4l1.5 1.3M911.4 491.1l2.2 1.9M946.2 497.9l-0.5 2.9M815.3 437.6l-1.1 1.3M526.6 446.9l-0.5 2.1M500.0 416.3l0.7 2.5M673.0 405.1l-0.5 2.6M695.0 478.8l-1.4 2.6M710.4 463.0l1.0 1.2" fill="none" stroke="#1a1a5a" stroke-width="1.0" stroke-linecap="round"/>
<path d="M520.7 278.5l-0.9 1.4M522.3 299.6l0.2 1.9M496.2 318.0l-1.9 1.1M492.2 326.5l0.2 3.4M548.4 319.9l-0.8 1.1M567.4 271.3l-2.2 0.5M560.7 310.4l-0.9 0.9M568.3 303.3l0.0 1.1M515.9 270.1l-1.5 1.5M757.3 299.3l-1.2 0.9M706.8 267.5l-2.8 1.5M689.6 275.8l-0.9 1.0M756.7 405.4l-0.4 2.1M755.4 408.3l-0.3 1.1M820.9 329.2l1.3 2.0M814.4 269.7l-0.2 2.5M807.0 340.7l-0.8 0.7M781.3 383.2l-1.6 2.5M980.2 345.5l-1.7 0.7M985.5 363.8l-1.3 0.3M984.4 340.1l1.8 1.2M1031.5 310.3l2.7 0.5M1030.5 308.5l0.3 3.5M1019.7 295.8l-0.0 2.4M1021.9 379.8l-1.4 0.7M1004.0 345.4l-1.7 -0.1M1004.7 322.8l0.0 2.4M923.6 371.0l-1.5 1.2M910.1 387.2l-1.7 0.0M920.9 382.4l2.9 1.5M980.3 424.7l-0.6 1.9M1024.0 327.3l-2.2 0.9M958.1 298.3l-0.9 1.2M940.2 292.8l2.2 2.7M1021.8 277.5l0.6 1.2M991.8 263.9l-1.1 1.8M942.0 298.2l-1.4 2.7M972.0 353.0l-2.8 1.1M977.3 464.5l-2.1 2.6M1005.1 360.0l-1.7 0.9M939.1 378.4l-0.3 1.6M896.0 358.9l-2.0 2.1M884.6 389.5l-1.1 1.0M892.6 482.1l-0.5 0.9M914.1 500.2l-1.5 3.2M751.1 427.0l-2.0 2.2M798.4 429.7l-0.4 1.1M780.4 431.7l-0.5 2.4M745.0 418.9l-0.9 0.8M504.2 426.3l0.5 1.6M939.1 482.8l-2.2 1.9M701.6 479.4l0.2 2.8M746.0 603.8l-1.3 1.2" fill="none" stroke="#0b0b3c" stroke-width="0.6" stroke-linecap="round"/>
<path d="M509.9 287.0l-1.9 1.6M549.6 285.1l2.0 1.1M531.2 322.0l-0.7 0.9M522.2 309.0l0.4 1.1M565.7 268.8l-0.7 1.6M494.1 335.4l-1.5 0.1M590.3 297.6l-2.6 0.7M653.7 287.5l-1.4 3.3M695.3 287.6l-1.4 2.2M696.1 260.6l-1.2 1.7M772.7 353.6l1.1 0.2M780.9 372.1l-1.0 0.4M740.8 336.7l-0.6 3.1M755.6 398.5l-1.4 1.7M772.5 371.0l0.3 1.2M756.9 328.9l-0.5 2.3M779.6 283.9l-1.6 1.8M812.1 302.5l-1.0 -0.3M799.6 313.3l-2.0 0.1M846.8 326.9l-0.3 2.7M774.1 262.3l-0.1 2.5M798.6 347.6l0.3 2.4M755.1 367.5l0.1 2.8M978.7 340.4l1.1 1.6M972.1 359.4l-0.2 1.8M976.3 354.0l-1.1 0.6M975.9 361.1l-1.3 1.5M981.5 362.8l-3.1 0.3M978.8 355.9l-1.3 1.2M980.4 352.4l-3.2 0.7M960.6 366.9l0.0 2.7M1028.8 307.5l-0.5 1.0M1014.3 376.8l-0.9 0.9M960.2 316.5l1.7 0.0M954.9 325.8l1.4 1.8M946.8 333.1l-0.1 1.1M927.8 321.2l-2.0 -2.5M995.2 329.5l-0.8 1.5M945.7 407.9l3.2 1.1M1015.3 418.2l-0.9 0.8M886.4 300.0l-3.1 1.5M1026.3 386.4l0.4 2.3M919.5 334.1l-0.5 1.8M1025.3 386.5l-2.0 2.7M907.2 376.4l-3.5 0.5M1008.0 260.7l1.1 0.5M953.7 267.2l-1.2 2.8M918.9 487.3l-1.4 0.5M910.2 478.0l-0.5 1.9M806.3 438.9l1.8 2.9M743.7 390.5l0.3 1.6M542.1 463.4l-3.4 0.3M505.4 475.5l-0.7 1.0M555.8 517.8l0.4 1.3M910.5 599.0l0.9 2.3M695.5 480.1l1.6 0.2" fill="none" stroke="#34347a" stroke-width="1.0" stroke-linecap="round"/>
<path d="M515.4 287.7l-1.4 1.3M534.7 290.7l-1.8 1.6M513.0 310.4l1.3 0.2M538.6 315.4l-0.6 0.8M532.6 320.1l0.3 1.1M561.3 266.1l-2.9 0.7M577.4 301.0l-2.1 2.6M497.5 267.4l-1.2 0.8M546.8 329.4l1.1 3.1M558.7 331.5l-0.5 2.2M571.2 311.9l-1.3 0.9M591.3 293.6l-1.3 1.3M655.0 290.8l-0.1 1.5M709.7 263.6l-0.5 2.2M740.6 283.7l-0.9 0.8M719.0 273.8l-0.7 1.2M879.8 269.8l1.8 1.3M851.3 280.1l-0.1 1.4M874.5 305.6l-0.7 1.0M792.5 321.3l2.3 2.6M797.7 340.2l-1.1 2.1M796.9 342.4l-2.2 2.0M770.1 385.8l-1.8 2.0M997.5 357.9l-0.5 1.7M979.1 363.8l-2.1 2.1M1011.1 380.7l-0.9 2.6M1015.4 388.1l-1.8 1.7M1006.3 385.1l0.7 3.3M932.1 320.4l-2.0 2.9M946.9 332.6l0.1 1.0M925.7 326.7l-3.5 0.1M994.3 329.0l-0.9 0.3M994.9 331.6l-1.2 1.7M909.7 372.5l-1.0 1.2M927.2 379.0l-1.2 1.6M960.7 406.5l-0.8 0.7M957.8 405.5l0.5 3.5M982.7 421.6l-3.1 0.8M945.6 397.8l-2.3 1.2M1010.8 415.6l-1.2 3.1M1033.9 280.4l-0.3 1.6M994.6 260.2l0.1 1.9M916.1 466.3l1.8 3.1M988.6 421.6l-1.7 3.1M907.0 409.8l0.3 1.6M1020.3 327.8l1.2 2.9M919.3 376.5l-1.7 -0.1M960.7 401.6l-0.3 2.7M956.0 439.0l-0.3 3.2M991.3 264.8l-1.3 1.8M945.3 284.7l0.2 2.4M1023.2 273.3l0.9 1.6M937.4 294.2l0.2 3.6M975.6 312.4l-2.7 1.7M910.1 488.0l0.5 3.6M922.9 484.6l-0.8 2.9M900.3 490.6l-1.6 2.1M881.1 478.4l-0.8 0.6M924.3 498.3l-0.5 1.0M962.1 486.7l1.1 1.2M797.6 426.7l-1.1 1.0M797.8 424.8l-0.4 1.7M782.0 433.8l-1.9 2.4M755.2 419.3l-1.6 1.5M781.4 423.7l0.4 1.4M799.6 441.6l-2.8 2.2M743.1 389.5l-2.2 0.3M603.3 448.8l-0.3 2.2M566.4 437.6l1.4 0.1M498.1 422.4l-0.9 1.4M492.1 420.2l0.8 1.0M598.4 505.8l-3.4 -0.7M691.3 492.0l-2.0 1.0M684.4 498.9l-1.8 1.7M697.8 481.3l0.2 3.1" fill="none" stroke="#34347a" stroke-width="0.8" stroke-linecap="round"/>
<path d="M520.1 317.0l-2.4 2.1M542.4 288.3l-0.5 2.3M566.6 267.2l-2.4 3.3M522.8 268.1l-3.2 1.8M501.0 277.5l-1.7 3.3M538.5 334.0l-1.1 2.6M512.5 263.4l-0.7 1.9M588.6 294.0l-1.9 0.4M649.7 283.6l1.4 2.9M740.1 290.4l-2.6 1.3M790.6 389.0l2.2 1.2M797.0 259.6l-3.1 1.1M994.6 360.2l-0.8 2.4M967.5 336.8l0.6 1.5M965.7 346.9l1.8 1.1M1035.0 286.7l-2.3 2.7M1028.4 304.0l-3.4 1.7M1031.4 294.2l-1.1 1.4M1035.0 301.0l-3.0 1.5M919.8 376.2l-1.5 3.9M1009.2 407.2l-2.5 1.8M1024.5 355.6l-1.2 1.4M981.4 269.4l-0.0 2.9M989.9 330.8l2.0 2.5M931.9 491.9l0.6 1.9M794.3 426.9l-2.4 2.8M785.3 427.4l-3.6 0.6M812.3 435.7l-3.3 2.7M743.7 392.5l-2.7 1.5M553.7 428.0l-3.5 1.1M544.1 553.3l-2.3 2.6M595.8 581.8l-1.9 1.8" fill="none" stroke="#05051e" stroke-width="1.4" stroke-linecap="round"/>
<path d="M524.8 297.9l2.6 3.3M529.8 300.8l-0.8 2.0M543.5 294.8l-1.4 3.1M518.5 319.8l0.6 2.8M531.0 326.1l-1.6 1.5M565.4 278.0l-2.5 1.2M654.7 290.6l0.0 4.3M653.4 289.2l-1.5 2.1M696.4 268.8l-2.5 1.8M798.5 332.0l-1.1 1.5M990.9 358.5l-2.7 0.2M972.7 350.7l-2.3 3.3M983.4 361.7l-1.7 2.2M1031.8 299.9l-3.3 1.4M949.3 336.4l3.3 1.9M968.7 409.7l0.6 4.1M1018.6 360.9l-1.9 3.4M1036.5 358.9l0.9 3.0M972.1 298.8l0.1 2.4M957.5 488.5l-2.3 2.0M793.6 428.6l-2.6 3.5M788.0 422.9l-2.6 2.7M774.6 428.3l-1.4 4.1M789.0 425.4l-1.0 2.5M807.0 430.6l2.6 1.8M818.5 435.4l0.0 2.6M819.8 432.4l1.7 1.1M748.4 381.3l-1.6 1.6" fill="none" stroke="#05051e" stroke-width="2.4" stroke-linecap="round"/>
<path d="M527.5 299.1l0.5 2.8M513.0 288.5l-2.9 -0.6M518.8 310.2l-0.1 1.5M554.3 290.8l-1.8 0.2M543.3 282.0l-0.0 1.6M528.1 309.9l-1.8 0.7M563.6 296.6l1.2 3.4M568.9 296.4l-1.8 0.8M522.3 264.5l-1.9 2.5M561.1 315.7l-1.4 1.6M579.5 328.2l-0.3 1.0M518.0 295.2l-1.5 0.7M583.5 298.9l-0.8 2.2M682.1 263.8l-2.2 1.1M651.9 258.7l-2.1 1.9M740.6 287.4l0.1 2.7M795.0 311.4l-0.5 2.2M749.1 338.0l-0.6 1.8M767.9 307.3l1.1 1.1M894.0 335.5l-1.3 1.9M845.2 272.6l-1.6 0.7M889.2 283.3l-1.9 2.1M792.0 298.1l-2.4 1.0M784.2 339.7l-0.2 1.4M758.9 341.9l2.7 1.5M984.4 357.2l-0.3 3.1M1026.7 303.5l1.2 1.8M1033.3 314.6l-2.3 2.6M1036.1 302.6l-0.4 1.6M1036.7 300.2l-1.6 2.1M1027.3 375.9l1.4 1.9M938.1 315.2l1.8 0.5M1000.3 316.3l-1.2 0.9M901.8 382.0l-0.8 1.0M922.9 393.7l-2.2 0.4M923.2 372.3l-1.2 0.2M966.6 396.5l-1.0 2.6M1008.0 423.9l-1.5 1.6M1021.8 341.6l-2.3 1.3M949.6 282.8l0.1 2.4M1009.6 260.6l-2.8 1.2M976.7 262.7l-2.5 0.0M892.0 301.4l-1.7 1.5M941.1 292.4l-1.7 2.9M968.4 323.6l-0.9 0.4M1031.4 364.2l-0.6 2.8M937.6 309.9l-0.8 1.7M1016.3 436.2l-0.5 1.5M868.2 398.3l-0.3 1.4M939.1 492.9l-0.3 3.0M973.0 463.1l-1.4 1.5M791.7 423.4l-0.5 1.4M770.5 418.8l-1.3 0.7M788.6 429.9l1.5 3.1M796.7 429.1l-0.4 2.2M819.1 446.6l-1.0 -0.1M739.7 389.9l2.5 2.2M564.5 417.5l0.2 1.3M655.2 416.8l1.3 0.2M715.6 461.4l-1.5 1.6" fill="none" stroke="#05051e" stroke-width="0.6" stroke-linecap="round"/>
<path d="M511.7 297.2l3.4 0.9M548.0 288.6l-1.9 2.4M547.8 277.3l-3.3 0.6M519.2 311.8l2.6 0.6M576.4 301.2l-1.5 0.3M574.9 292.6l-1.5 2.0M495.2 272.4l-1.8 0.4M534.5 307.8l-1.4 -0.9M507.6 281.2l2.4 0.2M561.6 259.5l0.3 2.7M724.1 287.3l-3.0 1.1M793.2 314.3l-1.7 1.7M861.2 281.2l1.5 0.1M818.4 323.2l-1.0 0.9M769.1 346.3l2.5 1.3M809.6 331.1l-0.3 1.9M768.6 376.1l-2.4 0.2M992.7 362.6l-1.4 3.2M985.9 351.1l1.1 2.1M993.8 364.5l-0.8 1.9M982.1 350.7l-1.7 1.0M985.9 361.4l-2.6 0.8M963.0 355.2l-1.0 1.2M1031.6 307.3l-2.1 1.6M1015.5 386.3l1.5 2.8M1022.7 383.6l-0.9 1.0M1012.7 382.9l-1.6 0.5M1017.1 389.2l-0.6 3.4M943.4 345.1l-1.7 2.0M943.3 331.0l-1.2 1.0M1015.4 340.7l-0.4 0.9M913.0 372.5l-0.6 1.0M920.3 379.9l0.7 2.8M965.4 398.8l0.2 1.5M1001.9 410.2l-2.2 1.9M1026.1 343.6l-0.9 1.6M960.7 281.4l-0.6 1.2M962.0 270.0l0.2 1.6M1011.0 271.6l-0.1 1.7M878.9 298.5l1.0 0.9M908.7 270.8l-0.9 1.6M991.7 352.9l-2.2 1.0M919.3 400.0l1.1 1.9M1030.8 372.9l-1.8 3.1M942.6 430.6l-1.1 1.3M902.4 262.5l-2.7 1.9M861.4 362.1l-2.4 1.9M910.5 475.1l-1.2 1.2M943.1 492.4l-0.9 2.6M985.9 483.7l-1.0 0.7M805.6 423.6l2.7 1.9M829.0 428.2l-0.8 1.8M598.2 465.2l-1.0 0.9M500.4 471.8l-1.4 0.2M576.4 425.3l-1.8 1.4M695.9 475.2l0.8 2.0" fill="none" stroke="#05051e" stroke-width="1.0" stroke-linecap="round"/>
<path d="M520.8 298.5l-0.8 0.8M515.9 306.9l0.7 1.2M488.1 322.1l-1.7 2.5M535.2 320.6l1.8 1.4M550.8 315.4l0.4 3.1M532.5 335.5l-0.9 1.2M485.1 338.3l-0.4 3.5M492.2 350.6l1.5 0.1M588.6 294.5l-3.4 0.6M708.4 286.2l-3.4 0.5M758.5 368.7l-0.9 2.4M771.7 342.4l-2.0 0.7M771.4 326.6l-2.5 2.0M794.6 344.8l-2.4 0.2M775.2 353.3l2.6 1.7M764.1 390.2l2.3 1.1M995.0 368.6l-0.8 0.7M975.9 368.8l-3.2 1.5M971.7 369.2l0.5 2.3M983.9 335.8l-0.8 1.0M976.0 331.0l-3.2 1.2M972.7 355.9l-1.3 1.6M1035.8 300.5l-1.0 3.4M1028.1 305.6l2.3 0.5M1034.6 302.8l0.2 2.6M1004.5 381.4l-0.5 2.6M1023.5 391.6l1.4 0.6M1027.5 376.8l0.7 1.4M928.4 333.6l-0.5 1.4M923.3 338.8l-1.6 1.5M941.2 326.7l1.9 2.6M1008.4 352.1l-0.9 1.0M1021.4 330.3l0.1 2.1M1009.5 339.9l-1.5 1.4M1003.5 426.0l0.2 2.4M1010.7 405.4l-1.6 2.8M1029.5 327.3l-1.5 2.2M1030.4 338.9l-1.2 1.3M959.4 286.3l1.7 1.4M1003.9 257.4l-1.0 2.9M995.5 262.2l-0.6 1.0M873.8 308.4l-0.7 2.2M912.6 363.8l-0.8 2.9M944.5 267.9l0.1 3.4M968.6 334.2l-1.6 1.8M920.1 293.5l-1.9 2.3M994.5 440.3l-2.7 1.4M990.3 403.5l-0.4 3.5M928.1 365.3l-1.4 1.8M1010.9 448.1l-1.6 0.3M961.5 403.5l-1.8 1.2M903.3 497.4l-0.7 2.7M997.3 480.3l1.2 1.7M1016.7 488.3l2.1 0.2M817.3 425.2l2.0 0.1M792.2 425.9l2.0 2.4M736.2 401.0l-1.9 1.8M740.9 405.5l-1.9 2.8M737.9 394.8l-1.1 1.1M488.1 439.0l-2.4 1.6M517.2 464.8l-1.6 0.6M597.7 442.2l-0.9 3.0M495.7 418.7l2.6 0.3M661.3 413.4l-2.6 2.5M725.7 575.7l-1.3 3.0M696.4 478.3l-1.3 1.3" fill="none" stroke="#2a2a6a" stroke-width="1.0" stroke-linecap="round"/>
<path d="M541.0 298.8l-2.9 1.8M538.6 284.8l-1.0 1.6M543.3 317.9l0.0 2.6M552.3 264.8l-1.0 0.7M491.5 341.2l0.6 2.6M536.8 256.8l-0.5 2.9M499.1 279.0l-3.0 -1.2M555.7 258.3l-0.1 1.6M544.3 262.8l-2.8 -0.3M530.8 263.5l-2.1 1.0M590.7 296.7l-1.3 2.8M683.8 288.1l-1.5 0.5M733.6 258.1l0.9 2.0M746.0 296.4l-2.8 1.1M830.2 317.7l0.2 2.7M797.6 338.1l-2.0 2.6M797.4 320.5l-2.3 0.5M982.3 351.1l-2.0 1.8M1032.1 308.9l0.1 3.2M1035.0 296.0l-0.7 1.2M1010.2 399.0l-1.8 0.8M937.4 325.9l-2.0 2.6M1007.1 321.3l-2.2 2.1M1008.8 337.8l-0.0 1.3M905.1 384.3l-2.5 1.6M921.5 379.8l0.6 1.8M907.9 375.2l-0.8 2.4M974.5 397.0l-2.4 1.4M1007.8 419.4l-2.2 2.0M1023.1 373.6l-0.5 1.9M1015.7 343.9l-2.4 0.1M974.5 284.9l-0.9 2.4M932.7 287.8l2.8 1.4M947.5 286.8l-2.1 2.0M1011.1 269.1l-0.8 2.7M1023.2 267.8l-1.7 0.3M1009.9 462.6l-1.4 0.3M994.1 273.8l-0.2 1.3M1016.1 424.7l-1.2 1.4M1000.4 266.3l-0.5 2.3M1025.4 309.3l-0.9 1.2M876.5 420.3l1.3 1.1M901.2 503.9l0.3 3.3M903.7 479.3l-1.7 2.2M901.7 496.9l-0.8 1.2M901.0 480.6l1.3 1.7M929.0 481.4l-2.3 0.3M1000.1 479.7l-2.1 0.7M997.8 460.1l-1.3 1.6M817.0 430.5l-0.8 3.4M790.8 422.7l-3.0 1.0M804.1 427.2l-1.2 2.6M494.2 418.3l0.1 1.4M510.1 428.2l-1.3 1.6M568.3 427.8l1.6 2.5M620.8 535.6l-1.7 2.8M896.0 512.4l-2.8 2.2M958.8 610.1l-2.2 2.2M862.3 511.9l-0.7 2.4M680.4 495.1l0.5 0.9M677.0 484.6l-1.5 0.5" fill="none" stroke="#000008" stroke-width="0.8" stroke-linecap="round"/>
<path d="M1036.5 303.0 L1034.8 304.3 L1033.5 305.6 L1031.0 309.8 L1029.4 309.0 L1028.2 304.3 L1028.4 303.0 L1025.2 301.1 L1029.0 299.5 L1031.0 299.1 L1033.3 298.2 L1034.3 301.4Z" fill="#000005" stroke="#000005" stroke-width="0.8" stroke-linejoin="round"/>
<path d="M1020.2 386.0 L1017.6 387.7 L1018.5 389.5 L1016.0 391.4 L1014.7 388.9 L1013.9 388.5 L1012.0 386.0 L1012.3 384.4 L1013.8 383.5 L1016.0 381.9 L1018.3 383.6 L1020.0 384.1Z" fill="#000005" stroke="#000005" stroke-width="0.8" stroke-linejoin="round"/>
<path d="M988.9 355.0 L987.9 356.3 L986.5 359.9 L984.0 359.1 L981.5 359.0 L978.4 357.9 L978.8 355.0 L981.8 352.4 L982.4 350.5 L984.0 349.1 L985.3 351.3 L987.2 353.1Z" fill="#000005" stroke="#000005" stroke-width="0.8" stroke-linejoin="round"/>
<path d="M970.7 362.0 L970.9 363.8 L969.1 365.2 L968.0 364.2 L966.5 364.3 L964.8 363.0 L962.9 362.0 L963.7 361.0 L965.8 357.8 L968.0 358.9 L970.0 359.5 L970.3 359.5Z" fill="#000005" stroke="#000005" stroke-width="0.8" stroke-linejoin="round"/>
<path d="M924.6 352.0 L923.9 353.5 L923.4 353.6 L922.0 354.1 L921.4 353.8 L920.8 353.3 L920.1 352.0 L920.6 351.1 L921.2 349.3 L922.0 349.6 L922.9 349.2 L924.2 351.2Z" fill="#000005" stroke="#000005" stroke-width="0.8" stroke-linejoin="round"/>
<path d="M888.3 298.0 L888.7 300.3 L885.3 301.0 L884.0 302.7 L881.7 301.4 L881.8 300.1 L880.0 298.0 L882.2 296.1 L881.4 295.3 L884.0 295.7 L886.5 293.6 L886.6 295.8Z" fill="#000005" stroke="#000005" stroke-width="0.8" stroke-linejoin="round"/>
<path d="M896.5 302.0 L896.3 302.8 L894.1 303.5 L893.0 305.4 L892.0 304.8 L890.5 303.5 L890.4 302.0 L890.4 300.8 L891.8 300.4 L893.0 298.3 L894.0 299.4 L895.2 301.0Z" fill="#000005" stroke="#000005" stroke-width="0.8" stroke-linejoin="round"/>
<path d="M877.3 293.0 L878.4 293.7 L876.9 295.0 L876.0 295.5 L874.9 294.4 L873.7 294.3 L872.7 293.0 L873.5 291.7 L874.8 291.9 L876.0 290.9 L876.6 291.8 L878.6 292.3Z" fill="#000005" stroke="#000005" stroke-width="0.8" stroke-linejoin="round"/>
<path d="M1035.8 266.0 L1035.3 267.2 L1034.0 268.2 L1033.0 269.8 L1031.7 267.4 L1030.2 266.9 L1029.8 266.0 L1029.8 264.7 L1031.4 263.1 L1033.0 263.1 L1034.8 263.2 L1035.0 264.9Z" fill="#000005" stroke="#000005" stroke-width="0.8" stroke-linejoin="round"/>
<path d="M992.6 260.0 L991.5 261.4 L991.2 262.0 L990.0 261.5 L989.2 262.0 L988.4 260.7 L988.7 260.0 L988.8 259.3 L989.0 259.1 L990.0 258.6 L991.3 258.2 L991.7 259.1Z" fill="#000005" stroke="#000005" stroke-width="0.8" stroke-linejoin="round"/>
<path d="M967.4 344.0 L969.3 344.7 L967.4 346.9 L966.0 347.8 L964.2 347.1 L964.5 345.9 L962.1 344.0 L962.9 343.0 L964.8 342.6 L966.0 340.1 L967.6 341.8 L967.9 343.1Z" fill="#000005" stroke="#000005" stroke-width="0.8" stroke-linejoin="round"/>
<path d="M941.8 317.0 L941.6 318.0 L940.9 318.8 L940.0 318.9 L939.1 319.2 L937.7 318.0 L937.6 317.0 L938.9 316.2 L939.4 314.9 L940.0 314.8 L940.7 315.9 L942.1 316.0Z" fill="#000005" stroke="#000005" stroke-width="0.8" stroke-linejoin="round"/>
<path d="M855.3 375.0 L856.1 376.4 L855.4 377.1 L854.0 377.8 L853.4 376.4 L852.3 376.1 L852.7 375.0 L851.9 373.6 L853.1 372.6 L854.0 372.3 L854.7 373.5 L855.9 373.7Z" fill="#000005" stroke="#000005" stroke-width="0.8" stroke-linejoin="round"/>
<path d="M848.1 312.0 L847.6 312.4 L846.6 312.8 L846.0 313.0 L845.1 313.2 L844.2 312.7 L843.7 312.0 L845.2 311.2 L845.2 310.2 L846.0 310.9 L846.6 310.7 L847.8 311.1Z" fill="#000005" stroke="#000005" stroke-width="0.8" stroke-linejoin="round"/>
<path d="M1002.0 352.0 L1002.9 353.4 L1000.8 354.0 L1000.0 354.5 L999.0 353.8 L998.1 353.8 L998.4 352.0 L998.5 350.8 L998.8 348.8 L1000.0 350.0 L1000.8 349.6 L1003.0 351.0Z" fill="#000005" stroke="#000005" stroke-width="0.8" stroke-linejoin="round"/>
<path d="M900.8 368.0 L900.7 369.6 L898.7 370.5 L898.0 369.9 L896.9 370.6 L896.1 369.2 L895.8 368.0 L895.6 367.3 L896.5 367.0 L898.0 366.3 L899.3 365.9 L900.3 366.6Z" fill="#000005" stroke="#000005" stroke-width="0.8" stroke-linejoin="round"/>
<path d="M594.4 296.0 L592.5 297.1 L592.6 297.8 L591.0 298.3 L590.1 297.2 L588.4 297.1 L588.0 296.0 L589.3 295.3 L589.5 294.1 L591.0 294.7 L592.1 294.2 L593.4 295.2Z" fill="#000005" stroke="#000005" stroke-width="0.8" stroke-linejoin="round"/>
<path d="M655.8 291.0 L654.7 291.9 L653.8 292.0 L653.0 293.7 L651.6 292.9 L651.9 291.7 L651.4 291.0 L651.6 290.2 L652.2 288.8 L653.0 288.1 L653.8 290.0 L655.1 289.8Z" fill="#000005" stroke="#000005" stroke-width="0.8" stroke-linejoin="round"/>
<path d="M744.5 290.0 L744.2 290.6 L743.2 292.0 L742.0 292.1 L741.1 291.6 L740.4 291.1 L739.4 290.0 L740.2 289.1 L741.3 288.0 L742.0 287.4 L742.5 288.9 L744.1 289.1Z" fill="#000005" stroke="#000005" stroke-width="0.8" stroke-linejoin="round"/>
<path d="M517.8 283.0 L518.8 284.3 L517.0 285.8 L516.0 284.4 L514.6 285.5 L513.5 284.0 L513.3 283.0 L514.5 281.4 L514.5 280.2 L516.0 280.3 L517.0 281.2 L518.8 281.6Z" fill="#000005" stroke="#000005" stroke-width="0.8" stroke-linejoin="round"/>
<path d="M550.0 288.0 L548.7 289.5 L548.5 290.4 L547.0 289.6 L545.7 289.1 L545.3 288.6 L545.0 288.0 L545.3 286.8 L545.8 285.5 L547.0 286.3 L547.9 286.3 L548.4 286.6Z" fill="#000005" stroke="#000005" stroke-width="0.8" stroke-linejoin="round"/>
<path d="M505.5 302.0 L504.9 302.8 L503.8 304.1 L503.0 304.8 L502.4 303.2 L500.9 303.3 L501.7 302.0 L501.3 301.4 L502.0 300.8 L503.0 299.8 L504.3 299.7 L505.3 300.9Z" fill="#000005" stroke="#000005" stroke-width="0.8" stroke-linejoin="round"/>
<path d="M895.0 363.0 L903.0 377.0 L910.5 388.5 L920.0 402.0 L931.0 414.0 L946.0 419.0 L961.6 421.7 L982.0 429.4 L990.0 438.0 L997.4 444.7 L1012.7 449.8 L1025.0 447.0 L1037.0 442.0" fill="none" stroke="#20205a" stroke-width="0.8" stroke-linejoin="round" stroke-linecap="round" opacity="0.8"/>
<path d="M772.0 262.0 L777.0 280.0 L776.0 295.0 L772.0 312.0" fill="none" stroke="#30306a" stroke-width="0.6" stroke-linejoin="round" stroke-linecap="round" opacity="0.6"/>
<path d="M829.0 262.0 L833.0 290.0 L831.0 320.0 L834.0 355.0 L832.0 392.0" fill="none" stroke="#30306a" stroke-width="0.6" stroke-linejoin="round" stroke-linecap="round" opacity="0.55"/>
<path d="M966.0 262.0 L972.0 285.0 L967.0 310.0 L975.0 330.0" fill="none" stroke="#30306a" stroke-width="0.6" stroke-linejoin="round" stroke-linecap="round" opacity="0.6"/>
<path d="M1037.0 480.0 L1025.0 492.0 L1010.0 500.0" fill="none" stroke="#0a0a3a" stroke-width="1.2" stroke-linejoin="round" stroke-linecap="round" opacity="0.9"/>
<rect x="481" y="256" width="557.5" height="405" fill="none" stroke="#7fa4de" stroke-width="0.8"/>
<rect x="478.4" y="253.4" width="5.2" height="5.2" fill="#ffffff" stroke="#7fa4de" stroke-width="0.9"/>
<rect x="757.1999999999999" y="253.4" width="5.2" height="5.2" fill="#ffffff" stroke="#7fa4de" stroke-width="0.9"/>
<rect x="1035.9" y="253.4" width="5.2" height="5.2" fill="#ffffff" stroke="#7fa4de" stroke-width="0.9"/>
<rect x="478.4" y="455.9" width="5.2" height="5.2" fill="#ffffff" stroke="#7fa4de" stroke-width="0.9"/>
<rect x="1035.9" y="455.9" width="5.2" height="5.2" fill="#ffffff" stroke="#7fa4de" stroke-width="0.9"/>
<rect x="478.4" y="658.4" width="5.2" height="5.2" fill="#ffffff" stroke="#7fa4de" stroke-width="0.9"/>
<rect x="757.1999999999999" y="658.4" width="5.2" height="5.2" fill="#ffffff" stroke="#7fa4de" stroke-width="0.9"/>
<rect x="1035.9" y="658.4" width="5.2" height="5.2" fill="#ffffff" stroke="#7fa4de" stroke-width="0.9"/>
<rect x="639.5" y="202.5" width="241" height="30" fill="#484848" rx="3" stroke="#3c3c3c" stroke-width="1"/>
<rect x="645.5" y="209" width="1" height="1.5" fill="#3a3a3a"/>
<rect x="647.5" y="209" width="1" height="1.5" fill="#3a3a3a"/>
<rect x="645.5" y="212" width="1" height="1.5" fill="#3a3a3a"/>
<rect x="647.5" y="212" width="1" height="1.5" fill="#3a3a3a"/>
<rect x="645.5" y="215" width="1" height="1.5" fill="#3a3a3a"/>
<rect x="647.5" y="215" width="1" height="1.5" fill="#3a3a3a"/>
<rect x="645.5" y="218" width="1" height="1.5" fill="#3a3a3a"/>
<rect x="647.5" y="218" width="1" height="1.5" fill="#3a3a3a"/>
<rect x="645.5" y="221" width="1" height="1.5" fill="#3a3a3a"/>
<rect x="647.5" y="221" width="1" height="1.5" fill="#3a3a3a"/>
<rect x="645.5" y="224" width="1" height="1.5" fill="#3a3a3a"/>
<rect x="647.5" y="224" width="1" height="1.5" fill="#3a3a3a"/>
<rect x="655" y="206" width="73.8" height="22.8" fill="#4d4d4d" rx="2" stroke="#5c5c5c" stroke-width="0.9"/>
<rect x="732.5" y="206" width="62.5" height="22.8" fill="#4d4d4d" rx="2" stroke="#5c5c5c" stroke-width="0.9"/>
<path d="M668 212.5 h-3.2 q-1.6 0 -1.6 1.6 v7.6 q0 1.6 1.6 1.6 h7.6 q1.6 0 1.6 -1.6 v-3" fill="none" stroke="#dcdcdc" stroke-width="1.3"/>
<path d="M672.3 210.3 l0.9 2.4 l2.4 0.9 l-2.4 0.9 l-0.9 2.4 l-0.9 -2.4 l-2.4 -0.9 l2.4 -0.9Z" fill="#dcdcdc"/>
<circle cx="668" cy="219.5" r="1" fill="#dcdcdc"/>
<text x="683.3" y="222.2" font-size="11.5" fill="#e8e8e8" textLength="35.5" lengthAdjust="spacingAndGlyphs">Recolor</text>
<text x="743.3" y="222.2" font-size="11.5" fill="#e8e8e8" textLength="41" lengthAdjust="spacingAndGlyphs">Ungroup</text>
<rect x="804" y="211.5" width="8" height="8" fill="#dcdcdc"/>
<rect x="808.3" y="215.8" width="8.5" height="8.5" fill="#484848" stroke="#dcdcdc" stroke-width="1.2"/>
<path d="M812.5 218 v4.2 M810.4 220.1 h4.2" fill="none" stroke="#dcdcdc" stroke-width="1"/>
<rect x="830.5" y="216.5" width="11" height="8" fill="#dcdcdc" rx="1"/>
<path d="M832.8 216.5 v-2.2 a3.2 3.2 0 0 1 6.4 0 v2.2" fill="none" stroke="#dcdcdc" stroke-width="1.5"/>
<circle cx="836" cy="220.3" r="1.1" fill="#484848"/>
<circle cx="857" cy="217.3" r="1.3" fill="#dcdcdc"/>
<circle cx="862.5" cy="217.3" r="1.3" fill="#dcdcdc"/>
<circle cx="868" cy="217.3" r="1.3" fill="#dcdcdc"/>
<rect x="1100.8" y="183" width="9.2" height="522" fill="#515151"/>
<rect x="1101" y="179" width="194" height="3.2" fill="#5c5c5c"/>
<rect x="1295" y="179" width="36" height="3.2" fill="#484848"/>
<rect x="1110" y="183.5" width="221" height="521.5" fill="#4e4e4e"/>
<rect x="1110" y="186" width="221" height="23.5" fill="#3e3e3e"/>
<rect x="1110" y="186" width="65" height="23.5" fill="#4e4e4e"/>
<text x="1118" y="200.7" font-size="10.5" fill="#ececec" font-weight="bold" textLength="50" lengthAdjust="spacingAndGlyphs">Image Trace</text>
<text x="1317.5" y="201.5" font-size="12" fill="#d0d0d0" textLength="8.5" lengthAdjust="spacingAndGlyphs">»</text>
<line x1="1110" y1="183.5" x2="1110" y2="705" stroke="#444444" stroke-width="1.2"/>
<line x1="1110" y1="184" x2="1331" y2="184" stroke="#444" stroke-width="1"/>
<circle cx="1154.8" cy="229" r="3.6" fill="#666"/>
<circle cx="1158.6" cy="226.6" r="3.6" fill="#6c6c6c"/>
<circle cx="1158.4" cy="230.6" r="3.6" fill="#626262"/>
<rect x="1176" y="224.2" width="12.6" height="8.8" fill="#6a6a6a" rx="1.5"/>
<circle cx="1182.3" cy="228.8" r="2.5" fill="#4e4e4e"/>
<rect x="1179.6" y="222.8" width="5" height="2" fill="#6a6a6a"/>
<rect x="1201.5" y="222" width="12.5" height="12.5" fill="none" stroke="#686868" stroke-width="1.1"/>
<line x1="1201.5" y1="226.5" x2="1214" y2="226.5" stroke="#686868" stroke-width="1"/>
<line x1="1206.5" y1="222" x2="1206.5" y2="234.5" stroke="#686868" stroke-width="1"/>
<rect x="1207" y="227" width="7" height="7.5" fill="#5a5a5a"/>
<rect x="1226.5" y="222" width="12.5" height="12.5" fill="url(#tg3)" stroke="#686868" stroke-width="0.8"/>
<rect x="1252" y="222" width="12.5" height="12.5" fill="none" stroke="#686868" stroke-width="1"/>
<rect x="1252" y="222" width="6" height="12.5" fill="#6a6a6a"/>
<path d="M1277.5 222.5 h7.5 l4.5 4.5 v4.5 l-3.5 3.5 h-5 l-3.5 -4Z" fill="none" stroke="#686868" stroke-width="1.1"/>
<line x1="1115" y1="241.5" x2="1327" y2="241.5" stroke="#484848" stroke-width="1"/>
<text x="1129.5" y="262.8" font-size="10.5" fill="#6c6c6c" textLength="25.5" lengthAdjust="spacingAndGlyphs">Preset:</text>
<rect x="1159.5" y="251.5" width="141.8" height="15" fill="#565656" rx="1.2"/>
<text x="1164.5" y="262.8" font-size="10.5" fill="#717171" textLength="35" lengthAdjust="spacingAndGlyphs">[Default]</text>
<path d="M1291 257.5 L1294 260.5 L1297 257.5" fill="none" stroke="#6c6c6c" stroke-width="1.1"/>
<text x="1135" y="287.6" font-size="10.5" fill="#6c6c6c" textLength="19.5" lengthAdjust="spacingAndGlyphs">View:</text>
<rect x="1159.5" y="276.3" width="141.8" height="15" fill="#565656" rx="1.2"/>
<text x="1164.5" y="287.6" font-size="10.5" fill="#717171" textLength="53" lengthAdjust="spacingAndGlyphs">Tracing Result</text>
<path d="M1291 282.3 L1294 285.3 L1297 282.3" fill="none" stroke="#6c6c6c" stroke-width="1.1"/>
<text x="1132.5" y="312.0" font-size="10.5" fill="#6c6c6c" textLength="22" lengthAdjust="spacingAndGlyphs">Mode:</text>
<rect x="1159.5" y="300.7" width="141.8" height="15" fill="#565656" rx="1.2"/>
<text x="1164.5" y="312.0" font-size="10.5" fill="#717171" textLength="62" lengthAdjust="spacingAndGlyphs">Black and White</text>
<path d="M1291 306.7 L1294 309.7 L1297 306.7" fill="none" stroke="#6c6c6c" stroke-width="1.1"/>
<text x="1127" y="334.6" font-size="10.5" fill="#6c6c6c" textLength="28" lengthAdjust="spacingAndGlyphs">Palette:</text>
<rect x="1159.5" y="323.3" width="141.8" height="15" fill="#565656" rx="1.2"/>
<text x="1164.5" y="334.6" font-size="10.5" fill="#717171" textLength="28" lengthAdjust="spacingAndGlyphs">Limited</text>
<path d="M1291 329.3 L1294 332.3 L1297 329.3" fill="none" stroke="#6c6c6c" stroke-width="1.1"/>
<line x1="1313" y1="255.5" x2="1322" y2="255.5" stroke="#5e5e5e" stroke-width="1"/>
<line x1="1313" y1="258.5" x2="1322" y2="258.5" stroke="#5e5e5e" stroke-width="1"/>
<line x1="1313" y1="261.5" x2="1322" y2="261.5" stroke="#5e5e5e" stroke-width="1"/>
<path d="M1310 283.8 q5.5 -5.5 11 0 q-5.5 5.5 -11 0Z" fill="none" stroke="#6c6c6c" stroke-width="1"/>
<circle cx="1315.5" cy="283.8" r="1.7" fill="#6c6c6c"/>
<text x="1115.5" y="356.3" font-size="10.5" fill="#6c6c6c" textLength="39" lengthAdjust="spacingAndGlyphs">Threshold:</text>
<line x1="1160" y1="352.5" x2="1288" y2="352.5" stroke="#626262" stroke-width="1.2"/>
<circle cx="1223.8" cy="352.5" r="4.6" fill="#4e4e4e" stroke="#8c8c8c" stroke-width="1.3"/>
<rect x="1295.2" y="346.5" width="28.3" height="12" fill="#444444" rx="1"/>
<text x="1298.5" y="356.3" font-size="10.5" fill="#dadada" textLength="15.5" lengthAdjust="spacingAndGlyphs">128</text>
<text x="1163.5" y="371.3" font-size="9.5" fill="#656565">Less</text>
<text x="1289" y="371.3" font-size="9.5" fill="#656565" text-anchor="end">More</text>
<path d="M1117.5 383.5 h10 l-5 5.5Z" fill="#d6d6d6"/>
<text x="1131.5" y="390" font-size="10.5" fill="#c2c2c2" textLength="40.5" lengthAdjust="spacingAndGlyphs">Advanced</text>
<line x1="1176" y1="386.5" x2="1326" y2="386.5" stroke="#494949" stroke-width="1"/>
<text x="1132" y="411.8" font-size="10.5" fill="#6c6c6c" textLength="22.5" lengthAdjust="spacingAndGlyphs">Paths:</text>
<line x1="1160" y1="408" x2="1288" y2="408" stroke="#626262" stroke-width="1.2"/>
<circle cx="1222.8" cy="408" r="4.6" fill="#4e4e4e" stroke="#8c8c8c" stroke-width="1.3"/>
<rect x="1295.2" y="402" width="28.3" height="12" fill="#444444" rx="1"/>
<text x="1298.5" y="411.8" font-size="10.5" fill="#dadada" textLength="23.5" lengthAdjust="spacingAndGlyphs">100%</text>
<text x="1159" y="426.8" font-size="9.5" fill="#656565">Low</text>
<text x="1288.5" y="426.8" font-size="9.5" fill="#656565" text-anchor="end">High</text>
<text x="1123" y="445.5" font-size="10.5" fill="#6c6c6c" textLength="31.5" lengthAdjust="spacingAndGlyphs">Corners:</text>
<line x1="1160" y1="441.7" x2="1288" y2="441.7" stroke="#626262" stroke-width="1.2"/>
<circle cx="1254.4" cy="441.7" r="4.6" fill="#4e4e4e" stroke="#8c8c8c" stroke-width="1.3"/>
<rect x="1295.2" y="435.7" width="28.3" height="12" fill="#444444" rx="1"/>
<text x="1298.5" y="445.5" font-size="10.5" fill="#dadada" textLength="23.5" lengthAdjust="spacingAndGlyphs">100%</text>
<text x="1159" y="460.5" font-size="9.5" fill="#656565">Less</text>
<text x="1288.5" y="460.5" font-size="9.5" fill="#656565" text-anchor="end">More</text>
<text x="1132" y="478.1" font-size="10.5" fill="#6c6c6c" textLength="22.5" lengthAdjust="spacingAndGlyphs">Noise:</text>
<line x1="1160" y1="474.3" x2="1288" y2="474.3" stroke="#626262" stroke-width="1.2"/>
<circle cx="1192.7" cy="474.3" r="4.6" fill="#4e4e4e" stroke="#8c8c8c" stroke-width="1.3"/>
<rect x="1295.2" y="468.3" width="28.3" height="12" fill="#444444" rx="1"/>
<text x="1298.5" y="478.1" font-size="10.5" fill="#dadada" textLength="17" lengthAdjust="spacingAndGlyphs">1 px</text>
<text x="1159" y="493.1" font-size="9.5" fill="#656565">1</text>
<text x="1288.5" y="493.1" font-size="9.5" fill="#656565" text-anchor="end">100</text>
<rect x="1128.8" y="500" width="9.6" height="9.6" fill="none" rx="1" stroke="#6a6a6a" stroke-width="1"/>
<text x="1143.5" y="508.8" font-size="10.5" fill="#6c6c6c" textLength="30" lengthAdjust="spacingAndGlyphs">Simplify</text>
<text x="1122" y="528.8" font-size="10.5" fill="#6c6c6c" textLength="32.5" lengthAdjust="spacingAndGlyphs">Anchors:</text>
<line x1="1160" y1="525" x2="1288" y2="525" stroke="#626262" stroke-width="1.2"/>
<circle cx="1271.8" cy="525" r="4.6" fill="#4e4e4e" stroke="#8c8c8c" stroke-width="1.3"/>
<rect x="1295.2" y="519" width="28.3" height="12" fill="#444444" rx="1"/>
<text x="1298.5" y="528.8" font-size="10.5" fill="#dadada" textLength="18.5" lengthAdjust="spacingAndGlyphs">90%</text>
<text x="1159" y="543.8" font-size="9.5" fill="#656565">Less</text>
<text x="1288.5" y="543.8" font-size="9.5" fill="#656565" text-anchor="end">More</text>
<text x="1124" y="562.6" font-size="10.5" fill="#6c6c6c" textLength="31" lengthAdjust="spacingAndGlyphs">Method:</text>
<rect x="1159.4" y="549.5" width="41.6" height="18.5" fill="none" rx="1.5" stroke="#626262" stroke-width="0.9"/>
<rect x="1162" y="552" width="17.5" height="13.5" fill="#646464" rx="1.5"/>
<rect x="1183" y="552" width="16" height="13.5" fill="#5a5a5a" rx="1.5"/>
<circle cx="1168.5" cy="558.8" r="3.3" fill="none" stroke="#8a8a8a" stroke-width="1"/>
<circle cx="1173" cy="558.8" r="3.3" fill="none" stroke="#8a8a8a" stroke-width="1"/>
<rect x="1186" y="555" width="6" height="7.5" fill="#868686"/>
<circle cx="1193.6" cy="558.8" r="3.3" fill="#7a7a7a"/>
<text x="1128" y="584.4" font-size="10.5" fill="#6c6c6c" textLength="27.5" lengthAdjust="spacingAndGlyphs">Create:</text>
<rect x="1160" y="575.5" width="10" height="10" fill="#7a7a7a" rx="1"/>
<path d="M1162.2 580.6 l2.3 2.4 l3.8 -5" fill="none" stroke="#3c3c3c" stroke-width="1.5"/>
<text x="1174.6" y="584.4" font-size="10.5" fill="#6c6c6c" textLength="15" lengthAdjust="spacingAndGlyphs">Fills</text>
<rect x="1194.5" y="575.8" width="9.6" height="9.6" fill="none" rx="1" stroke="#6a6a6a" stroke-width="1"/>
<text x="1209" y="584.4" font-size="10.5" fill="#6c6c6c" textLength="28.5" lengthAdjust="spacingAndGlyphs">Strokes</text>
<text x="1128.5" y="605" font-size="10.5" fill="#6c6c6c" textLength="27" lengthAdjust="spacingAndGlyphs">Stroke:</text>
<rect x="1159.4" y="593.8" width="59.6" height="15" fill="#555" rx="1"/>
<path d="M1163 599.3 l2.6 -2.6 l2.6 2.6 M1163 603.3 l2.6 2.6 l2.6 -2.6" fill="none" stroke="#6a6a6a" stroke-width="1"/>
<line x1="1172.5" y1="594" x2="1172.5" y2="608.6" stroke="#4a4a4a" stroke-width="1"/>
<text x="1175.5" y="605" font-size="10.5" fill="#6c6c6c" textLength="23" lengthAdjust="spacingAndGlyphs">10 px</text>
<text x="1123.5" y="625" font-size="10.5" fill="#6c6c6c" textLength="32" lengthAdjust="spacingAndGlyphs">Options:</text>
<rect x="1160" y="616" width="10" height="10" fill="#7a7a7a" rx="1"/>
<path d="M1162.2 621.1 l2.3 2.4 l3.8 -5" fill="none" stroke="#3c3c3c" stroke-width="1.5"/>
<text x="1174.6" y="625" font-size="10.5" fill="#6c6c6c" textLength="81.5" lengthAdjust="spacingAndGlyphs">Snap Curves To Lines</text>
<rect x="1160" y="637.4" width="9.6" height="9.6" fill="none" rx="1" stroke="#6a6a6a" stroke-width="1"/>
<text x="1174.6" y="646" font-size="10.5" fill="#6c6c6c" textLength="46.5" lengthAdjust="spacingAndGlyphs">Ignore Color</text>
<rect x="1231" y="635.7" width="29" height="14.5" fill="#a3a3a3" stroke="#c0c0c0" stroke-width="0.8"/>
<path d="M1270.5 650 l1 -3.2 l7 -7 l2 2 l-7 7Z M1278 638.5 l3.6 3.6 M1280.5 638.6 l2.6 -2.6" fill="none" stroke="#7a7a7a" stroke-width="1.2"/>
<line x1="1115" y1="659" x2="1327" y2="659" stroke="#484848" stroke-width="1"/>
<circle cx="1121.7" cy="680.3" r="5.3" fill="none" stroke="#b4b4b4" stroke-width="1.1"/>
<line x1="1121.7" y1="679.4" x2="1121.7" y2="683.5" stroke="#b4b4b4" stroke-width="1.3"/>
<circle cx="1121.7" cy="677.3" r="0.8" fill="#b4b4b4"/>
<text x="1137" y="676" font-size="10" fill="#6a6a6a" textLength="21.5" lengthAdjust="spacingAndGlyphs">Paths:</text>
<text x="1174" y="676" font-size="10" fill="#6a6a6a">0</text>
<text x="1246.4" y="676" font-size="10" fill="#6a6a6a" textLength="26" lengthAdjust="spacingAndGlyphs">Colors:</text>
<text x="1278" y="676" font-size="10" fill="#6a6a6a">0</text>
<text x="1137" y="694" font-size="10" fill="#6a6a6a" textLength="30.5" lengthAdjust="spacingAndGlyphs">Anchors:</text>
<text x="1174" y="694" font-size="10" fill="#6a6a6a">0</text>
<rect x="1100.8" y="705" width="230.5" height="15" fill="#444"/>
<rect x="1113" y="711" width="3.5" height="3.5" fill="none" stroke="#555" stroke-width="0.7"/>
<text x="1120" y="718.5" font-size="9.5" fill="#5a5a5a" textLength="28" lengthAdjust="spacingAndGlyphs">Preview</text>
<rect x="1271" y="709" width="56" height="11" fill="#4a4a4a" rx="2"/>
<text x="1289" y="718.5" font-size="9.5" fill="#5e5e5e" textLength="19" lengthAdjust="spacingAndGlyphs">Trace</text>
<rect x="1331.5" y="186.8" width="35.5" height="420" fill="#4f4f4f"/>
<line x1="1331.8" y1="186.8" x2="1331.8" y2="606" stroke="#3e3e3e" stroke-width="1.2"/>
<line x1="1366.6" y1="186.8" x2="1366.6" y2="720" stroke="#3e3e3e" stroke-width="1.4"/>
<rect x="1331.5" y="606" width="35.5" height="114" fill="#4a4a4a"/>
<line x1="1331.5" y1="606.3" x2="1367" y2="606.3" stroke="#3e3e3e" stroke-width="1.2"/>
<rect x="1343.5" y="189.7" width="0.8" height="1.8" fill="#3f3f3f"/>
<rect x="1345.1" y="189.7" width="0.8" height="1.8" fill="#3f3f3f"/>
<rect x="1346.7" y="189.7" width="0.8" height="1.8" fill="#3f3f3f"/>
<rect x="1348.3" y="189.7" width="0.8" height="1.8" fill="#3f3f3f"/>
<rect x="1349.9" y="189.7" width="0.8" height="1.8" fill="#3f3f3f"/>
<rect x="1351.5" y="189.7" width="0.8" height="1.8" fill="#3f3f3f"/>
<rect x="1353.1" y="189.7" width="0.8" height="1.8" fill="#3f3f3f"/>
<rect x="1354.7" y="189.7" width="0.8" height="1.8" fill="#3f3f3f"/>
<path d="M1342.5 208.5 q0 -5.5 7.5 -5.5 q7.8 0 7.8 4.6 q0 3 -3.6 3 q-2.2 0 -1.6 1.8 q0.5 2.2 -3 2.2 q-7.1 0 -7.1 -6.1Z" fill="#dcdcdc"/>
<circle cx="1345.8" cy="207.0" r="1.2" fill="#4f4f4f"/>
<circle cx="1349.2" cy="204.9" r="1.2" fill="#4f4f4f"/>
<circle cx="1353.4" cy="205.9" r="1.2" fill="#4f4f4f"/>
<circle cx="1346.6" cy="210.7" r="1.2" fill="#4f4f4f"/>
<path d="M1343.5 239.5 v-14 q11.5 2.2 13.5 14Z" fill="#dcdcdc"/>
<path d="M1343.5 239.5 v-8 q6 1.5 7.5 8Z" fill="#8a8a8a"/>
<line x1="1332.5" y1="245.5" x2="1366" y2="245.5" stroke="#3e3e3e" stroke-width="1.2"/>
<rect x="1343.5" y="250.2" width="0.8" height="1.8" fill="#3f3f3f"/>
<rect x="1345.1" y="250.2" width="0.8" height="1.8" fill="#3f3f3f"/>
<rect x="1346.7" y="250.2" width="0.8" height="1.8" fill="#3f3f3f"/>
<rect x="1348.3" y="250.2" width="0.8" height="1.8" fill="#3f3f3f"/>
<rect x="1349.9" y="250.2" width="0.8" height="1.8" fill="#3f3f3f"/>
<rect x="1351.5" y="250.2" width="0.8" height="1.8" fill="#3f3f3f"/>
<rect x="1353.1" y="250.2" width="0.8" height="1.8" fill="#3f3f3f"/>
<rect x="1354.7" y="250.2" width="0.8" height="1.8" fill="#3f3f3f"/>
<rect x="1342.7" y="261.5" width="14.6" height="11.6" fill="#dcdcdc" rx="0.8"/>
<rect x="1344.1" y="264.2" width="3" height="3" fill="#777"/>
<rect x="1344.1" y="268.59999999999997" width="3" height="3" fill="#777"/>
<rect x="1348.5" y="264.2" width="3" height="3" fill="#777"/>
<rect x="1348.5" y="268.59999999999997" width="3" height="3" fill="#777"/>
<rect x="1352.8999999999999" y="264.2" width="3" height="3" fill="#777"/>
<rect x="1352.8999999999999" y="268.59999999999997" width="3" height="3" fill="#777"/>
<path d="M1346 299.5 h8 l0.8 -8 h-9.6Z" fill="#dcdcdc"/>
<path d="M1347.2 291 l-1.8 -5.5 M1350 291 v-8.5 M1352.8 291 l2.6 -5.2" fill="none" stroke="#dcdcdc" stroke-width="1.5"/>
<circle cx="1350" cy="283" r="1.4" fill="#dcdcdc"/>
<circle cx="1355.6" cy="285.4" r="1.5" fill="#dcdcdc"/>
<circle cx="1345.2" cy="285" r="1.2" fill="#dcdcdc"/>
<circle cx="1350" cy="311.2" r="3.4" fill="#dcdcdc"/>
<circle cx="1346.4" cy="316.4" r="3.4" fill="#dcdcdc"/>
<circle cx="1353.6" cy="316.4" r="3.4" fill="#dcdcdc"/>
<path d="M1350 315 q0.3 5 -3.4 7.8 h6.8 q-3.7 -2.8 -3.4 -7.8Z" fill="#dcdcdc"/>
<line x1="1332.5" y1="330" x2="1366" y2="330" stroke="#3e3e3e" stroke-width="1.2"/>
<rect x="1343.5" y="335.0" width="0.8" height="1.8" fill="#3f3f3f"/>
<rect x="1345.1" y="335.0" width="0.8" height="1.8" fill="#3f3f3f"/>
<rect x="1346.7" y="335.0" width="0.8" height="1.8" fill="#3f3f3f"/>
<rect x="1348.3" y="335.0" width="0.8" height="1.8" fill="#3f3f3f"/>
<rect x="1349.9" y="335.0" width="0.8" height="1.8" fill="#3f3f3f"/>
<rect x="1351.5" y="335.0" width="0.8" height="1.8" fill="#3f3f3f"/>
<rect x="1353.1" y="335.0" width="0.8" height="1.8" fill="#3f3f3f"/>
<rect x="1354.7" y="335.0" width="0.8" height="1.8" fill="#3f3f3f"/>
<line x1="1342.7" y1="346.5" x2="1357.3" y2="346.5" stroke="#dcdcdc" stroke-width="1.9"/>
<line x1="1342.7" y1="351" x2="1357.3" y2="351" stroke="#dcdcdc" stroke-width="1.9"/>
<line x1="1342.7" y1="355.5" x2="1357.3" y2="355.5" stroke="#dcdcdc" stroke-width="1.9"/>
<rect x="1343" y="371.3" width="14.2" height="10.6" fill="url(#tg4)" stroke="#d6d6d6" stroke-width="0.9"/>
<circle cx="1348.4" cy="400.2" r="5" fill="#e2e2e2"/>
<circle cx="1351.8" cy="403.6" r="5" fill="#9d9d9d" opacity="0.9"/>
<line x1="1332.5" y1="416" x2="1366" y2="416" stroke="#3e3e3e" stroke-width="1.2"/>
<rect x="1343.5" y="420.7" width="0.8" height="1.8" fill="#3f3f3f"/>
<rect x="1345.1" y="420.7" width="0.8" height="1.8" fill="#3f3f3f"/>
<rect x="1346.7" y="420.7" width="0.8" height="1.8" fill="#3f3f3f"/>
<rect x="1348.3" y="420.7" width="0.8" height="1.8" fill="#3f3f3f"/>
<rect x="1349.9" y="420.7" width="0.8" height="1.8" fill="#3f3f3f"/>
<rect x="1351.5" y="420.7" width="0.8" height="1.8" fill="#3f3f3f"/>
<rect x="1353.1" y="420.7" width="0.8" height="1.8" fill="#3f3f3f"/>
<rect x="1354.7" y="420.7" width="0.8" height="1.8" fill="#3f3f3f"/>
<circle cx="1350" cy="436" r="4.6" fill="#dcdcdc"/>
<line x1="1355.6" y1="436.0" x2="1357.2" y2="436.0" stroke="#dcdcdc" stroke-width="1.1"/>
<line x1="1354.849742261193" y1="438.8" x2="1356.2353829072479" y2="439.6" stroke="#dcdcdc" stroke-width="1.1"/>
<line x1="1352.8" y1="440.84974226119283" x2="1353.6" y2="442.235382907248" stroke="#dcdcdc" stroke-width="1.1"/>
<line x1="1350.0" y1="441.6" x2="1350.0" y2="443.2" stroke="#dcdcdc" stroke-width="1.1"/>
<line x1="1347.2" y1="440.84974226119283" x2="1346.4" y2="442.235382907248" stroke="#dcdcdc" stroke-width="1.1"/>
<line x1="1345.150257738807" y1="438.8" x2="1343.7646170927521" y2="439.6" stroke="#dcdcdc" stroke-width="1.1"/>
<line x1="1344.4" y1="436.0" x2="1342.8" y2="436.0" stroke="#dcdcdc" stroke-width="1.1"/>
<line x1="1345.150257738807" y1="433.2" x2="1343.7646170927521" y2="432.4" stroke="#dcdcdc" stroke-width="1.1"/>
<line x1="1347.2" y1="431.15025773880717" x2="1346.4" y2="429.764617092752" stroke="#dcdcdc" stroke-width="1.1"/>
<line x1="1350.0" y1="430.4" x2="1350.0" y2="428.8" stroke="#dcdcdc" stroke-width="1.1"/>
<line x1="1352.8" y1="431.15025773880717" x2="1353.6" y2="429.764617092752" stroke="#dcdcdc" stroke-width="1.1"/>
<line x1="1354.849742261193" y1="433.2" x2="1356.2353829072479" y2="432.4" stroke="#dcdcdc" stroke-width="1.1"/>
<rect x="1347" y="455" width="10" height="9" fill="none" stroke="#dcdcdc" stroke-width="1.1"/>
<rect x="1343" y="461.5" width="7" height="6.5" fill="#4f4f4f" stroke="#dcdcdc" stroke-width="1.1"/>
<circle cx="1346.5" cy="464.8" r="1.4" fill="#dcdcdc"/>
<line x1="1332.5" y1="478" x2="1366" y2="478" stroke="#3e3e3e" stroke-width="1.2"/>
<rect x="1343.5" y="482.7" width="0.8" height="1.8" fill="#3f3f3f"/>
<rect x="1345.1" y="482.7" width="0.8" height="1.8" fill="#3f3f3f"/>
<rect x="1346.7" y="482.7" width="0.8" height="1.8" fill="#3f3f3f"/>
<rect x="1348.3" y="482.7" width="0.8" height="1.8" fill="#3f3f3f"/>
<rect x="1349.9" y="482.7" width="0.8" height="1.8" fill="#3f3f3f"/>
<rect x="1351.5" y="482.7" width="0.8" height="1.8" fill="#3f3f3f"/>
<rect x="1353.1" y="482.7" width="0.8" height="1.8" fill="#3f3f3f"/>
<rect x="1354.7" y="482.7" width="0.8" height="1.8" fill="#3f3f3f"/>
<rect x="1337.7" y="487" width="23.6" height="19" fill="#2f2f2f" rx="2"/>
<circle cx="1349.7" cy="496.3" r="5.6" fill="#dcdcdc"/>
<path d="M1354 489.5 a8 8 0 0 1 2.6 9.5 M1356.6 499 l-2.6 -0.4 l2.9 -2.2Z M1343.2 501 a8 8 0 0 0 6 3.4" fill="none" stroke="#dcdcdc" stroke-width="1.1"/>
<circle cx="1351.2" cy="496.8" r="1.8" fill="#2f2f2f"/>
<line x1="1332.5" y1="514" x2="1366" y2="514" stroke="#3e3e3e" stroke-width="1.2"/>
<rect x="1343.5" y="518.7" width="0.8" height="1.8" fill="#3f3f3f"/>
<rect x="1345.1" y="518.7" width="0.8" height="1.8" fill="#3f3f3f"/>
<rect x="1346.7" y="518.7" width="0.8" height="1.8" fill="#3f3f3f"/>
<rect x="1348.3" y="518.7" width="0.8" height="1.8" fill="#3f3f3f"/>
<rect x="1349.9" y="518.7" width="0.8" height="1.8" fill="#3f3f3f"/>
<rect x="1351.5" y="518.7" width="0.8" height="1.8" fill="#3f3f3f"/>
<rect x="1353.1" y="518.7" width="0.8" height="1.8" fill="#3f3f3f"/>
<rect x="1354.7" y="518.7" width="0.8" height="1.8" fill="#3f3f3f"/>
<rect x="1343.5" y="525" width="7.5" height="7.5" fill="#dcdcdc"/>
<rect x="1348.8" y="530.4" width="7.5" height="7.5" fill="#dcdcdc"/>
<rect x="1348.8" y="530.4" width="2.2" height="2.1" fill="#4f4f4f"/>
<line x1="1343.7" y1="549" x2="1343.7" y2="564" stroke="#dcdcdc" stroke-width="1.4"/>
<rect x="1345.5" y="551.3" width="7" height="4.4" fill="#dcdcdc"/>
<rect x="1345.5" y="557.8" width="11" height="4.4" fill="#dcdcdc"/>
<line x1="1332.5" y1="574.8" x2="1366" y2="574.8" stroke="#3e3e3e" stroke-width="1.2"/>
<rect x="1343.5" y="579.5" width="0.8" height="1.8" fill="#3f3f3f"/>
<rect x="1345.1" y="579.5" width="0.8" height="1.8" fill="#3f3f3f"/>
<rect x="1346.7" y="579.5" width="0.8" height="1.8" fill="#3f3f3f"/>
<rect x="1348.3" y="579.5" width="0.8" height="1.8" fill="#3f3f3f"/>
<rect x="1349.9" y="579.5" width="0.8" height="1.8" fill="#3f3f3f"/>
<rect x="1351.5" y="579.5" width="0.8" height="1.8" fill="#3f3f3f"/>
<rect x="1353.1" y="579.5" width="0.8" height="1.8" fill="#3f3f3f"/>
<rect x="1354.7" y="579.5" width="0.8" height="1.8" fill="#3f3f3f"/>
<rect x="1345.5" y="586.2" width="9.5" height="10" fill="none" stroke="#dcdcdc" stroke-width="1.1"/>
<rect x="1344.2" y="584.9000000000001" width="2.6" height="2.6" fill="#dcdcdc"/>
<rect x="1353.7" y="584.9000000000001" width="2.6" height="2.6" fill="#dcdcdc"/>
<rect x="1353.7" y="594.9000000000001" width="2.6" height="2.6" fill="#dcdcdc"/>
<rect x="1344.2" y="594.9000000000001" width="2.6" height="2.6" fill="#dcdcdc"/>
<rect x="1348.9" y="584.9000000000001" width="2.6" height="2.6" fill="#dcdcdc"/>
<rect x="1348.9" y="594.9000000000001" width="2.6" height="2.6" fill="#dcdcdc"/>
<rect x="1344.2" y="589.9000000000001" width="2.6" height="2.6" fill="#dcdcdc"/>
<rect x="1353.7" y="589.9000000000001" width="2.6" height="2.6" fill="#dcdcdc"/>
<rect x="1367.3" y="186.8" width="200.2" height="518" fill="#535353"/>
<rect x="1367.3" y="186.8" width="200.2" height="22.8" fill="#3e3e3e"/>
<rect x="1430" y="186.8" width="39.5" height="22.8" fill="#535353"/>
<line x1="1398.8" y1="187" x2="1398.8" y2="209.6" stroke="#363636" stroke-width="1"/>
<line x1="1430" y1="187" x2="1430" y2="209.6" stroke="#363636" stroke-width="1"/>
<line x1="1469.5" y1="187" x2="1469.5" y2="209.6" stroke="#363636" stroke-width="1"/>
<line x1="1501.3" y1="187" x2="1501.3" y2="209.6" stroke="#363636" stroke-width="1"/>
<line x1="1533.8" y1="187" x2="1533.8" y2="209.6" stroke="#363636" stroke-width="1"/>
<text x="1375.8" y="201.3" font-size="10.5" fill="#a9a9a9" font-weight="bold" textLength="22" lengthAdjust="spacingAndGlyphs">Prope</text>
<text x="1406.8" y="201.3" font-size="10.5" fill="#a9a9a9" font-weight="bold" textLength="22" lengthAdjust="spacingAndGlyphs">Librai</text>
<text x="1437" y="201.3" font-size="10.5" fill="#f2f2f2" font-weight="bold" textLength="25.5" lengthAdjust="spacingAndGlyphs">Layers</text>
<text x="1478" y="201.3" font-size="10.5" fill="#a9a9a9" font-weight="bold" textLength="21.5" lengthAdjust="spacingAndGlyphs">Asset</text>
<text x="1508.3" y="201.3" font-size="10.5" fill="#a9a9a9" font-weight="bold" textLength="24" lengthAdjust="spacingAndGlyphs">Artbo</text>
<line x1="1553.8" y1="195.3" x2="1562.5" y2="195.3" stroke="#c6c6c6" stroke-width="1"/>
<line x1="1553.8" y1="198.3" x2="1562.5" y2="198.3" stroke="#c6c6c6" stroke-width="1"/>
<line x1="1553.8" y1="201.3" x2="1562.5" y2="201.3" stroke="#c6c6c6" stroke-width="1"/>
<rect x="1370.5" y="213.5" width="193" height="491" fill="none" stroke="#4b4b4b" stroke-width="1"/>
<rect x="1377.5" y="220" width="160" height="18.8" fill="#3b3b3b" rx="1.5" stroke="#606060" stroke-width="0.8"/>
<circle cx="1386.4" cy="228" r="3.2" fill="none" stroke="#dedede" stroke-width="1.4"/>
<line x1="1388.8" y1="230.6" x2="1392.6" y2="234.4" stroke="#dedede" stroke-width="1.6"/>
<text x="1401.3" y="233" font-size="10.5" fill="#666" textLength="45.7" lengthAdjust="spacingAndGlyphs">Search All</text>
<path d="M1546.8 223 h12 l-4.6 5.6 v6.9 l-2.8 -1.5 v-5.4Z" fill="#e2e2e2"/>
<rect x="1372.5" y="247" width="190" height="18.5" fill="#4a6894"/>
<path d="M1375.8 255.8 q5.5 -5.8 11 0 q-5.5 5.8 -11 0Z" fill="#e8e8e8"/>
<circle cx="1381.3" cy="255.8" r="2.1" fill="#4a6894"/>
<circle cx="1381.3" cy="255.8" r="0.9" fill="#e8e8e8"/>
<rect x="1410" y="248" width="2.4" height="16.5" fill="#4c8dff"/>
<path d="M1419.8 251.6 l3.8 4.2 l-3.8 4.2" fill="none" stroke="#f0f0f0" stroke-width="1.3"/>
<rect x="1435" y="248" width="16.3" height="16.5" fill="#f4f4f4" stroke="#2a2a2a" stroke-width="0.8"/>
<path d="M1437 252 l3 -1 l2 2 l3 -2 l2.5 1 l-1 3 l2.5 1.5 l-2 2.5 l-3 -1 l-2 3 l-3 -1 l1 -3 l-3 -1.5 l2 -2Z" fill="#1a1a1a"/>
<circle cx="1445.5" cy="259.5" r="1.3" fill="#f4f4f4"/>
<text x="1455" y="260" font-size="11" fill="#ededed" textLength="28.3" lengthAdjust="spacingAndGlyphs">Layer 1</text>
<circle cx="1540.8" cy="255.8" r="3.3" fill="none" stroke="#e8e8e8" stroke-width="1"/>
<rect x="1549.6" y="252" width="6.8" height="7" fill="#3576f6" stroke="#dfe6f5" stroke-width="0.9"/>
<path d="M1558 247 h4.5 v4.5Z" fill="#f0f0f0"/>
<rect x="1367.3" y="705" width="200.2" height="15" fill="#444"/>
<text x="1372" y="715.3" font-size="10" fill="#9a9a9a" textLength="27.5" lengthAdjust="spacingAndGlyphs">1 Layer</text>
<rect x="1421.5" y="709.5" width="7" height="6.5" fill="none" stroke="#9a9a9a" stroke-width="1"/>
<path d="M1425.5 712 l4.5 -4.5 M1427 707 h3.2 v3.2" fill="none" stroke="#9a9a9a" stroke-width="1"/>
<circle cx="1447.2" cy="710.8" r="3" fill="none" stroke="#9a9a9a" stroke-width="1.1"/>
<line x1="1449.4" y1="713" x2="1452.5" y2="716" stroke="#9a9a9a" stroke-width="1.3"/>
<rect x="1466" y="709" width="5" height="6.5" fill="none" stroke="#5c5c5c" stroke-width="0.9"/>
<rect x="1492" y="710" width="7" height="6" fill="none" stroke="#9a9a9a" stroke-width="1"/>
<path d="M1487.5 708 h3 v3 M1495.5 711 v4 M1493.5 713 h4" fill="none" stroke="#9a9a9a" stroke-width="0.9"/>
<rect x="1513.5" y="708.5" width="7.5" height="7.5" fill="none" stroke="#9a9a9a" stroke-width="1"/>
<path d="M1517.2 710.3 v4 M1515.2 712.3 h4" fill="none" stroke="#9a9a9a" stroke-width="0.9"/>
<path d="M1536 710 h6 l-0.6 6.5 h-4.8Z M1535 709 h8 M1538 708 h2" fill="none" stroke="#5c5c5c" stroke-width="0.9"/>
<rect x="388.4" y="706.5" width="712.4" height="13.5" fill="#444"/>
<text x="394.3" y="717.6" font-size="10" fill="#bdbdbd" textLength="23" lengthAdjust="spacingAndGlyphs">150%</text>
<path d="M440.8 712.8 l2.6 2.6 l2.6 -2.6" fill="none" stroke="#bdbdbd" stroke-width="1.1"/>
<line x1="452" y1="707" x2="452" y2="720" stroke="#3a3a3a" stroke-width="1"/>
<text x="457.8" y="717.6" font-size="10" fill="#bdbdbd" textLength="8" lengthAdjust="spacingAndGlyphs">0°</text>
<path d="M504 712.8 l2.6 2.6 l2.6 -2.6" fill="none" stroke="#bdbdbd" stroke-width="1.1"/>
<line x1="515" y1="707" x2="515" y2="720" stroke="#3a3a3a" stroke-width="1"/>
<path d="M524 711.5 v6 M529 711.5 l-3.6 3 l3.6 3Z" fill="#5e5e5e" stroke="#5e5e5e" stroke-width="1"/>
<path d="M543.5 711.5 l-3.6 3 l3.6 3Z" fill="#5e5e5e"/>
<text x="555.7" y="717.6" font-size="10" fill="#bdbdbd">1</text>
<path d="M591 712.8 l2.6 2.6 l2.6 -2.6" fill="none" stroke="#bdbdbd" stroke-width="1.1"/>
<path d="M611 711.5 l3.6 3 l-3.6 3Z" fill="#5e5e5e"/>
<path d="M628.5 711.5 v6 M623.5 711.5 l3.6 3 l-3.6 3Z" fill="#5e5e5e" stroke="#5e5e5e" stroke-width="1"/>
<text x="708.7" y="717.6" font-size="10" fill="#8e8e8e" textLength="34.8" lengthAdjust="spacingAndGlyphs">Selection</text>
<path d="M818.5 711.5 l4 3.2 l-4 3.2Z" fill="#8a8a8a"/>
<path d="M838 711.8 l-2.6 2.8 l2.6 2.8" fill="none" stroke="#6e6e6e" stroke-width="1"/>
</g></g>
<rect x="0" y="492" width="1899" height="278" fill="url(#shade)"/>
</svg>
<div class="abs" style="left:15px;top:706px;width:1869px;height:4px;background:rgba(255,255,255,0.22);"></div>
<div class="abs" style="left:15px;top:706px;width:1042px;height:4px;background:rgba(255,255,255,0.42);"></div>
<div class="abs" style="left:15px;top:706px;width:1026px;height:4px;background:#ff0000;"></div>
<svg class="abs" style="left:0;top:720px" width="1899" height="50" viewBox="0 720 1899 50">
  <path d="M35.2 728.3 L54.3 740 L35.2 751.7Z" fill="#e8e8e8"/>
  <path d="M92.6 730 L107.4 740 L92.6 750Z M109.9 730 h3.4 v20 h-3.4Z" fill="#e8e8e8"/>
  <g transform="translate(0.9 0)"><path d="M149.3 736 h4.7 l6 -6 v20 l-6 -6 h-4.7Z" fill="#e8e8e8"/>
  <path d="M162.7 734.3 a6.2 6.2 0 0 1 0 11.4Z" fill="#e8e8e8"/>
  <path d="M162.7 729 a11.3 11.3 0 0 1 0 22 v-2.8 a8.6 8.6 0 0 0 0 -16.4Z" fill="#e8e8e8"/></g>
  <text x="199" y="745.4" font-size="16.6" fill="#dddddd" textLength="95" lengthAdjust="spacingAndGlyphs" font-family='"Liberation Sans",sans-serif'>20:19 / 37:03</text>
  <!-- CC -->
  <rect x="1599.6" y="729.2" width="28" height="21.6" rx="3" fill="#e6e6e6"/>
  <path d="M1611.5 737.8 v-1.2 h-5.8 v6.8 h5.8 v-1.2 M1621.8 737.8 v-1.2 h-5.8 v6.8 h5.8 v-1.2" fill="none" stroke="#000" stroke-width="2.6"/>
  <!-- gear -->
  <g transform="translate(1673.4 740.2)"><path d="M-2.6 -12.3 h5.2 l0.7 3.2 l2.4 1.4 l3.1 -1 l2.6 4.5 l-2.4 2.2 v2.8 l2.4 2.2 l-2.6 4.5 l-3.1 -1 l-2.4 1.4 l-0.7 3.2 h-5.2 l-0.7 -3.2 l-2.4 -1.4 l-3.1 1 l-2.6 -4.5 l2.4 -2.2 v-2.8 l-2.4 -2.2 l2.6 -4.5 l3.1 1 l2.4 -1.4Z" fill="#e6e6e6"/><circle cx="0" cy="0" r="4" fill="#000"/></g>
  <!-- miniplayer -->
  <rect x="1719.6" y="728.5" width="28.8" height="23" rx="2.5" fill="none" stroke="#e6e6e6" stroke-width="2.4"/><rect x="1732.3" y="739.2" width="11.8" height="8.2" fill="#e6e6e6"/>
  <!-- theater -->
  <rect x="1782" y="733.3" width="22.8" height="13.4" fill="none" stroke="#e6e6e6" stroke-width="2.6"/>
  <!-- fullscreen -->
  <path d="M1842.2 736.4 v-7.8 h7.8 M1857 728.6 h7.8 v7.8 M1864.8 743.4 v7.8 h-7.8 M1850 751.2 h-7.8 v-7.8" fill="none" stroke="#e6e6e6" stroke-width="2.7"/>
</svg>

<div class="abs" style="left:30px;top:820px;width:88px;height:22px;border-radius:3px;background:#272727;"></div>
<svg class="abs" style="left:35px;top:825px" width="20" height="12" viewBox="0 0 20 12"><path d="M8.2 2.2 H5.4 a3.7 3.7 0 0 0 0 7.4 H8.2 M11.8 2.2 H14.6 a3.7 3.7 0 0 1 0 7.4 H11.8 M6.4 5.9 H13.6" fill="none" stroke="#aaa" stroke-width="1.4"/></svg>
<div class="abs" style="left:30px;top:852px;width:50px;height:50px;border-radius:50%;overflow:hidden;background:#1b1b1b;">
<svg width="50" height="50" viewBox="0 0 50 50"><defs><radialGradient id="avbg" cx="0.5" cy="0.5" r="0.6"><stop offset="0" stop-color="#3a3a3a"/><stop offset="1" stop-color="#151515"/></radialGradient><linearGradient id="face" x1="0" x2="1" y1="0" y2="0"><stop offset="0" stop-color="#a88a82"/><stop offset="0.25" stop-color="#d2bab0"/><stop offset="0.47" stop-color="#e6d6cc"/><stop offset="0.5" stop-color="#e58a2c"/><stop offset="0.8" stop-color="#c4661c"/><stop offset="1" stop-color="#7a3810"/></linearGradient></defs>
<rect width="50" height="50" fill="url(#avbg)"/>
<path d="M24 1.5 Q38 6 41 22 Q42 36 34.5 44 Q29 50 24.5 49.5 Q15.5 48 10.5 38 Q6.5 26 11.5 13 Q16 4 24 1.5Z" fill="url(#face)"/>
<path d="M16 24 q3 -1.5 6 0 M29 23 q3 -1.5 6 0" stroke="#4a2a18" stroke-width="1.2" fill="none"/><path d="M22 40 q3.5 1.5 7 0" stroke="#5a2a1a" stroke-width="1.1" fill="none"/><path d="M24.6 24 v10" stroke="#b08a78" stroke-width="0.8"/>
</svg></div>
<div class="abs" style="left:238px;top:856px;width:118px;height:45px;border-radius:23px;background:#f1f1f1;"></div>

<div class="abs pill" style="left:666px;width:167px;"></div>
<div class="abs" style="left:767px;top:864px;width:1px;height:29px;background:#4a4a4a;"></div>
<svg class="abs" style="left:678px;top:866px" width="28" height="26" viewBox="0 0 28 26"><path d="M3.4 12.6 H8.6 V23.4 H3.4Z M8.6 12.6 L14.8 3.4 Q17.4 3.6 17 6.4 L15.8 11.2 H23.4 Q25.6 11.6 25.2 13.8 L22.8 21.6 Q22.2 23.4 20.4 23.4 H8.6" fill="none" stroke="#f1f1f1" stroke-width="1.4" stroke-linejoin="round"/></svg>
<svg class="abs" style="left:783px;top:866px" width="28" height="26" viewBox="0 0 28 26"><g transform="rotate(180 14 13)"><path d="M3.4 12.6 H8.6 V23.4 H3.4Z M8.6 12.6 L14.8 3.4 Q17.4 3.6 17 6.4 L15.8 11.2 H23.4 Q25.6 11.6 25.2 13.8 L22.8 21.6 Q22.2 23.4 20.4 23.4 H8.6" fill="none" stroke="#f1f1f1" stroke-width="1.4" stroke-linejoin="round"/></g></svg>
<div class="abs pill" style="left:842.7px;width:114.6px;"></div>
<svg class="abs" style="left:856px;top:866px" width="30" height="26" viewBox="0 0 30 26"><path d="M17 3.6 L27 12.2 L17 20.8 V15.8 Q8 15.4 2.6 22.6 Q4.6 10.6 17 8.8Z" fill="none" stroke="#f1f1f1" stroke-width="1.4" stroke-linejoin="round"/></svg>
<div class="abs pill" style="left:967.7px;width:148px;"></div>
<svg class="abs" style="left:984px;top:866px" width="22" height="26" viewBox="0 0 22 26"><path d="M10.8 3 V17.4 M4.8 11.6 L10.8 17.6 L16.8 11.6 M3.8 21.8 H17.8" fill="none" stroke="#f1f1f1" stroke-width="1.4"/></svg>
<div class="abs" style="left:1125.7px;top:855.8px;width:45.3px;height:45.3px;border-radius:50%;background:#272727;"></div>
<svg class="abs" style="left:1136px;top:874px" width="26" height="10" viewBox="0 0 26 10"><circle cx="4.6" cy="5" r="1.7" fill="#f1f1f1"/><circle cx="12.4" cy="5" r="1.7" fill="#f1f1f1"/><circle cx="20.2" cy="5" r="1.7" fill="#f1f1f1"/></svg>

<div class="abs chip" style="left:1201px;width:51px;background:#f1f1f1;color:#0f0f0f;font-weight:normal;"></div>
<div class="abs chip" style="left:1262px;width:88px;"></div>
<div class="abs chip" style="left:1360px;width:174px;"></div>
<div class="abs chip" style="left:1544px;width:99px;"></div>
<div class="abs" style="left:1201px;top:893px;width:503px;height:1px;background:#3a3a3a;"></div>
<svg class="abs" style="left:0;top:770px" width="1899" height="140" viewBox="0 770 1899 140" font-family='"Liberation Sans",sans-serif' >
<text x="30.6" y="810.5" font-size="25" fill="#f1f1f1" font-weight="bold" textLength="270.5" lengthAdjust="spacingAndGlyphs">M&amp;M Module2 Tutorial3</text>
<text x="58" y="835.5" font-size="14.8" fill="#aaaaaa" font-weight="bold" textLength="54.3" lengthAdjust="spacingAndGlyphs">Unlisted</text>
<text x="95.2" y="874.2" font-size="20.3" fill="#f1f1f1" font-weight="bold" textLength="112.6" lengthAdjust="spacingAndGlyphs">Steve Hudak</text>
<text x="95.6" y="896.6" font-size="15" fill="#aaaaaa" textLength="88.9" lengthAdjust="spacingAndGlyphs">8 subscribers</text>
<text x="258.3" y="884.7" font-size="18" fill="#0f0f0f" stroke="#0f0f0f" stroke-width="0.35" textLength="77.5" lengthAdjust="spacingAndGlyphs">Subscribe</text>
<text x="716.8" y="884.7" font-size="18" fill="#f1f1f1" font-weight="bold" textLength="31.6" lengthAdjust="spacingAndGlyphs">Like</text>
<text x="893.4" y="884.7" font-size="18" fill="#f1f1f1" font-weight="bold" textLength="44.7" lengthAdjust="spacingAndGlyphs">Share</text>
<text x="1018.7" y="884.7" font-size="18" fill="#f1f1f1" font-weight="bold" textLength="77.4" lengthAdjust="spacingAndGlyphs">Download</text>
<text x="1216.3" y="837.1" font-size="18.3" fill="#0f0f0f" stroke="#0f0f0f" stroke-width="0.2" textLength="19.5" lengthAdjust="spacingAndGlyphs">All</text>
<text x="1276.8" y="837.1" font-size="18.3" fill="#f1f1f1" font-weight="bold" textLength="57.4" lengthAdjust="spacingAndGlyphs">For you</text>
<text x="1374.9" y="837.1" font-size="18.3" fill="#f1f1f1" font-weight="bold" textLength="144.5" lengthAdjust="spacingAndGlyphs">Recently uploaded</text>
<text x="1559" y="837.1" font-size="18.3" fill="#f1f1f1" font-weight="bold" textLength="69.2" lengthAdjust="spacingAndGlyphs">Watched</text>
</svg>

<div id="sb" class="abs"></div>
<div id="sbthumb" class="abs"></div>
<svg class="abs" style="left:1899px;top:0" width="19" height="910" viewBox="0 0 19 910"><path d="M5.5 13 L9.5 8 L13.5 13Z" fill="#a8a8a8"/><path d="M5.5 897 L9.5 902 L13.5 897Z" fill="#a8a8a8"/></svg>
</div>
</body>
</html>
